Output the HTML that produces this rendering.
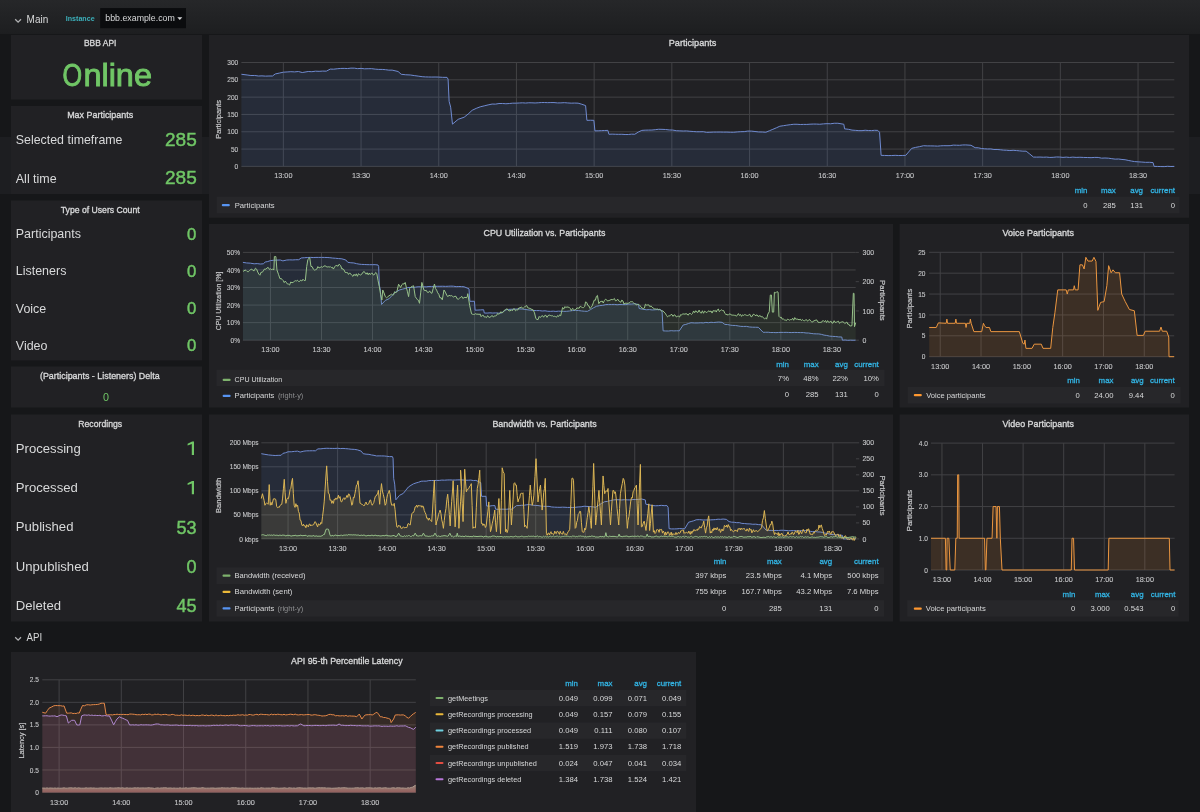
<!DOCTYPE html>
<html><head><meta charset="utf-8"><title>BBB Dashboard</title>
<style>html,body{margin:0;padding:0;background:#161719;width:1200px;height:812px;overflow:hidden}svg{display:block;will-change:transform}text{font-family:"Liberation Sans",sans-serif}</style>
</head><body>
<svg width="1200" height="812" viewBox="0 0 1200 812" font-family="Liberation Sans, sans-serif">
<defs><linearGradient id="topg" x1="0" y1="0" x2="0" y2="1"><stop offset="0" stop-color="#262729"/><stop offset="1" stop-color="#1d1e20"/></linearGradient></defs>
<rect x="0.00" y="0.00" width="1200.00" height="812.00" fill="#161719" />
<rect x="0.00" y="0.00" width="1200.00" height="34.00" fill="url(#topg)" />
<rect x="0.00" y="137.00" width="1200.00" height="57.00" fill="#1d1e21" />
<path d="M15.2,19.3 L18.1,22.2 L21,19.3" fill="none" stroke="#b0b1b3" stroke-width="1.3"/>
<text x="26.60" y="23.20" font-size="10.4" fill="#d8d9da" textLength="21.60" lengthAdjust="spacingAndGlyphs" >Main</text>
<text x="65.80" y="20.80" font-size="7.6" fill="#3cb0bb" textLength="28.80" lengthAdjust="spacingAndGlyphs" font-weight="bold" >Instance</text>
<rect x="100.20" y="8.10" width="85.80" height="20.10" fill="#0b0c0e" />
<text x="105.30" y="21.40" font-size="8.9" fill="#d8d9da" textLength="69.50" lengthAdjust="spacingAndGlyphs" >bbb.example.com</text>
<path d="M177.3,17.2 L182.3,17.2 L179.8,19.9 Z" fill="#d8d9da"/>
<path d="M15.2,637.2 L18.1,640.1 L21,637.2" fill="none" stroke="#b0b1b3" stroke-width="1.3"/>
<text x="26.50" y="640.80" font-size="10.4" fill="#d8d9da" textLength="15.60" lengthAdjust="spacingAndGlyphs" >API</text>
<rect x="11.00" y="35.00" width="191.00" height="64.60" fill="#212124" />
<rect x="11.00" y="106.00" width="191.00" height="88.00" fill="#212124" />
<rect x="11.00" y="200.40" width="191.00" height="160.00" fill="#212124" />
<rect x="11.00" y="366.40" width="191.00" height="41.20" fill="#212124" />
<rect x="11.00" y="414.40" width="191.00" height="207.20" fill="#212124" />
<rect x="209.00" y="35.00" width="980.00" height="182.80" fill="#212124" />
<rect x="209.00" y="224.00" width="684.00" height="183.60" fill="#212124" />
<rect x="899.60" y="224.00" width="289.40" height="183.60" fill="#212124" />
<rect x="209.00" y="414.40" width="684.00" height="207.20" fill="#212124" />
<rect x="899.60" y="414.40" width="289.40" height="207.20" fill="#212124" />
<rect x="11.00" y="652.00" width="685.00" height="160.00" fill="#212124" />
<text x="100.20" y="46.40" font-size="9.0" fill="#d8d9da" stroke="#d8d9da" stroke-width="0.32" text-anchor="middle" textLength="32.40" lengthAdjust="spacingAndGlyphs" >BBB API</text>
<text x="62.40" y="86.40" font-size="31.5" fill="#70c666" stroke="#70c666" stroke-width="0.9" textLength="19.60" lengthAdjust="spacingAndGlyphs" >O</text>
<text x="83.40" y="86.40" font-size="31.5" fill="#70c666" stroke="#70c666" stroke-width="0.9" textLength="68.60" lengthAdjust="spacingAndGlyphs" >nline</text>
<text x="100.20" y="117.60" font-size="9.0" fill="#d8d9da" stroke="#d8d9da" stroke-width="0.32" text-anchor="middle" textLength="66.00" lengthAdjust="spacingAndGlyphs" >Max Participants</text>
<text x="15.80" y="144.20" font-size="13.6" fill="#d8d9da" textLength="106.70" lengthAdjust="spacingAndGlyphs" >Selected timeframe</text>
<text x="196.70" y="145.80" font-size="18.4" fill="#70c666" stroke="#70c666" stroke-width="0.45" text-anchor="end" textLength="31.70" lengthAdjust="spacingAndGlyphs" >285</text>
<text x="15.80" y="182.50" font-size="13.6" fill="#d8d9da" textLength="40.90" lengthAdjust="spacingAndGlyphs" >All time</text>
<text x="196.70" y="184.20" font-size="18.4" fill="#70c666" stroke="#70c666" stroke-width="0.45" text-anchor="end" textLength="31.70" lengthAdjust="spacingAndGlyphs" >285</text>
<text x="100.20" y="213.00" font-size="9.0" fill="#d8d9da" stroke="#d8d9da" stroke-width="0.32" text-anchor="middle" textLength="78.80" lengthAdjust="spacingAndGlyphs" >Type of Users Count</text>
<text x="15.80" y="238.30" font-size="13.4" fill="#d8d9da" textLength="65.11" lengthAdjust="spacingAndGlyphs" >Participants</text>
<text x="196.30" y="239.50" font-size="16.5" fill="#70c666" stroke="#70c666" stroke-width="0.45" text-anchor="end" textLength="9.30" lengthAdjust="spacingAndGlyphs" >0</text>
<text x="15.80" y="275.40" font-size="13.4" fill="#d8d9da" textLength="50.57" lengthAdjust="spacingAndGlyphs" >Listeners</text>
<text x="196.30" y="276.60" font-size="16.5" fill="#70c666" stroke="#70c666" stroke-width="0.45" text-anchor="end" textLength="9.30" lengthAdjust="spacingAndGlyphs" >0</text>
<text x="15.80" y="312.50" font-size="13.4" fill="#d8d9da" textLength="30.49" lengthAdjust="spacingAndGlyphs" >Voice</text>
<text x="196.30" y="313.70" font-size="16.5" fill="#70c666" stroke="#70c666" stroke-width="0.45" text-anchor="end" textLength="9.30" lengthAdjust="spacingAndGlyphs" >0</text>
<text x="15.80" y="349.60" font-size="13.4" fill="#d8d9da" textLength="31.65" lengthAdjust="spacingAndGlyphs" >Video</text>
<text x="196.30" y="350.80" font-size="16.5" fill="#70c666" stroke="#70c666" stroke-width="0.45" text-anchor="end" textLength="9.30" lengthAdjust="spacingAndGlyphs" >0</text>
<text x="99.80" y="378.80" font-size="9.0" fill="#d8d9da" stroke="#d8d9da" stroke-width="0.32" text-anchor="middle" textLength="119.70" lengthAdjust="spacingAndGlyphs" >(Participants - Listeners) Delta</text>
<text x="106.00" y="400.50" font-size="11" fill="#70c666" text-anchor="middle" textLength="6.00" lengthAdjust="spacingAndGlyphs" >0</text>
<text x="100.20" y="426.70" font-size="9.0" fill="#d8d9da" stroke="#d8d9da" stroke-width="0.32" text-anchor="middle" textLength="43.80" lengthAdjust="spacingAndGlyphs" >Recordings</text>
<text x="15.80" y="452.50" font-size="13.6" fill="#d8d9da" textLength="64.92" lengthAdjust="spacingAndGlyphs" >Processing</text>
<path d="M194.0,441.50 L194.0,454.90 L191.8,454.90 L191.8,444.00 L187.6,445.60 L187.6,443.80 L192.1,441.50 Z" fill="#70c666"/>
<text x="15.80" y="491.90" font-size="13.6" fill="#d8d9da" textLength="62.01" lengthAdjust="spacingAndGlyphs" >Processed</text>
<path d="M194.0,480.90 L194.0,494.30 L191.8,494.30 L191.8,483.40 L187.6,485.00 L187.6,483.20 L192.1,480.90 Z" fill="#70c666"/>
<text x="15.80" y="531.30" font-size="13.6" fill="#d8d9da" textLength="57.64" lengthAdjust="spacingAndGlyphs" >Published</text>
<text x="196.50" y="533.50" font-size="18.4" fill="#70c666" stroke="#70c666" stroke-width="0.45" text-anchor="end" textLength="20.06" lengthAdjust="spacingAndGlyphs" >53</text>
<text x="15.80" y="570.70" font-size="13.6" fill="#d8d9da" textLength="72.96" lengthAdjust="spacingAndGlyphs" >Unpublished</text>
<text x="196.50" y="572.90" font-size="18.4" fill="#70c666" stroke="#70c666" stroke-width="0.45" text-anchor="end" textLength="10.03" lengthAdjust="spacingAndGlyphs" >0</text>
<text x="15.80" y="610.10" font-size="13.6" fill="#d8d9da" textLength="45.24" lengthAdjust="spacingAndGlyphs" >Deleted</text>
<text x="196.50" y="612.30" font-size="18.4" fill="#70c666" stroke="#70c666" stroke-width="0.45" text-anchor="end" textLength="20.06" lengthAdjust="spacingAndGlyphs" >45</text>
<text x="692.60" y="46.00" font-size="9.2" fill="#d8d9da" stroke="#d8d9da" stroke-width="0.32" text-anchor="middle" textLength="47.70" lengthAdjust="spacingAndGlyphs" >Participants</text>
<line x1="241.40" y1="166.40" x2="1174.30" y2="166.40" stroke="#424245" stroke-width="1"/>
<line x1="241.40" y1="149.08" x2="1174.30" y2="149.08" stroke="#424245" stroke-width="1"/>
<line x1="241.40" y1="131.77" x2="1174.30" y2="131.77" stroke="#424245" stroke-width="1"/>
<line x1="241.40" y1="114.45" x2="1174.30" y2="114.45" stroke="#424245" stroke-width="1"/>
<line x1="241.40" y1="97.13" x2="1174.30" y2="97.13" stroke="#424245" stroke-width="1"/>
<line x1="241.40" y1="79.82" x2="1174.30" y2="79.82" stroke="#424245" stroke-width="1"/>
<line x1="241.40" y1="62.50" x2="1174.30" y2="62.50" stroke="#424245" stroke-width="1"/>
<line x1="283.36" y1="62.50" x2="283.36" y2="166.40" stroke="#424245" stroke-width="1"/>
<line x1="361.06" y1="62.50" x2="361.06" y2="166.40" stroke="#424245" stroke-width="1"/>
<line x1="438.75" y1="62.50" x2="438.75" y2="166.40" stroke="#424245" stroke-width="1"/>
<line x1="516.45" y1="62.50" x2="516.45" y2="166.40" stroke="#424245" stroke-width="1"/>
<line x1="594.15" y1="62.50" x2="594.15" y2="166.40" stroke="#424245" stroke-width="1"/>
<line x1="671.85" y1="62.50" x2="671.85" y2="166.40" stroke="#424245" stroke-width="1"/>
<line x1="749.55" y1="62.50" x2="749.55" y2="166.40" stroke="#424245" stroke-width="1"/>
<line x1="827.25" y1="62.50" x2="827.25" y2="166.40" stroke="#424245" stroke-width="1"/>
<line x1="904.95" y1="62.50" x2="904.95" y2="166.40" stroke="#424245" stroke-width="1"/>
<line x1="982.64" y1="62.50" x2="982.64" y2="166.40" stroke="#424245" stroke-width="1"/>
<line x1="1060.34" y1="62.50" x2="1060.34" y2="166.40" stroke="#424245" stroke-width="1"/>
<line x1="1138.04" y1="62.50" x2="1138.04" y2="166.40" stroke="#424245" stroke-width="1"/>
<path d="M241.40,74.28 L247.10,74.97 L250.90,75.52 L254.70,75.47 L258.49,76.01 L261.99,75.86 L265.49,76.14 L268.98,76.01 L272.48,76.01 L275.33,73.93 L279.34,73.09 L283.36,72.20 L287.11,71.94 L290.87,71.69 L294.62,71.90 L298.38,71.50 L302.26,72.54 L308.22,71.50 L311.85,71.70 L315.47,71.18 L319.10,71.33 L322.72,71.08 L326.35,71.16 L330.24,69.08 L333.73,69.18 L337.23,68.76 L340.72,68.44 L344.22,68.39 L347.59,68.54 L350.95,68.14 L354.32,68.17 L357.69,68.65 L361.06,68.39 L364.60,68.82 L368.13,68.71 L371.67,68.66 L375.21,69.15 L378.75,69.41 L382.29,69.43 L385.57,69.70 L388.85,70.15 L392.14,70.12 L398.09,71.50 L401.20,74.28 L405.73,74.78 L410.26,74.97 L414.24,75.58 L418.21,76.12 L422.18,76.70 L425.39,76.92 L428.60,76.99 L431.81,77.06 L435.02,77.00 L438.24,77.05 L442.64,77.34 L447.04,77.39 L448.08,79.12 L449.11,101.29 L450.67,107.18 L452.48,124.15 L458.18,119.30 L464.14,117.22 L468.15,114.02 L472.16,110.29 L476.18,108.38 L480.19,106.83 L484.16,105.88 L488.14,104.90 L492.11,104.06 L495.55,104.11 L498.99,103.53 L502.43,103.47 L505.87,103.76 L509.31,103.51 L512.75,103.17 L516.19,103.16 L519.34,102.99 L522.50,102.82 L525.65,103.06 L528.80,102.78 L531.95,102.82 L535.10,102.97 L538.25,102.77 L541.40,102.56 L544.55,102.53 L547.70,102.67 L550.86,102.57 L554.01,102.57 L557.45,102.91 L560.89,102.88 L564.33,102.66 L567.77,102.95 L571.21,103.17 L574.65,103.05 L578.09,103.16 L581.85,104.26 L585.60,105.58 L586.90,120.34 L590.40,120.24 L593.89,120.34 L594.93,130.87 L598.17,130.81 L601.40,130.66 L604.64,130.50 L607.88,130.38 L608.91,134.26 L612.15,134.11 L615.39,134.25 L618.63,134.32 L621.86,134.27 L625.10,134.52 L628.34,134.51 L631.58,134.15 L634.81,134.26 L638.31,132.05 L641.81,130.38 L645.17,130.16 L648.54,130.09 L651.91,130.04 L655.27,129.69 L658.64,129.25 L662.01,129.34 L665.58,129.50 L669.16,129.93 L672.73,130.06 L676.30,130.71 L679.88,130.87 L683.22,131.01 L686.55,130.92 L689.89,131.28 L693.23,131.50 L696.57,131.76 L699.91,131.76 L703.25,131.69 L706.58,132.37 L709.92,132.25 L713.33,132.09 L716.73,132.07 L720.13,132.04 L723.54,132.12 L726.94,132.08 L730.35,132.24 L733.75,132.25 L737.25,131.92 L740.74,131.70 L744.24,131.61 L747.74,131.07 L751.36,131.10 L754.99,131.51 L758.61,131.95 L762.24,132.01 L765.86,132.25 L769.36,130.75 L772.86,129.32 L776.35,127.82 L779.85,126.23 L783.35,125.71 L786.84,125.17 L790.34,124.68 L793.84,124.25 L797.07,124.27 L800.31,124.51 L803.55,124.40 L806.79,124.43 L810.02,124.20 L813.26,124.05 L816.50,124.09 L819.74,124.25 L823.36,123.89 L826.99,123.67 L830.61,123.78 L834.24,123.26 L837.87,123.25 L843.82,124.25 L844.60,128.86 L848.31,129.27 L852.02,130.10 L855.74,130.38 L858.88,130.65 L862.03,130.65 L865.17,130.24 L868.32,130.52 L871.46,130.60 L874.61,130.31 L877.75,130.38 L879.56,132.25 L881.12,155.35 L884.63,155.44 L888.15,155.59 L891.66,155.54 L895.18,155.34 L898.69,155.54 L902.21,155.48 L905.72,155.35 L911.68,148.39 L915.65,147.38 L919.62,146.64 L923.59,145.72 L927.22,145.90 L930.84,145.90 L934.47,145.97 L937.60,146.13 L940.74,145.82 L943.87,145.70 L947.01,145.72 L950.14,145.66 L953.27,145.12 L956.41,145.23 L959.54,145.30 L962.68,144.97 L965.81,144.93 L970.99,145.27 L975.13,147.70 L978.27,147.79 L981.41,148.50 L984.54,148.77 L987.68,148.97 L990.82,148.92 L993.95,149.50 L997.09,149.47 L1000.23,149.75 L1003.36,150.12 L1006.62,150.25 L1009.88,150.57 L1013.13,150.30 L1016.39,150.55 L1019.64,150.86 L1022.90,151.17 L1026.15,151.16 L1029.78,154.02 L1033.41,157.05 L1036.69,157.13 L1039.98,157.06 L1043.27,157.23 L1046.56,157.08 L1049.84,157.43 L1053.13,157.32 L1056.42,156.98 L1059.70,157.05 L1062.99,157.40 L1066.28,157.12 L1069.57,157.45 L1072.85,157.13 L1076.14,157.40 L1079.87,157.26 L1083.60,157.44 L1087.33,157.53 L1091.06,157.67 L1094.79,157.40 L1098.19,157.45 L1101.59,158.17 L1104.99,158.00 L1108.39,158.18 L1111.79,158.66 L1115.18,159.14 L1118.58,159.01 L1121.98,159.47 L1125.09,159.73 L1128.20,160.40 L1131.31,161.03 L1134.41,161.55 L1138.14,161.83 L1141.87,162.05 L1145.60,162.34 L1149.33,162.29 L1153.06,162.59 L1154.10,166.40 L1157.47,166.44 L1160.83,166.57 L1164.20,166.62 L1167.57,166.31 L1170.93,166.51 L1174.30,166.40 L1174.30,166.40 L241.40,166.40 Z" fill="#5794f2" fill-opacity="0.1"/>
<path d="M241.40,74.28 L247.10,74.97 L250.90,75.52 L254.70,75.47 L258.49,76.01 L261.99,75.86 L265.49,76.14 L268.98,76.01 L272.48,76.01 L275.33,73.93 L279.34,73.09 L283.36,72.20 L287.11,71.94 L290.87,71.69 L294.62,71.90 L298.38,71.50 L302.26,72.54 L308.22,71.50 L311.85,71.70 L315.47,71.18 L319.10,71.33 L322.72,71.08 L326.35,71.16 L330.24,69.08 L333.73,69.18 L337.23,68.76 L340.72,68.44 L344.22,68.39 L347.59,68.54 L350.95,68.14 L354.32,68.17 L357.69,68.65 L361.06,68.39 L364.60,68.82 L368.13,68.71 L371.67,68.66 L375.21,69.15 L378.75,69.41 L382.29,69.43 L385.57,69.70 L388.85,70.15 L392.14,70.12 L398.09,71.50 L401.20,74.28 L405.73,74.78 L410.26,74.97 L414.24,75.58 L418.21,76.12 L422.18,76.70 L425.39,76.92 L428.60,76.99 L431.81,77.06 L435.02,77.00 L438.24,77.05 L442.64,77.34 L447.04,77.39 L448.08,79.12 L449.11,101.29 L450.67,107.18 L452.48,124.15 L458.18,119.30 L464.14,117.22 L468.15,114.02 L472.16,110.29 L476.18,108.38 L480.19,106.83 L484.16,105.88 L488.14,104.90 L492.11,104.06 L495.55,104.11 L498.99,103.53 L502.43,103.47 L505.87,103.76 L509.31,103.51 L512.75,103.17 L516.19,103.16 L519.34,102.99 L522.50,102.82 L525.65,103.06 L528.80,102.78 L531.95,102.82 L535.10,102.97 L538.25,102.77 L541.40,102.56 L544.55,102.53 L547.70,102.67 L550.86,102.57 L554.01,102.57 L557.45,102.91 L560.89,102.88 L564.33,102.66 L567.77,102.95 L571.21,103.17 L574.65,103.05 L578.09,103.16 L581.85,104.26 L585.60,105.58 L586.90,120.34 L590.40,120.24 L593.89,120.34 L594.93,130.87 L598.17,130.81 L601.40,130.66 L604.64,130.50 L607.88,130.38 L608.91,134.26 L612.15,134.11 L615.39,134.25 L618.63,134.32 L621.86,134.27 L625.10,134.52 L628.34,134.51 L631.58,134.15 L634.81,134.26 L638.31,132.05 L641.81,130.38 L645.17,130.16 L648.54,130.09 L651.91,130.04 L655.27,129.69 L658.64,129.25 L662.01,129.34 L665.58,129.50 L669.16,129.93 L672.73,130.06 L676.30,130.71 L679.88,130.87 L683.22,131.01 L686.55,130.92 L689.89,131.28 L693.23,131.50 L696.57,131.76 L699.91,131.76 L703.25,131.69 L706.58,132.37 L709.92,132.25 L713.33,132.09 L716.73,132.07 L720.13,132.04 L723.54,132.12 L726.94,132.08 L730.35,132.24 L733.75,132.25 L737.25,131.92 L740.74,131.70 L744.24,131.61 L747.74,131.07 L751.36,131.10 L754.99,131.51 L758.61,131.95 L762.24,132.01 L765.86,132.25 L769.36,130.75 L772.86,129.32 L776.35,127.82 L779.85,126.23 L783.35,125.71 L786.84,125.17 L790.34,124.68 L793.84,124.25 L797.07,124.27 L800.31,124.51 L803.55,124.40 L806.79,124.43 L810.02,124.20 L813.26,124.05 L816.50,124.09 L819.74,124.25 L823.36,123.89 L826.99,123.67 L830.61,123.78 L834.24,123.26 L837.87,123.25 L843.82,124.25 L844.60,128.86 L848.31,129.27 L852.02,130.10 L855.74,130.38 L858.88,130.65 L862.03,130.65 L865.17,130.24 L868.32,130.52 L871.46,130.60 L874.61,130.31 L877.75,130.38 L879.56,132.25 L881.12,155.35 L884.63,155.44 L888.15,155.59 L891.66,155.54 L895.18,155.34 L898.69,155.54 L902.21,155.48 L905.72,155.35 L911.68,148.39 L915.65,147.38 L919.62,146.64 L923.59,145.72 L927.22,145.90 L930.84,145.90 L934.47,145.97 L937.60,146.13 L940.74,145.82 L943.87,145.70 L947.01,145.72 L950.14,145.66 L953.27,145.12 L956.41,145.23 L959.54,145.30 L962.68,144.97 L965.81,144.93 L970.99,145.27 L975.13,147.70 L978.27,147.79 L981.41,148.50 L984.54,148.77 L987.68,148.97 L990.82,148.92 L993.95,149.50 L997.09,149.47 L1000.23,149.75 L1003.36,150.12 L1006.62,150.25 L1009.88,150.57 L1013.13,150.30 L1016.39,150.55 L1019.64,150.86 L1022.90,151.17 L1026.15,151.16 L1029.78,154.02 L1033.41,157.05 L1036.69,157.13 L1039.98,157.06 L1043.27,157.23 L1046.56,157.08 L1049.84,157.43 L1053.13,157.32 L1056.42,156.98 L1059.70,157.05 L1062.99,157.40 L1066.28,157.12 L1069.57,157.45 L1072.85,157.13 L1076.14,157.40 L1079.87,157.26 L1083.60,157.44 L1087.33,157.53 L1091.06,157.67 L1094.79,157.40 L1098.19,157.45 L1101.59,158.17 L1104.99,158.00 L1108.39,158.18 L1111.79,158.66 L1115.18,159.14 L1118.58,159.01 L1121.98,159.47 L1125.09,159.73 L1128.20,160.40 L1131.31,161.03 L1134.41,161.55 L1138.14,161.83 L1141.87,162.05 L1145.60,162.34 L1149.33,162.29 L1153.06,162.59 L1154.10,166.40 L1157.47,166.44 L1160.83,166.57 L1164.20,166.62 L1167.57,166.31 L1170.93,166.51 L1174.30,166.40" fill="none" stroke="#6f8ad0" stroke-width="1.0" stroke-linejoin="round"/>
<text x="238.20" y="169.00" font-size="7.3" fill="#c4c5c7" stroke="#c4c5c7" stroke-width="0.12" text-anchor="end" textLength="3.65" lengthAdjust="spacingAndGlyphs" >0</text>
<text x="238.20" y="151.68" font-size="7.3" fill="#c4c5c7" stroke="#c4c5c7" stroke-width="0.12" text-anchor="end" textLength="7.31" lengthAdjust="spacingAndGlyphs" >50</text>
<text x="238.20" y="134.37" font-size="7.3" fill="#c4c5c7" stroke="#c4c5c7" stroke-width="0.12" text-anchor="end" textLength="10.96" lengthAdjust="spacingAndGlyphs" >100</text>
<text x="238.20" y="117.05" font-size="7.3" fill="#c4c5c7" stroke="#c4c5c7" stroke-width="0.12" text-anchor="end" textLength="10.96" lengthAdjust="spacingAndGlyphs" >150</text>
<text x="238.20" y="99.73" font-size="7.3" fill="#c4c5c7" stroke="#c4c5c7" stroke-width="0.12" text-anchor="end" textLength="10.96" lengthAdjust="spacingAndGlyphs" >200</text>
<text x="238.20" y="82.42" font-size="7.3" fill="#c4c5c7" stroke="#c4c5c7" stroke-width="0.12" text-anchor="end" textLength="10.96" lengthAdjust="spacingAndGlyphs" >250</text>
<text x="238.20" y="65.10" font-size="7.3" fill="#c4c5c7" stroke="#c4c5c7" stroke-width="0.12" text-anchor="end" textLength="10.96" lengthAdjust="spacingAndGlyphs" >300</text>
<text x="283.36" y="178.30" font-size="7.5" fill="#c4c5c7" stroke="#c4c5c7" stroke-width="0.12" text-anchor="middle" textLength="18.21" lengthAdjust="spacingAndGlyphs" >13:00</text>
<text x="361.06" y="178.30" font-size="7.5" fill="#c4c5c7" stroke="#c4c5c7" stroke-width="0.12" text-anchor="middle" textLength="18.21" lengthAdjust="spacingAndGlyphs" >13:30</text>
<text x="438.75" y="178.30" font-size="7.5" fill="#c4c5c7" stroke="#c4c5c7" stroke-width="0.12" text-anchor="middle" textLength="18.21" lengthAdjust="spacingAndGlyphs" >14:00</text>
<text x="516.45" y="178.30" font-size="7.5" fill="#c4c5c7" stroke="#c4c5c7" stroke-width="0.12" text-anchor="middle" textLength="18.21" lengthAdjust="spacingAndGlyphs" >14:30</text>
<text x="594.15" y="178.30" font-size="7.5" fill="#c4c5c7" stroke="#c4c5c7" stroke-width="0.12" text-anchor="middle" textLength="18.21" lengthAdjust="spacingAndGlyphs" >15:00</text>
<text x="671.85" y="178.30" font-size="7.5" fill="#c4c5c7" stroke="#c4c5c7" stroke-width="0.12" text-anchor="middle" textLength="18.21" lengthAdjust="spacingAndGlyphs" >15:30</text>
<text x="749.55" y="178.30" font-size="7.5" fill="#c4c5c7" stroke="#c4c5c7" stroke-width="0.12" text-anchor="middle" textLength="18.21" lengthAdjust="spacingAndGlyphs" >16:00</text>
<text x="827.25" y="178.30" font-size="7.5" fill="#c4c5c7" stroke="#c4c5c7" stroke-width="0.12" text-anchor="middle" textLength="18.21" lengthAdjust="spacingAndGlyphs" >16:30</text>
<text x="904.95" y="178.30" font-size="7.5" fill="#c4c5c7" stroke="#c4c5c7" stroke-width="0.12" text-anchor="middle" textLength="18.21" lengthAdjust="spacingAndGlyphs" >17:00</text>
<text x="982.64" y="178.30" font-size="7.5" fill="#c4c5c7" stroke="#c4c5c7" stroke-width="0.12" text-anchor="middle" textLength="18.21" lengthAdjust="spacingAndGlyphs" >17:30</text>
<text x="1060.34" y="178.30" font-size="7.5" fill="#c4c5c7" stroke="#c4c5c7" stroke-width="0.12" text-anchor="middle" textLength="18.21" lengthAdjust="spacingAndGlyphs" >18:00</text>
<text x="1138.04" y="178.30" font-size="7.5" fill="#c4c5c7" stroke="#c4c5c7" stroke-width="0.12" text-anchor="middle" textLength="18.21" lengthAdjust="spacingAndGlyphs" >18:30</text>
<text x="0" y="0" font-size="7.4" fill="#c4c5c7" text-anchor="middle" textLength="38.80" lengthAdjust="spacingAndGlyphs" stroke="#c4c5c7" stroke-width="0.2" transform="translate(218.80,119.40) rotate(-90)" dy="2.66">Participants</text>
<rect x="216.70" y="196.60" width="962.80" height="16.80" fill="#27272a" />
<text x="1087.50" y="193.00" font-size="7.9" fill="#33b5e5" stroke="#33b5e5" stroke-width="0.3" text-anchor="end" textLength="12.73" lengthAdjust="spacingAndGlyphs" >min</text>
<text x="1115.80" y="193.00" font-size="7.9" fill="#33b5e5" stroke="#33b5e5" stroke-width="0.3" text-anchor="end" textLength="14.92" lengthAdjust="spacingAndGlyphs" >max</text>
<text x="1143.00" y="193.00" font-size="7.9" fill="#33b5e5" stroke="#33b5e5" stroke-width="0.3" text-anchor="end" textLength="12.74" lengthAdjust="spacingAndGlyphs" >avg</text>
<text x="1175.00" y="193.00" font-size="7.9" fill="#33b5e5" stroke="#33b5e5" stroke-width="0.3" text-anchor="end" textLength="24.59" lengthAdjust="spacingAndGlyphs" >current</text>
<text x="1087.50" y="207.70" font-size="7.7" fill="#d8d9da" text-anchor="end" textLength="4.28" lengthAdjust="spacingAndGlyphs" >0</text>
<text x="1115.80" y="207.70" font-size="7.7" fill="#d8d9da" text-anchor="end" textLength="12.85" lengthAdjust="spacingAndGlyphs" >285</text>
<text x="1143.00" y="207.70" font-size="7.7" fill="#d8d9da" text-anchor="end" textLength="12.85" lengthAdjust="spacingAndGlyphs" >131</text>
<text x="1175.00" y="207.70" font-size="7.7" fill="#d8d9da" text-anchor="end" textLength="4.28" lengthAdjust="spacingAndGlyphs" >0</text>
<rect x="221.80" y="204.10" width="8" height="2.2" rx="1" fill="#5794f2"/>
<text x="234.70" y="207.70" font-size="7.4" fill="#d8d9da" textLength="40.00" lengthAdjust="spacingAndGlyphs" >Participants</text>
<text x="544.50" y="236.10" font-size="9.0" fill="#d8d9da" stroke="#d8d9da" stroke-width="0.32" text-anchor="middle" textLength="122.00" lengthAdjust="spacingAndGlyphs" >CPU Utilization vs. Participants</text>
<line x1="242.90" y1="340.20" x2="855.70" y2="340.20" stroke="#424245" stroke-width="1"/>
<line x1="242.90" y1="322.64" x2="855.70" y2="322.64" stroke="#424245" stroke-width="1"/>
<line x1="242.90" y1="305.08" x2="855.70" y2="305.08" stroke="#424245" stroke-width="1"/>
<line x1="242.90" y1="287.52" x2="855.70" y2="287.52" stroke="#424245" stroke-width="1"/>
<line x1="242.90" y1="269.96" x2="855.70" y2="269.96" stroke="#424245" stroke-width="1"/>
<line x1="242.90" y1="252.40" x2="855.70" y2="252.40" stroke="#424245" stroke-width="1"/>
<line x1="270.46" y1="252.40" x2="270.46" y2="340.20" stroke="#424245" stroke-width="1"/>
<line x1="321.50" y1="252.40" x2="321.50" y2="340.20" stroke="#424245" stroke-width="1"/>
<line x1="372.54" y1="252.40" x2="372.54" y2="340.20" stroke="#424245" stroke-width="1"/>
<line x1="423.58" y1="252.40" x2="423.58" y2="340.20" stroke="#424245" stroke-width="1"/>
<line x1="474.61" y1="252.40" x2="474.61" y2="340.20" stroke="#424245" stroke-width="1"/>
<line x1="525.65" y1="252.40" x2="525.65" y2="340.20" stroke="#424245" stroke-width="1"/>
<line x1="576.69" y1="252.40" x2="576.69" y2="340.20" stroke="#424245" stroke-width="1"/>
<line x1="627.73" y1="252.40" x2="627.73" y2="340.20" stroke="#424245" stroke-width="1"/>
<line x1="678.77" y1="252.40" x2="678.77" y2="340.20" stroke="#424245" stroke-width="1"/>
<line x1="729.81" y1="252.40" x2="729.81" y2="340.20" stroke="#424245" stroke-width="1"/>
<line x1="780.84" y1="252.40" x2="780.84" y2="340.20" stroke="#424245" stroke-width="1"/>
<line x1="831.88" y1="252.40" x2="831.88" y2="340.20" stroke="#424245" stroke-width="1"/>
<path d="M242.90,262.35 L246.64,262.94 L250.39,263.16 L254.13,263.81 L257.19,263.60 L260.25,264.02 L263.32,263.81 L265.19,262.06 L267.82,261.52 L270.46,260.59 L273.75,260.24 L277.04,260.09 L280.33,260.01 L282.88,260.89 L286.79,260.01 L289.77,259.86 L292.75,259.95 L295.72,259.74 L298.70,259.72 L301.25,257.96 L304.32,257.72 L307.38,257.53 L310.44,257.38 L313.21,257.54 L315.97,257.41 L318.73,257.43 L321.50,257.38 L324.29,257.45 L327.08,257.49 L329.87,257.69 L332.66,258.06 L335.45,258.25 L338.68,258.57 L341.91,258.84 L345.83,260.01 L347.87,262.35 L350.85,262.75 L353.82,262.94 L356.43,263.64 L359.04,264.13 L361.65,264.40 L364.29,264.49 L366.92,264.63 L369.56,264.68 L372.20,264.69 L375.09,264.65 L377.98,264.98 L378.66,266.45 L379.34,285.18 L380.36,290.15 L381.55,304.49 L385.30,300.40 L389.21,298.64 L391.85,295.70 L394.48,292.79 L397.12,291.30 L399.76,289.86 L402.37,289.20 L404.97,288.52 L407.58,287.52 L410.22,287.48 L412.86,287.44 L415.49,287.13 L418.13,286.78 L420.77,286.80 L423.41,286.76 L426.17,286.85 L428.93,286.46 L431.69,286.45 L434.44,286.43 L437.20,286.29 L439.96,286.30 L442.72,286.24 L445.48,286.39 L448.24,286.26 L450.88,286.12 L453.52,286.21 L456.16,286.67 L458.79,286.47 L461.43,286.58 L464.07,286.76 L469.00,288.81 L469.85,301.28 L474.44,301.28 L475.12,310.17 L477.96,310.05 L480.80,309.89 L483.63,309.76 L484.31,313.04 L487.15,313.05 L489.98,312.84 L492.82,313.04 L495.65,312.89 L498.49,313.11 L501.32,313.04 L505.92,309.76 L508.57,309.41 L511.23,309.22 L513.88,309.25 L516.53,309.03 L519.19,308.88 L522.12,309.01 L525.06,309.42 L527.99,309.86 L530.93,310.17 L533.75,310.47 L536.56,310.59 L539.38,310.58 L542.20,311.00 L545.02,310.82 L547.84,311.28 L550.66,311.34 L553.27,311.15 L555.88,311.43 L558.49,311.13 L561.10,311.25 L563.70,311.34 L566.31,311.34 L569.38,311.00 L572.44,310.61 L575.50,310.35 L578.48,310.56 L581.45,310.93 L584.43,311.23 L587.41,311.34 L590.47,309.64 L593.53,307.74 L596.60,306.25 L599.66,305.64 L602.72,305.34 L605.78,304.58 L608.62,304.43 L611.45,304.48 L614.29,304.39 L617.12,304.73 L619.96,304.47 L622.80,304.58 L625.77,304.58 L628.75,304.09 L631.73,304.05 L634.70,303.73 L638.62,304.58 L639.13,308.47 L642.79,309.25 L646.44,309.76 L649.34,309.59 L652.23,309.95 L655.12,309.75 L658.01,309.60 L660.90,309.76 L662.09,311.34 L663.12,330.86 L665.81,330.98 L668.50,331.00 L671.20,330.69 L673.89,330.90 L676.58,330.76 L679.28,330.86 L683.19,324.98 L685.80,324.45 L688.41,323.54 L691.02,322.73 L694.59,322.98 L698.16,322.93 L700.73,322.74 L703.31,322.91 L705.88,322.39 L708.45,322.72 L711.03,322.28 L713.60,322.50 L716.17,322.28 L718.75,322.05 L722.15,322.35 L724.87,324.40 L727.52,324.54 L730.17,325.14 L732.82,325.42 L735.47,325.48 L738.12,325.91 L740.77,326.37 L743.42,326.44 L746.41,326.39 L749.40,326.96 L752.40,327.19 L755.39,327.22 L758.39,327.32 L763.15,332.30 L765.70,332.27 L768.25,332.24 L770.81,332.56 L773.36,332.48 L775.91,332.65 L778.46,332.48 L781.01,332.36 L783.57,332.40 L786.12,332.35 L788.67,332.44 L791.22,332.59 L794.28,332.42 L797.35,332.49 L800.41,332.60 L803.47,332.59 L806.02,332.97 L808.57,333.02 L811.13,333.43 L813.68,333.78 L816.23,333.87 L818.78,333.92 L821.33,334.35 L824.06,335.11 L826.78,335.48 L829.50,336.10 L832.56,336.37 L835.62,336.53 L838.69,336.93 L841.75,336.98 L842.43,340.20 L845.08,339.98 L847.74,340.31 L850.39,340.15 L853.05,340.24 L855.70,340.20 L855.70,340.20 L242.90,340.20 Z" fill="#5794f2" fill-opacity="0.1"/>
<path d="M242.90,262.35 L246.64,262.94 L250.39,263.16 L254.13,263.81 L257.19,263.60 L260.25,264.02 L263.32,263.81 L265.19,262.06 L267.82,261.52 L270.46,260.59 L273.75,260.24 L277.04,260.09 L280.33,260.01 L282.88,260.89 L286.79,260.01 L289.77,259.86 L292.75,259.95 L295.72,259.74 L298.70,259.72 L301.25,257.96 L304.32,257.72 L307.38,257.53 L310.44,257.38 L313.21,257.54 L315.97,257.41 L318.73,257.43 L321.50,257.38 L324.29,257.45 L327.08,257.49 L329.87,257.69 L332.66,258.06 L335.45,258.25 L338.68,258.57 L341.91,258.84 L345.83,260.01 L347.87,262.35 L350.85,262.75 L353.82,262.94 L356.43,263.64 L359.04,264.13 L361.65,264.40 L364.29,264.49 L366.92,264.63 L369.56,264.68 L372.20,264.69 L375.09,264.65 L377.98,264.98 L378.66,266.45 L379.34,285.18 L380.36,290.15 L381.55,304.49 L385.30,300.40 L389.21,298.64 L391.85,295.70 L394.48,292.79 L397.12,291.30 L399.76,289.86 L402.37,289.20 L404.97,288.52 L407.58,287.52 L410.22,287.48 L412.86,287.44 L415.49,287.13 L418.13,286.78 L420.77,286.80 L423.41,286.76 L426.17,286.85 L428.93,286.46 L431.69,286.45 L434.44,286.43 L437.20,286.29 L439.96,286.30 L442.72,286.24 L445.48,286.39 L448.24,286.26 L450.88,286.12 L453.52,286.21 L456.16,286.67 L458.79,286.47 L461.43,286.58 L464.07,286.76 L469.00,288.81 L469.85,301.28 L474.44,301.28 L475.12,310.17 L477.96,310.05 L480.80,309.89 L483.63,309.76 L484.31,313.04 L487.15,313.05 L489.98,312.84 L492.82,313.04 L495.65,312.89 L498.49,313.11 L501.32,313.04 L505.92,309.76 L508.57,309.41 L511.23,309.22 L513.88,309.25 L516.53,309.03 L519.19,308.88 L522.12,309.01 L525.06,309.42 L527.99,309.86 L530.93,310.17 L533.75,310.47 L536.56,310.59 L539.38,310.58 L542.20,311.00 L545.02,310.82 L547.84,311.28 L550.66,311.34 L553.27,311.15 L555.88,311.43 L558.49,311.13 L561.10,311.25 L563.70,311.34 L566.31,311.34 L569.38,311.00 L572.44,310.61 L575.50,310.35 L578.48,310.56 L581.45,310.93 L584.43,311.23 L587.41,311.34 L590.47,309.64 L593.53,307.74 L596.60,306.25 L599.66,305.64 L602.72,305.34 L605.78,304.58 L608.62,304.43 L611.45,304.48 L614.29,304.39 L617.12,304.73 L619.96,304.47 L622.80,304.58 L625.77,304.58 L628.75,304.09 L631.73,304.05 L634.70,303.73 L638.62,304.58 L639.13,308.47 L642.79,309.25 L646.44,309.76 L649.34,309.59 L652.23,309.95 L655.12,309.75 L658.01,309.60 L660.90,309.76 L662.09,311.34 L663.12,330.86 L665.81,330.98 L668.50,331.00 L671.20,330.69 L673.89,330.90 L676.58,330.76 L679.28,330.86 L683.19,324.98 L685.80,324.45 L688.41,323.54 L691.02,322.73 L694.59,322.98 L698.16,322.93 L700.73,322.74 L703.31,322.91 L705.88,322.39 L708.45,322.72 L711.03,322.28 L713.60,322.50 L716.17,322.28 L718.75,322.05 L722.15,322.35 L724.87,324.40 L727.52,324.54 L730.17,325.14 L732.82,325.42 L735.47,325.48 L738.12,325.91 L740.77,326.37 L743.42,326.44 L746.41,326.39 L749.40,326.96 L752.40,327.19 L755.39,327.22 L758.39,327.32 L763.15,332.30 L765.70,332.27 L768.25,332.24 L770.81,332.56 L773.36,332.48 L775.91,332.65 L778.46,332.48 L781.01,332.36 L783.57,332.40 L786.12,332.35 L788.67,332.44 L791.22,332.59 L794.28,332.42 L797.35,332.49 L800.41,332.60 L803.47,332.59 L806.02,332.97 L808.57,333.02 L811.13,333.43 L813.68,333.78 L816.23,333.87 L818.78,333.92 L821.33,334.35 L824.06,335.11 L826.78,335.48 L829.50,336.10 L832.56,336.37 L835.62,336.53 L838.69,336.93 L841.75,336.98 L842.43,340.20 L845.08,339.98 L847.74,340.31 L850.39,340.15 L853.05,340.24 L855.70,340.20" fill="none" stroke="#6f8ad0" stroke-width="1.0" stroke-linejoin="round"/>
<path d="M242.90,270.84 L243.92,271.23 L244.94,269.96 L246.08,270.41 L247.21,271.54 L248.34,271.72 L249.48,270.51 L250.61,269.56 L251.75,269.08 L252.98,270.50 L254.21,270.71 L255.45,268.15 L256.68,269.26 L257.76,272.01 L258.84,274.08 L259.91,275.23 L261.05,272.20 L262.18,272.40 L263.32,270.84 L264.55,268.94 L265.78,269.24 L267.02,267.90 L268.25,267.50 L269.38,269.43 L270.52,268.71 L271.65,269.96 L272.76,268.80 L273.86,269.96 L274.37,256.61 L275.90,256.61 L276.93,269.96 L278.46,274.28 L279.99,278.74 L281.07,278.56 L282.14,279.37 L283.22,280.50 L284.24,282.58 L285.26,281.08 L286.28,282.32 L287.30,283.93 L288.32,284.01 L289.56,285.05 L290.79,281.97 L292.02,282.78 L293.26,282.25 L294.28,281.38 L295.30,280.70 L296.32,281.05 L297.34,280.22 L298.36,281.37 L299.52,281.53 L300.68,280.07 L301.83,281.02 L302.99,279.29 L304.15,280.50 L305.34,280.50 L306.70,266.62 L307.89,259.42 L309.76,257.67 L310.95,266.45 L312.14,266.57 L313.33,269.08 L314.47,270.09 L315.60,269.71 L316.74,269.19 L317.87,266.56 L319.00,267.97 L320.14,267.50 L321.37,266.66 L322.60,267.25 L323.84,266.16 L325.07,265.75 L326.11,266.52 L327.16,267.05 L328.20,266.73 L329.24,267.15 L330.28,266.55 L331.32,267.67 L332.37,267.31 L333.41,269.08 L334.56,266.97 L335.72,265.56 L336.88,265.59 L338.04,266.21 L339.19,264.17 L340.55,265.48 L341.91,269.08 L342.99,268.73 L344.07,270.03 L345.15,272.42 L346.26,272.57 L347.38,272.48 L348.49,274.44 L349.61,272.85 L350.72,274.04 L351.84,275.32 L352.95,276.39 L354.07,274.27 L355.18,275.75 L356.28,273.84 L357.38,276.31 L358.47,273.69 L359.57,274.55 L360.67,275.01 L361.76,274.18 L362.86,272.31 L363.96,271.61 L365.05,272.42 L366.09,274.19 L367.14,272.71 L368.18,274.84 L369.22,273.04 L370.26,274.60 L371.30,273.19 L372.35,273.20 L373.39,275.05 L374.52,274.51 L375.66,272.42 L376.79,273.47 L378.07,280.66 L379.34,286.64 L380.62,294.65 L381.89,299.99 L382.74,289.98 L384.02,293.00 L385.30,296.65 L386.53,297.74 L387.76,296.82 L389.00,295.76 L390.23,295.07 L391.34,294.17 L392.44,295.05 L393.55,294.85 L394.65,291.68 L395.76,292.88 L396.87,291.73 L398.57,284.18 L400.61,287.52 L401.76,284.80 L402.91,283.72 L404.05,284.09 L405.20,282.43 L406.34,287.29 L407.47,291.85 L408.60,296.65 L409.63,288.40 L410.93,287.07 L412.23,286.34 L413.54,285.76 L415.24,296.65 L416.30,298.13 L417.37,299.61 L418.43,300.26 L419.49,303.32 L420.68,292.85 L421.87,282.43 L423.92,289.98 L425.06,290.67 L426.20,290.24 L427.34,292.24 L428.49,292.51 L429.63,290.85 L430.77,292.77 L431.91,293.31 L433.19,288.51 L434.46,284.01 L435.54,288.48 L436.62,290.13 L437.70,292.79 L438.84,294.29 L439.99,297.82 L441.14,297.69 L442.29,299.81 L443.99,289.98 L445.35,292.11 L446.71,295.07 L447.87,296.71 L449.03,295.16 L450.18,295.91 L451.34,295.49 L452.50,296.30 L453.69,297.06 L454.88,296.23 L456.07,296.43 L457.26,298.98 L458.45,299.15 L459.64,298.06 L460.71,297.37 L461.78,296.34 L462.85,298.47 L463.92,297.69 L464.99,297.14 L466.06,297.87 L467.13,297.18 L467.81,293.67 L469.68,305.61 L471.55,313.86 L472.63,314.29 L473.71,314.45 L474.78,314.27 L475.86,313.56 L476.94,314.49 L478.02,313.86 L479.06,314.67 L480.11,313.85 L481.15,316.63 L482.20,315.35 L483.24,315.25 L484.29,317.02 L485.33,316.85 L486.48,317.59 L487.63,315.62 L488.78,317.28 L489.93,317.31 L491.07,316.39 L492.22,315.43 L493.37,317.18 L494.52,315.79 L495.57,315.90 L496.63,315.40 L497.68,313.37 L498.74,314.16 L499.79,313.51 L500.98,311.65 L502.17,313.08 L503.37,311.81 L504.56,310.08 L505.75,309.82 L506.84,308.60 L507.92,309.98 L509.01,310.69 L510.10,311.02 L511.19,309.73 L512.28,310.80 L513.37,308.85 L514.46,308.75 L515.55,310.82 L516.64,309.82 L517.76,310.04 L518.89,307.88 L520.02,307.92 L521.14,306.92 L522.27,307.90 L523.40,308.09 L524.53,307.10 L525.65,305.96 L526.72,305.58 L527.79,307.79 L528.86,308.10 L529.93,308.43 L531.00,308.97 L532.07,309.56 L533.14,309.82 L534.50,312.88 L535.86,318.60 L536.97,319.43 L538.07,319.64 L539.18,316.41 L540.28,317.55 L541.41,316.17 L542.53,315.66 L543.65,317.23 L544.77,315.42 L545.90,315.32 L547.02,317.37 L548.14,315.54 L549.27,315.08 L550.39,315.45 L551.51,315.79 L552.53,315.73 L553.55,316.46 L554.57,316.29 L555.59,316.65 L556.62,317.16 L557.64,315.51 L558.66,316.46 L559.68,314.81 L560.70,315.79 L562.57,307.54 L563.68,309.15 L564.78,306.61 L565.89,307.45 L566.99,306.90 L568.10,307.16 L569.20,307.33 L570.31,308.52 L571.42,310.48 L572.52,308.34 L573.63,309.29 L574.73,310.05 L575.84,309.36 L576.95,307.94 L578.05,308.09 L579.16,308.16 L580.26,306.22 L581.37,306.97 L582.47,307.55 L583.58,307.55 L584.69,306.48 L585.54,301.92 L586.69,302.44 L587.83,305.33 L588.98,306.03 L590.13,308.59 L591.18,307.18 L592.22,305.79 L593.27,302.84 L594.31,300.06 L595.36,300.22 L596.40,296.38 L597.45,295.42 L598.81,303.68 L599.93,301.79 L601.04,301.60 L602.16,301.00 L603.28,303.02 L604.40,300.51 L605.52,299.22 L606.63,299.81 L607.74,301.16 L608.84,300.39 L609.95,300.33 L611.06,299.44 L612.16,299.70 L613.27,299.48 L614.37,298.45 L615.48,300.82 L616.59,300.59 L617.69,299.11 L618.74,300.89 L619.78,301.50 L620.83,302.28 L621.87,300.02 L622.92,301.00 L623.96,304.03 L625.01,303.32 L626.08,303.09 L627.15,303.45 L628.21,303.23 L629.28,302.89 L630.35,301.73 L631.42,301.70 L632.49,301.74 L633.54,302.74 L634.58,303.82 L635.63,303.94 L636.67,305.14 L637.72,304.33 L638.76,304.37 L639.81,305.61 L640.96,306.60 L642.10,308.16 L643.25,308.47 L644.40,308.07 L645.42,304.20 L646.54,305.13 L647.65,304.93 L648.77,304.89 L649.88,306.69 L651.00,305.88 L652.11,306.97 L653.23,308.11 L654.34,308.82 L655.46,308.94 L656.50,309.21 L657.55,308.80 L658.59,309.95 L659.64,309.33 L660.69,310.32 L661.73,311.25 L662.78,310.70 L664.02,312.17 L665.27,313.24 L666.52,315.44 L667.61,316.88 L668.70,315.85 L669.78,315.94 L670.87,314.59 L671.96,314.50 L673.05,316.36 L674.14,314.80 L675.23,315.22 L676.32,316.98 L677.41,316.32 L678.48,316.20 L679.56,317.04 L680.64,314.63 L681.72,314.87 L682.79,313.92 L683.87,313.99 L684.95,314.15 L686.03,313.71 L687.10,314.01 L688.18,315.23 L689.26,313.47 L690.34,313.51 L691.42,314.51 L692.51,313.51 L693.60,310.96 L694.69,312.70 L695.78,310.70 L696.89,312.18 L697.99,312.35 L699.10,310.08 L700.20,312.49 L701.31,313.17 L702.41,310.78 L703.52,313.25 L704.63,311.16 L705.73,311.89 L706.84,312.63 L707.88,311.37 L708.93,310.80 L709.97,311.78 L711.02,310.88 L712.06,313.09 L713.11,310.58 L714.15,311.19 L715.20,310.35 L716.24,312.07 L717.29,309.84 L718.33,309.05 L719.38,311.61 L720.42,310.58 L721.47,309.82 L722.59,310.53 L723.71,310.61 L724.84,313.38 L725.96,314.49 L727.08,314.39 L728.11,315.24 L729.15,314.15 L730.18,313.78 L731.21,314.99 L732.24,315.13 L733.27,315.11 L734.30,315.32 L735.33,315.17 L736.37,316.30 L737.40,315.04 L738.43,313.62 L739.46,315.45 L740.49,314.46 L741.52,316.38 L742.55,314.77 L743.59,315.44 L744.62,314.63 L745.65,314.89 L746.68,315.39 L747.71,315.49 L748.74,314.99 L749.77,314.18 L750.81,316.55 L751.84,316.72 L752.87,314.66 L753.90,314.12 L754.93,315.39 L755.96,315.62 L756.99,314.75 L758.03,316.43 L759.06,316.18 L760.09,315.44 L761.17,317.01 L762.24,316.40 L763.32,317.87 L764.40,318.74 L765.48,317.91 L766.55,319.13 L767.91,314.01 L769.28,311.75 L770.30,295.07 L771.49,295.07 L772.34,312.10 L773.70,312.10 L774.38,292.26 L775.63,292.91 L776.87,291.61 L778.12,292.26 L778.97,316.32 L780.05,317.53 L781.13,317.07 L782.20,319.13 L783.25,318.86 L784.29,319.86 L785.34,320.02 L786.39,320.64 L787.43,319.19 L788.48,319.50 L789.52,320.16 L790.57,319.57 L791.61,319.69 L792.66,318.26 L793.70,320.25 L794.75,317.58 L795.79,319.19 L796.84,319.13 L797.94,319.17 L799.05,319.93 L800.15,319.12 L801.26,320.53 L802.31,319.57 L803.36,320.46 L804.41,320.76 L805.47,320.06 L806.52,319.68 L807.57,321.18 L808.62,320.19 L809.67,319.52 L810.72,321.14 L811.78,321.95 L812.83,321.99 L813.88,320.52 L814.93,320.70 L815.98,319.87 L817.03,320.25 L818.09,322.24 L819.14,322.46 L820.19,322.30 L821.24,322.58 L822.29,321.00 L823.34,320.57 L824.40,321.76 L825.48,320.50 L826.56,322.54 L827.64,320.61 L828.72,322.35 L829.80,322.00 L830.88,321.04 L831.96,323.07 L833.04,323.05 L834.12,320.71 L835.20,322.42 L836.29,322.22 L837.37,321.51 L838.45,321.21 L839.53,323.32 L840.61,322.28 L841.69,321.96 L842.77,321.76 L843.79,322.24 L844.81,323.54 L845.83,322.78 L846.85,322.04 L847.87,324.25 L848.89,324.20 L849.92,325.97 L850.94,325.91 L851.96,325.63 L853.32,293.31 L854.00,293.31 L854.51,326.68 L855.70,322.64 L855.70,340.20 L242.90,340.20 Z" fill="#7eb26d" fill-opacity="0.1"/>
<path d="M242.90,270.84 L243.92,271.23 L244.94,269.96 L246.08,270.41 L247.21,271.54 L248.34,271.72 L249.48,270.51 L250.61,269.56 L251.75,269.08 L252.98,270.50 L254.21,270.71 L255.45,268.15 L256.68,269.26 L257.76,272.01 L258.84,274.08 L259.91,275.23 L261.05,272.20 L262.18,272.40 L263.32,270.84 L264.55,268.94 L265.78,269.24 L267.02,267.90 L268.25,267.50 L269.38,269.43 L270.52,268.71 L271.65,269.96 L272.76,268.80 L273.86,269.96 L274.37,256.61 L275.90,256.61 L276.93,269.96 L278.46,274.28 L279.99,278.74 L281.07,278.56 L282.14,279.37 L283.22,280.50 L284.24,282.58 L285.26,281.08 L286.28,282.32 L287.30,283.93 L288.32,284.01 L289.56,285.05 L290.79,281.97 L292.02,282.78 L293.26,282.25 L294.28,281.38 L295.30,280.70 L296.32,281.05 L297.34,280.22 L298.36,281.37 L299.52,281.53 L300.68,280.07 L301.83,281.02 L302.99,279.29 L304.15,280.50 L305.34,280.50 L306.70,266.62 L307.89,259.42 L309.76,257.67 L310.95,266.45 L312.14,266.57 L313.33,269.08 L314.47,270.09 L315.60,269.71 L316.74,269.19 L317.87,266.56 L319.00,267.97 L320.14,267.50 L321.37,266.66 L322.60,267.25 L323.84,266.16 L325.07,265.75 L326.11,266.52 L327.16,267.05 L328.20,266.73 L329.24,267.15 L330.28,266.55 L331.32,267.67 L332.37,267.31 L333.41,269.08 L334.56,266.97 L335.72,265.56 L336.88,265.59 L338.04,266.21 L339.19,264.17 L340.55,265.48 L341.91,269.08 L342.99,268.73 L344.07,270.03 L345.15,272.42 L346.26,272.57 L347.38,272.48 L348.49,274.44 L349.61,272.85 L350.72,274.04 L351.84,275.32 L352.95,276.39 L354.07,274.27 L355.18,275.75 L356.28,273.84 L357.38,276.31 L358.47,273.69 L359.57,274.55 L360.67,275.01 L361.76,274.18 L362.86,272.31 L363.96,271.61 L365.05,272.42 L366.09,274.19 L367.14,272.71 L368.18,274.84 L369.22,273.04 L370.26,274.60 L371.30,273.19 L372.35,273.20 L373.39,275.05 L374.52,274.51 L375.66,272.42 L376.79,273.47 L378.07,280.66 L379.34,286.64 L380.62,294.65 L381.89,299.99 L382.74,289.98 L384.02,293.00 L385.30,296.65 L386.53,297.74 L387.76,296.82 L389.00,295.76 L390.23,295.07 L391.34,294.17 L392.44,295.05 L393.55,294.85 L394.65,291.68 L395.76,292.88 L396.87,291.73 L398.57,284.18 L400.61,287.52 L401.76,284.80 L402.91,283.72 L404.05,284.09 L405.20,282.43 L406.34,287.29 L407.47,291.85 L408.60,296.65 L409.63,288.40 L410.93,287.07 L412.23,286.34 L413.54,285.76 L415.24,296.65 L416.30,298.13 L417.37,299.61 L418.43,300.26 L419.49,303.32 L420.68,292.85 L421.87,282.43 L423.92,289.98 L425.06,290.67 L426.20,290.24 L427.34,292.24 L428.49,292.51 L429.63,290.85 L430.77,292.77 L431.91,293.31 L433.19,288.51 L434.46,284.01 L435.54,288.48 L436.62,290.13 L437.70,292.79 L438.84,294.29 L439.99,297.82 L441.14,297.69 L442.29,299.81 L443.99,289.98 L445.35,292.11 L446.71,295.07 L447.87,296.71 L449.03,295.16 L450.18,295.91 L451.34,295.49 L452.50,296.30 L453.69,297.06 L454.88,296.23 L456.07,296.43 L457.26,298.98 L458.45,299.15 L459.64,298.06 L460.71,297.37 L461.78,296.34 L462.85,298.47 L463.92,297.69 L464.99,297.14 L466.06,297.87 L467.13,297.18 L467.81,293.67 L469.68,305.61 L471.55,313.86 L472.63,314.29 L473.71,314.45 L474.78,314.27 L475.86,313.56 L476.94,314.49 L478.02,313.86 L479.06,314.67 L480.11,313.85 L481.15,316.63 L482.20,315.35 L483.24,315.25 L484.29,317.02 L485.33,316.85 L486.48,317.59 L487.63,315.62 L488.78,317.28 L489.93,317.31 L491.07,316.39 L492.22,315.43 L493.37,317.18 L494.52,315.79 L495.57,315.90 L496.63,315.40 L497.68,313.37 L498.74,314.16 L499.79,313.51 L500.98,311.65 L502.17,313.08 L503.37,311.81 L504.56,310.08 L505.75,309.82 L506.84,308.60 L507.92,309.98 L509.01,310.69 L510.10,311.02 L511.19,309.73 L512.28,310.80 L513.37,308.85 L514.46,308.75 L515.55,310.82 L516.64,309.82 L517.76,310.04 L518.89,307.88 L520.02,307.92 L521.14,306.92 L522.27,307.90 L523.40,308.09 L524.53,307.10 L525.65,305.96 L526.72,305.58 L527.79,307.79 L528.86,308.10 L529.93,308.43 L531.00,308.97 L532.07,309.56 L533.14,309.82 L534.50,312.88 L535.86,318.60 L536.97,319.43 L538.07,319.64 L539.18,316.41 L540.28,317.55 L541.41,316.17 L542.53,315.66 L543.65,317.23 L544.77,315.42 L545.90,315.32 L547.02,317.37 L548.14,315.54 L549.27,315.08 L550.39,315.45 L551.51,315.79 L552.53,315.73 L553.55,316.46 L554.57,316.29 L555.59,316.65 L556.62,317.16 L557.64,315.51 L558.66,316.46 L559.68,314.81 L560.70,315.79 L562.57,307.54 L563.68,309.15 L564.78,306.61 L565.89,307.45 L566.99,306.90 L568.10,307.16 L569.20,307.33 L570.31,308.52 L571.42,310.48 L572.52,308.34 L573.63,309.29 L574.73,310.05 L575.84,309.36 L576.95,307.94 L578.05,308.09 L579.16,308.16 L580.26,306.22 L581.37,306.97 L582.47,307.55 L583.58,307.55 L584.69,306.48 L585.54,301.92 L586.69,302.44 L587.83,305.33 L588.98,306.03 L590.13,308.59 L591.18,307.18 L592.22,305.79 L593.27,302.84 L594.31,300.06 L595.36,300.22 L596.40,296.38 L597.45,295.42 L598.81,303.68 L599.93,301.79 L601.04,301.60 L602.16,301.00 L603.28,303.02 L604.40,300.51 L605.52,299.22 L606.63,299.81 L607.74,301.16 L608.84,300.39 L609.95,300.33 L611.06,299.44 L612.16,299.70 L613.27,299.48 L614.37,298.45 L615.48,300.82 L616.59,300.59 L617.69,299.11 L618.74,300.89 L619.78,301.50 L620.83,302.28 L621.87,300.02 L622.92,301.00 L623.96,304.03 L625.01,303.32 L626.08,303.09 L627.15,303.45 L628.21,303.23 L629.28,302.89 L630.35,301.73 L631.42,301.70 L632.49,301.74 L633.54,302.74 L634.58,303.82 L635.63,303.94 L636.67,305.14 L637.72,304.33 L638.76,304.37 L639.81,305.61 L640.96,306.60 L642.10,308.16 L643.25,308.47 L644.40,308.07 L645.42,304.20 L646.54,305.13 L647.65,304.93 L648.77,304.89 L649.88,306.69 L651.00,305.88 L652.11,306.97 L653.23,308.11 L654.34,308.82 L655.46,308.94 L656.50,309.21 L657.55,308.80 L658.59,309.95 L659.64,309.33 L660.69,310.32 L661.73,311.25 L662.78,310.70 L664.02,312.17 L665.27,313.24 L666.52,315.44 L667.61,316.88 L668.70,315.85 L669.78,315.94 L670.87,314.59 L671.96,314.50 L673.05,316.36 L674.14,314.80 L675.23,315.22 L676.32,316.98 L677.41,316.32 L678.48,316.20 L679.56,317.04 L680.64,314.63 L681.72,314.87 L682.79,313.92 L683.87,313.99 L684.95,314.15 L686.03,313.71 L687.10,314.01 L688.18,315.23 L689.26,313.47 L690.34,313.51 L691.42,314.51 L692.51,313.51 L693.60,310.96 L694.69,312.70 L695.78,310.70 L696.89,312.18 L697.99,312.35 L699.10,310.08 L700.20,312.49 L701.31,313.17 L702.41,310.78 L703.52,313.25 L704.63,311.16 L705.73,311.89 L706.84,312.63 L707.88,311.37 L708.93,310.80 L709.97,311.78 L711.02,310.88 L712.06,313.09 L713.11,310.58 L714.15,311.19 L715.20,310.35 L716.24,312.07 L717.29,309.84 L718.33,309.05 L719.38,311.61 L720.42,310.58 L721.47,309.82 L722.59,310.53 L723.71,310.61 L724.84,313.38 L725.96,314.49 L727.08,314.39 L728.11,315.24 L729.15,314.15 L730.18,313.78 L731.21,314.99 L732.24,315.13 L733.27,315.11 L734.30,315.32 L735.33,315.17 L736.37,316.30 L737.40,315.04 L738.43,313.62 L739.46,315.45 L740.49,314.46 L741.52,316.38 L742.55,314.77 L743.59,315.44 L744.62,314.63 L745.65,314.89 L746.68,315.39 L747.71,315.49 L748.74,314.99 L749.77,314.18 L750.81,316.55 L751.84,316.72 L752.87,314.66 L753.90,314.12 L754.93,315.39 L755.96,315.62 L756.99,314.75 L758.03,316.43 L759.06,316.18 L760.09,315.44 L761.17,317.01 L762.24,316.40 L763.32,317.87 L764.40,318.74 L765.48,317.91 L766.55,319.13 L767.91,314.01 L769.28,311.75 L770.30,295.07 L771.49,295.07 L772.34,312.10 L773.70,312.10 L774.38,292.26 L775.63,292.91 L776.87,291.61 L778.12,292.26 L778.97,316.32 L780.05,317.53 L781.13,317.07 L782.20,319.13 L783.25,318.86 L784.29,319.86 L785.34,320.02 L786.39,320.64 L787.43,319.19 L788.48,319.50 L789.52,320.16 L790.57,319.57 L791.61,319.69 L792.66,318.26 L793.70,320.25 L794.75,317.58 L795.79,319.19 L796.84,319.13 L797.94,319.17 L799.05,319.93 L800.15,319.12 L801.26,320.53 L802.31,319.57 L803.36,320.46 L804.41,320.76 L805.47,320.06 L806.52,319.68 L807.57,321.18 L808.62,320.19 L809.67,319.52 L810.72,321.14 L811.78,321.95 L812.83,321.99 L813.88,320.52 L814.93,320.70 L815.98,319.87 L817.03,320.25 L818.09,322.24 L819.14,322.46 L820.19,322.30 L821.24,322.58 L822.29,321.00 L823.34,320.57 L824.40,321.76 L825.48,320.50 L826.56,322.54 L827.64,320.61 L828.72,322.35 L829.80,322.00 L830.88,321.04 L831.96,323.07 L833.04,323.05 L834.12,320.71 L835.20,322.42 L836.29,322.22 L837.37,321.51 L838.45,321.21 L839.53,323.32 L840.61,322.28 L841.69,321.96 L842.77,321.76 L843.79,322.24 L844.81,323.54 L845.83,322.78 L846.85,322.04 L847.87,324.25 L848.89,324.20 L849.92,325.97 L850.94,325.91 L851.96,325.63 L853.32,293.31 L854.00,293.31 L854.51,326.68 L855.70,322.64" fill="none" stroke="#98c28a" stroke-width="1.0" stroke-linejoin="round"/>
<text x="240.00" y="342.80" font-size="7.3" fill="#c4c5c7" stroke="#c4c5c7" stroke-width="0.12" text-anchor="end" textLength="9.50" lengthAdjust="spacingAndGlyphs" >0%</text>
<text x="240.00" y="325.24" font-size="7.3" fill="#c4c5c7" stroke="#c4c5c7" stroke-width="0.12" text-anchor="end" textLength="13.15" lengthAdjust="spacingAndGlyphs" >10%</text>
<text x="240.00" y="307.68" font-size="7.3" fill="#c4c5c7" stroke="#c4c5c7" stroke-width="0.12" text-anchor="end" textLength="13.15" lengthAdjust="spacingAndGlyphs" >20%</text>
<text x="240.00" y="290.12" font-size="7.3" fill="#c4c5c7" stroke="#c4c5c7" stroke-width="0.12" text-anchor="end" textLength="13.15" lengthAdjust="spacingAndGlyphs" >30%</text>
<text x="240.00" y="272.56" font-size="7.3" fill="#c4c5c7" stroke="#c4c5c7" stroke-width="0.12" text-anchor="end" textLength="13.15" lengthAdjust="spacingAndGlyphs" >40%</text>
<text x="240.00" y="255.00" font-size="7.3" fill="#c4c5c7" stroke="#c4c5c7" stroke-width="0.12" text-anchor="end" textLength="13.15" lengthAdjust="spacingAndGlyphs" >50%</text>
<text x="270.46" y="351.60" font-size="7.5" fill="#c4c5c7" stroke="#c4c5c7" stroke-width="0.12" text-anchor="middle" textLength="18.21" lengthAdjust="spacingAndGlyphs" >13:00</text>
<text x="321.50" y="351.60" font-size="7.5" fill="#c4c5c7" stroke="#c4c5c7" stroke-width="0.12" text-anchor="middle" textLength="18.21" lengthAdjust="spacingAndGlyphs" >13:30</text>
<text x="372.54" y="351.60" font-size="7.5" fill="#c4c5c7" stroke="#c4c5c7" stroke-width="0.12" text-anchor="middle" textLength="18.21" lengthAdjust="spacingAndGlyphs" >14:00</text>
<text x="423.58" y="351.60" font-size="7.5" fill="#c4c5c7" stroke="#c4c5c7" stroke-width="0.12" text-anchor="middle" textLength="18.21" lengthAdjust="spacingAndGlyphs" >14:30</text>
<text x="474.61" y="351.60" font-size="7.5" fill="#c4c5c7" stroke="#c4c5c7" stroke-width="0.12" text-anchor="middle" textLength="18.21" lengthAdjust="spacingAndGlyphs" >15:00</text>
<text x="525.65" y="351.60" font-size="7.5" fill="#c4c5c7" stroke="#c4c5c7" stroke-width="0.12" text-anchor="middle" textLength="18.21" lengthAdjust="spacingAndGlyphs" >15:30</text>
<text x="576.69" y="351.60" font-size="7.5" fill="#c4c5c7" stroke="#c4c5c7" stroke-width="0.12" text-anchor="middle" textLength="18.21" lengthAdjust="spacingAndGlyphs" >16:00</text>
<text x="627.73" y="351.60" font-size="7.5" fill="#c4c5c7" stroke="#c4c5c7" stroke-width="0.12" text-anchor="middle" textLength="18.21" lengthAdjust="spacingAndGlyphs" >16:30</text>
<text x="678.77" y="351.60" font-size="7.5" fill="#c4c5c7" stroke="#c4c5c7" stroke-width="0.12" text-anchor="middle" textLength="18.21" lengthAdjust="spacingAndGlyphs" >17:00</text>
<text x="729.81" y="351.60" font-size="7.5" fill="#c4c5c7" stroke="#c4c5c7" stroke-width="0.12" text-anchor="middle" textLength="18.21" lengthAdjust="spacingAndGlyphs" >17:30</text>
<text x="780.84" y="351.60" font-size="7.5" fill="#c4c5c7" stroke="#c4c5c7" stroke-width="0.12" text-anchor="middle" textLength="18.21" lengthAdjust="spacingAndGlyphs" >18:00</text>
<text x="831.88" y="351.60" font-size="7.5" fill="#c4c5c7" stroke="#c4c5c7" stroke-width="0.12" text-anchor="middle" textLength="18.21" lengthAdjust="spacingAndGlyphs" >18:30</text>
<text x="862.60" y="342.80" font-size="7.3" fill="#c4c5c7" stroke="#c4c5c7" stroke-width="0.12" textLength="3.86" lengthAdjust="spacingAndGlyphs" >0</text>
<line x1="855.70" y1="340.20" x2="858.90" y2="340.20" stroke="#424245" stroke-width="1"/>
<text x="862.60" y="313.53" font-size="7.3" fill="#c4c5c7" stroke="#c4c5c7" stroke-width="0.12" textLength="11.57" lengthAdjust="spacingAndGlyphs" >100</text>
<line x1="855.70" y1="310.93" x2="858.90" y2="310.93" stroke="#424245" stroke-width="1"/>
<text x="862.60" y="284.27" font-size="7.3" fill="#c4c5c7" stroke="#c4c5c7" stroke-width="0.12" textLength="11.57" lengthAdjust="spacingAndGlyphs" >200</text>
<line x1="855.70" y1="281.67" x2="858.90" y2="281.67" stroke="#424245" stroke-width="1"/>
<text x="862.60" y="255.00" font-size="7.3" fill="#c4c5c7" stroke="#c4c5c7" stroke-width="0.12" textLength="11.57" lengthAdjust="spacingAndGlyphs" >300</text>
<line x1="855.70" y1="252.40" x2="858.90" y2="252.40" stroke="#424245" stroke-width="1"/>
<text x="0" y="0" font-size="7.4" fill="#c4c5c7" text-anchor="middle" textLength="58.70" lengthAdjust="spacingAndGlyphs" stroke="#c4c5c7" stroke-width="0.2" transform="translate(218.80,301.00) rotate(-90)" dy="2.66">CPU Utilization [%]</text>
<text x="0" y="0" font-size="7.4" fill="#c4c5c7" text-anchor="middle" textLength="40.70" lengthAdjust="spacingAndGlyphs" stroke="#c4c5c7" stroke-width="0.2" transform="translate(882.80,300.40) rotate(90)" dy="2.66">Participants</text>
<rect x="216.50" y="369.60" width="668.00" height="16.40" fill="#27272a" />
<text x="789.00" y="366.70" font-size="7.9" fill="#33b5e5" stroke="#33b5e5" stroke-width="0.3" text-anchor="end" textLength="12.73" lengthAdjust="spacingAndGlyphs" >min</text>
<text x="818.60" y="366.70" font-size="7.9" fill="#33b5e5" stroke="#33b5e5" stroke-width="0.3" text-anchor="end" textLength="14.92" lengthAdjust="spacingAndGlyphs" >max</text>
<text x="847.80" y="366.70" font-size="7.9" fill="#33b5e5" stroke="#33b5e5" stroke-width="0.3" text-anchor="end" textLength="12.74" lengthAdjust="spacingAndGlyphs" >avg</text>
<text x="878.80" y="366.70" font-size="7.9" fill="#33b5e5" stroke="#33b5e5" stroke-width="0.3" text-anchor="end" textLength="24.59" lengthAdjust="spacingAndGlyphs" >current</text>
<text x="789.00" y="380.50" font-size="7.7" fill="#d8d9da" text-anchor="end" textLength="11.13" lengthAdjust="spacingAndGlyphs" >7%</text>
<text x="818.60" y="380.50" font-size="7.7" fill="#d8d9da" text-anchor="end" textLength="15.41" lengthAdjust="spacingAndGlyphs" >48%</text>
<text x="847.80" y="380.50" font-size="7.7" fill="#d8d9da" text-anchor="end" textLength="15.41" lengthAdjust="spacingAndGlyphs" >22%</text>
<text x="878.80" y="380.50" font-size="7.7" fill="#d8d9da" text-anchor="end" textLength="15.41" lengthAdjust="spacingAndGlyphs" >10%</text>
<text x="789.00" y="397.40" font-size="7.7" fill="#d8d9da" text-anchor="end" textLength="4.28" lengthAdjust="spacingAndGlyphs" >0</text>
<text x="818.60" y="397.40" font-size="7.7" fill="#d8d9da" text-anchor="end" textLength="12.85" lengthAdjust="spacingAndGlyphs" >285</text>
<text x="847.80" y="397.40" font-size="7.7" fill="#d8d9da" text-anchor="end" textLength="12.85" lengthAdjust="spacingAndGlyphs" >131</text>
<text x="878.80" y="397.40" font-size="7.7" fill="#d8d9da" text-anchor="end" textLength="4.28" lengthAdjust="spacingAndGlyphs" >0</text>
<rect x="222.60" y="378.70" width="8" height="2.2" rx="1" fill="#7eb26d"/>
<text x="234.60" y="382.40" font-size="7.4" fill="#d8d9da" textLength="47.50" lengthAdjust="spacingAndGlyphs" >CPU Utilization</text>
<rect x="222.60" y="394.70" width="8" height="2.2" rx="1" fill="#5794f2"/>
<text x="234.60" y="398.40" font-size="7.4" fill="#d8d9da" textLength="39.80" lengthAdjust="spacingAndGlyphs" >Participants</text>
<text x="277.90" y="398.40" font-size="7.4" fill="#8e8f91" textLength="25.40" lengthAdjust="spacingAndGlyphs" >(right-y)</text>
<text x="1038.30" y="236.00" font-size="9.0" fill="#d8d9da" stroke="#d8d9da" stroke-width="0.32" text-anchor="middle" textLength="71.50" lengthAdjust="spacingAndGlyphs" >Voice Participants</text>
<line x1="929.20" y1="356.70" x2="1174.20" y2="356.70" stroke="#424245" stroke-width="1"/>
<line x1="929.20" y1="335.82" x2="1174.20" y2="335.82" stroke="#424245" stroke-width="1"/>
<line x1="929.20" y1="314.94" x2="1174.20" y2="314.94" stroke="#424245" stroke-width="1"/>
<line x1="929.20" y1="294.06" x2="1174.20" y2="294.06" stroke="#424245" stroke-width="1"/>
<line x1="929.20" y1="273.18" x2="1174.20" y2="273.18" stroke="#424245" stroke-width="1"/>
<line x1="929.20" y1="252.30" x2="1174.20" y2="252.30" stroke="#424245" stroke-width="1"/>
<line x1="940.22" y1="252.30" x2="940.22" y2="356.70" stroke="#424245" stroke-width="1"/>
<line x1="981.03" y1="252.30" x2="981.03" y2="356.70" stroke="#424245" stroke-width="1"/>
<line x1="1021.84" y1="252.30" x2="1021.84" y2="356.70" stroke="#424245" stroke-width="1"/>
<line x1="1062.65" y1="252.30" x2="1062.65" y2="356.70" stroke="#424245" stroke-width="1"/>
<line x1="1103.46" y1="252.30" x2="1103.46" y2="356.70" stroke="#424245" stroke-width="1"/>
<line x1="1144.27" y1="252.30" x2="1144.27" y2="356.70" stroke="#424245" stroke-width="1"/>
<path d="M929.20,327.47 L936.27,327.47 L938.38,322.87 L946.20,323.29 L946.88,319.12 L947.56,323.29 L955.18,323.29 L955.86,319.12 L956.54,323.29 L965.39,323.29 L966.07,327.47 L966.75,323.29 L969.81,323.29 L970.35,319.12 L971.17,323.29 L973.89,331.64 L981.71,331.64 L983.41,323.29 L984.43,325.38 L985.93,327.47 L989.46,327.47 L990.89,331.64 L1019.32,331.64 L1022.86,343.34 L1024.22,344.17 L1024.97,340.00 L1025.92,348.35 L1032.04,348.35 L1034.22,344.17 L1041.29,344.17 L1042.99,348.35 L1050.68,348.35 L1052.79,327.47 L1054.90,312.85 L1057.75,289.88 L1066.19,289.88 L1067.28,294.06 L1068.30,289.88 L1073.53,289.88 L1074.28,285.71 L1075.23,289.88 L1078.09,289.88 L1079.93,264.83 L1082.38,264.83 L1084.14,269.00 L1085.84,257.31 L1087.95,261.07 L1092.17,261.07 L1093.94,257.31 L1095.98,261.49 L1097.82,310.35 L1100.60,302.41 L1104.14,301.58 L1106.86,285.71 L1108.63,265.66 L1111.15,272.76 L1112.98,269.84 L1115.36,272.76 L1119.58,272.76 L1121.69,294.06 L1125.23,301.58 L1129.38,309.51 L1134.34,310.76 L1137.13,335.40 L1143.46,335.40 L1145.16,331.23 L1159.58,331.23 L1161.00,327.05 L1162.30,331.23 L1166.65,331.23 L1168.76,337.07 L1169.03,356.70 L1174.20,356.70 L1174.20,356.70 L929.20,356.70 Z" fill="#ff9830" fill-opacity="0.12"/>
<path d="M929.20,327.47 L936.27,327.47 L938.38,322.87 L946.20,323.29 L946.88,319.12 L947.56,323.29 L955.18,323.29 L955.86,319.12 L956.54,323.29 L965.39,323.29 L966.07,327.47 L966.75,323.29 L969.81,323.29 L970.35,319.12 L971.17,323.29 L973.89,331.64 L981.71,331.64 L983.41,323.29 L984.43,325.38 L985.93,327.47 L989.46,327.47 L990.89,331.64 L1019.32,331.64 L1022.86,343.34 L1024.22,344.17 L1024.97,340.00 L1025.92,348.35 L1032.04,348.35 L1034.22,344.17 L1041.29,344.17 L1042.99,348.35 L1050.68,348.35 L1052.79,327.47 L1054.90,312.85 L1057.75,289.88 L1066.19,289.88 L1067.28,294.06 L1068.30,289.88 L1073.53,289.88 L1074.28,285.71 L1075.23,289.88 L1078.09,289.88 L1079.93,264.83 L1082.38,264.83 L1084.14,269.00 L1085.84,257.31 L1087.95,261.07 L1092.17,261.07 L1093.94,257.31 L1095.98,261.49 L1097.82,310.35 L1100.60,302.41 L1104.14,301.58 L1106.86,285.71 L1108.63,265.66 L1111.15,272.76 L1112.98,269.84 L1115.36,272.76 L1119.58,272.76 L1121.69,294.06 L1125.23,301.58 L1129.38,309.51 L1134.34,310.76 L1137.13,335.40 L1143.46,335.40 L1145.16,331.23 L1159.58,331.23 L1161.00,327.05 L1162.30,331.23 L1166.65,331.23 L1168.76,337.07 L1169.03,356.70 L1174.20,356.70" fill="none" stroke="#eb9640" stroke-width="1.0" stroke-linejoin="round"/>
<text x="925.50" y="359.30" font-size="7.3" fill="#c4c5c7" stroke="#c4c5c7" stroke-width="0.12" text-anchor="end" textLength="3.65" lengthAdjust="spacingAndGlyphs" >0</text>
<text x="925.50" y="338.42" font-size="7.3" fill="#c4c5c7" stroke="#c4c5c7" stroke-width="0.12" text-anchor="end" textLength="3.65" lengthAdjust="spacingAndGlyphs" >5</text>
<text x="925.50" y="317.54" font-size="7.3" fill="#c4c5c7" stroke="#c4c5c7" stroke-width="0.12" text-anchor="end" textLength="7.31" lengthAdjust="spacingAndGlyphs" >10</text>
<text x="925.50" y="296.66" font-size="7.3" fill="#c4c5c7" stroke="#c4c5c7" stroke-width="0.12" text-anchor="end" textLength="7.31" lengthAdjust="spacingAndGlyphs" >15</text>
<text x="925.50" y="275.78" font-size="7.3" fill="#c4c5c7" stroke="#c4c5c7" stroke-width="0.12" text-anchor="end" textLength="7.31" lengthAdjust="spacingAndGlyphs" >20</text>
<text x="925.50" y="254.90" font-size="7.3" fill="#c4c5c7" stroke="#c4c5c7" stroke-width="0.12" text-anchor="end" textLength="7.31" lengthAdjust="spacingAndGlyphs" >25</text>
<text x="940.22" y="368.50" font-size="7.5" fill="#c4c5c7" stroke="#c4c5c7" stroke-width="0.12" text-anchor="middle" textLength="18.21" lengthAdjust="spacingAndGlyphs" >13:00</text>
<text x="981.03" y="368.50" font-size="7.5" fill="#c4c5c7" stroke="#c4c5c7" stroke-width="0.12" text-anchor="middle" textLength="18.21" lengthAdjust="spacingAndGlyphs" >14:00</text>
<text x="1021.84" y="368.50" font-size="7.5" fill="#c4c5c7" stroke="#c4c5c7" stroke-width="0.12" text-anchor="middle" textLength="18.21" lengthAdjust="spacingAndGlyphs" >15:00</text>
<text x="1062.65" y="368.50" font-size="7.5" fill="#c4c5c7" stroke="#c4c5c7" stroke-width="0.12" text-anchor="middle" textLength="18.21" lengthAdjust="spacingAndGlyphs" >16:00</text>
<text x="1103.46" y="368.50" font-size="7.5" fill="#c4c5c7" stroke="#c4c5c7" stroke-width="0.12" text-anchor="middle" textLength="18.21" lengthAdjust="spacingAndGlyphs" >17:00</text>
<text x="1144.27" y="368.50" font-size="7.5" fill="#c4c5c7" stroke="#c4c5c7" stroke-width="0.12" text-anchor="middle" textLength="18.21" lengthAdjust="spacingAndGlyphs" >18:00</text>
<text x="0" y="0" font-size="7.4" fill="#c4c5c7" text-anchor="middle" textLength="39.80" lengthAdjust="spacingAndGlyphs" stroke="#c4c5c7" stroke-width="0.2" transform="translate(909.80,308.60) rotate(-90)" dy="2.66">Participants</text>
<rect x="907.60" y="387.00" width="273.00" height="16.50" fill="#27272a" />
<text x="1079.90" y="383.30" font-size="7.9" fill="#33b5e5" stroke="#33b5e5" stroke-width="0.3" text-anchor="end" textLength="12.73" lengthAdjust="spacingAndGlyphs" >min</text>
<text x="1113.50" y="383.30" font-size="7.9" fill="#33b5e5" stroke="#33b5e5" stroke-width="0.3" text-anchor="end" textLength="14.92" lengthAdjust="spacingAndGlyphs" >max</text>
<text x="1143.70" y="383.30" font-size="7.9" fill="#33b5e5" stroke="#33b5e5" stroke-width="0.3" text-anchor="end" textLength="12.74" lengthAdjust="spacingAndGlyphs" >avg</text>
<text x="1174.70" y="383.30" font-size="7.9" fill="#33b5e5" stroke="#33b5e5" stroke-width="0.3" text-anchor="end" textLength="24.59" lengthAdjust="spacingAndGlyphs" >current</text>
<text x="1079.90" y="397.70" font-size="7.7" fill="#d8d9da" text-anchor="end" textLength="4.28" lengthAdjust="spacingAndGlyphs" >0</text>
<text x="1113.50" y="397.70" font-size="7.7" fill="#d8d9da" text-anchor="end" textLength="19.27" lengthAdjust="spacingAndGlyphs" >24.00</text>
<text x="1143.70" y="397.70" font-size="7.7" fill="#d8d9da" text-anchor="end" textLength="14.99" lengthAdjust="spacingAndGlyphs" >9.44</text>
<text x="1174.70" y="397.70" font-size="7.7" fill="#d8d9da" text-anchor="end" textLength="4.28" lengthAdjust="spacingAndGlyphs" >0</text>
<rect x="913.80" y="394.10" width="8" height="2.2" rx="1" fill="#ff9830"/>
<text x="926.20" y="397.70" font-size="7.4" fill="#d8d9da" textLength="59.40" lengthAdjust="spacingAndGlyphs" >Voice participants</text>
<text x="544.60" y="426.60" font-size="9.0" fill="#d8d9da" stroke="#d8d9da" stroke-width="0.32" text-anchor="middle" textLength="104.30" lengthAdjust="spacingAndGlyphs" >Bandwidth vs. Participants</text>
<line x1="261.30" y1="538.90" x2="856.00" y2="538.90" stroke="#424245" stroke-width="1"/>
<line x1="261.30" y1="514.88" x2="856.00" y2="514.88" stroke="#424245" stroke-width="1"/>
<line x1="261.30" y1="490.85" x2="856.00" y2="490.85" stroke="#424245" stroke-width="1"/>
<line x1="261.30" y1="466.82" x2="856.00" y2="466.82" stroke="#424245" stroke-width="1"/>
<line x1="261.30" y1="442.80" x2="856.00" y2="442.80" stroke="#424245" stroke-width="1"/>
<line x1="288.05" y1="442.80" x2="288.05" y2="538.90" stroke="#424245" stroke-width="1"/>
<line x1="337.58" y1="442.80" x2="337.58" y2="538.90" stroke="#424245" stroke-width="1"/>
<line x1="387.11" y1="442.80" x2="387.11" y2="538.90" stroke="#424245" stroke-width="1"/>
<line x1="436.64" y1="442.80" x2="436.64" y2="538.90" stroke="#424245" stroke-width="1"/>
<line x1="486.17" y1="442.80" x2="486.17" y2="538.90" stroke="#424245" stroke-width="1"/>
<line x1="535.70" y1="442.80" x2="535.70" y2="538.90" stroke="#424245" stroke-width="1"/>
<line x1="585.23" y1="442.80" x2="585.23" y2="538.90" stroke="#424245" stroke-width="1"/>
<line x1="634.76" y1="442.80" x2="634.76" y2="538.90" stroke="#424245" stroke-width="1"/>
<line x1="684.29" y1="442.80" x2="684.29" y2="538.90" stroke="#424245" stroke-width="1"/>
<line x1="733.82" y1="442.80" x2="733.82" y2="538.90" stroke="#424245" stroke-width="1"/>
<line x1="783.35" y1="442.80" x2="783.35" y2="538.90" stroke="#424245" stroke-width="1"/>
<line x1="832.89" y1="442.80" x2="832.89" y2="538.90" stroke="#424245" stroke-width="1"/>
<path d="M261.30,453.69 L264.93,454.33 L268.56,454.95 L272.20,455.29 L275.17,455.50 L278.14,455.35 L281.11,455.29 L282.93,453.37 L285.49,452.75 L288.05,451.77 L291.24,451.78 L294.43,451.39 L297.62,451.13 L300.10,452.09 L303.90,451.13 L306.79,450.83 L309.68,450.81 L312.56,450.75 L315.45,450.81 L317.93,448.89 L320.90,448.82 L323.87,448.44 L326.85,448.25 L329.53,448.36 L332.21,448.41 L334.89,448.45 L337.58,448.25 L340.29,448.58 L342.99,448.41 L345.70,448.65 L348.41,448.86 L351.12,449.21 L354.25,449.37 L357.39,449.85 L361.19,451.13 L363.17,453.69 L366.06,454.17 L368.95,454.33 L371.48,454.96 L374.01,455.33 L376.54,455.93 L379.10,455.89 L381.66,455.91 L384.22,455.98 L386.78,456.25 L389.58,456.63 L392.39,456.57 L393.05,458.18 L393.71,478.68 L394.70,484.12 L395.86,499.82 L399.49,495.33 L403.29,493.41 L405.85,490.16 L408.41,487.01 L410.97,485.32 L413.52,483.80 L416.06,482.95 L418.59,482.26 L421.12,481.24 L423.68,481.11 L426.24,481.17 L428.80,480.60 L431.36,480.50 L433.91,480.52 L436.47,480.41 L439.15,480.45 L441.83,480.08 L444.51,480.19 L447.19,479.97 L449.87,479.93 L452.54,480.04 L455.22,480.03 L457.90,479.87 L460.58,479.86 L463.14,479.99 L465.70,480.22 L468.26,480.23 L470.82,480.07 L473.37,480.55 L475.93,480.41 L480.72,482.65 L481.55,496.30 L486.00,496.30 L486.67,506.03 L489.42,506.12 L492.17,505.67 L494.92,505.59 L495.58,509.17 L498.33,509.29 L501.08,509.16 L503.84,509.19 L506.59,509.25 L509.34,508.92 L512.09,509.17 L516.55,505.59 L519.12,505.55 L521.70,505.25 L524.28,505.16 L526.85,504.75 L529.43,504.62 L532.27,505.09 L535.12,505.40 L537.97,505.55 L540.82,506.03 L543.55,506.31 L546.29,506.37 L549.03,506.38 L551.76,506.97 L554.50,507.17 L557.23,507.27 L559.97,507.32 L562.50,507.18 L565.03,507.26 L567.57,507.45 L570.10,507.40 L572.63,507.48 L575.16,507.32 L578.13,506.97 L581.10,506.82 L584.08,506.23 L586.97,506.40 L589.85,506.57 L592.74,506.81 L595.63,507.32 L598.60,505.34 L601.58,503.36 L604.55,501.74 L607.52,501.38 L610.49,500.63 L613.46,499.92 L616.22,499.68 L618.97,499.77 L621.72,499.96 L624.47,499.69 L627.22,499.85 L629.97,499.92 L632.86,499.52 L635.75,499.56 L638.64,499.38 L641.53,498.99 L645.33,499.92 L645.82,504.18 L649.37,504.91 L652.92,505.59 L655.73,505.77 L658.54,505.65 L661.34,505.35 L664.15,505.67 L666.96,505.59 L668.11,507.32 L669.10,528.68 L671.72,528.93 L674.33,528.91 L676.95,528.85 L679.56,528.54 L682.17,528.75 L684.79,528.68 L688.59,522.24 L691.12,521.53 L693.65,520.80 L696.18,519.78 L699.65,519.64 L703.11,520.00 L705.61,519.92 L708.11,519.91 L710.61,519.87 L713.10,519.75 L715.60,519.57 L718.10,519.19 L720.60,519.34 L723.09,519.04 L726.39,519.36 L729.04,521.60 L731.61,522.16 L734.18,522.25 L736.75,522.69 L739.32,522.63 L741.89,523.40 L744.46,523.51 L747.03,523.84 L749.94,523.90 L752.84,524.28 L755.75,524.17 L758.66,524.62 L761.56,524.81 L766.18,530.25 L768.66,530.41 L771.14,530.36 L773.61,530.58 L776.09,530.41 L778.57,530.53 L781.04,530.23 L783.52,530.29 L786.00,530.48 L788.47,530.75 L790.95,530.67 L793.43,530.57 L796.40,530.70 L799.37,530.72 L802.34,530.71 L805.31,530.57 L807.79,530.66 L810.27,531.30 L812.74,531.63 L815.22,531.45 L817.70,531.91 L820.17,531.97 L822.65,532.49 L825.29,533.18 L827.93,533.57 L830.57,534.42 L833.55,534.58 L836.52,534.75 L839.49,535.01 L842.46,535.38 L843.12,538.90 L845.70,538.90 L848.27,539.11 L850.85,539.05 L853.42,538.71 L856.00,538.90 L856.00,538.90 L261.30,538.90 Z" fill="#5794f2" fill-opacity="0.1"/>
<path d="M261.30,453.69 L264.93,454.33 L268.56,454.95 L272.20,455.29 L275.17,455.50 L278.14,455.35 L281.11,455.29 L282.93,453.37 L285.49,452.75 L288.05,451.77 L291.24,451.78 L294.43,451.39 L297.62,451.13 L300.10,452.09 L303.90,451.13 L306.79,450.83 L309.68,450.81 L312.56,450.75 L315.45,450.81 L317.93,448.89 L320.90,448.82 L323.87,448.44 L326.85,448.25 L329.53,448.36 L332.21,448.41 L334.89,448.45 L337.58,448.25 L340.29,448.58 L342.99,448.41 L345.70,448.65 L348.41,448.86 L351.12,449.21 L354.25,449.37 L357.39,449.85 L361.19,451.13 L363.17,453.69 L366.06,454.17 L368.95,454.33 L371.48,454.96 L374.01,455.33 L376.54,455.93 L379.10,455.89 L381.66,455.91 L384.22,455.98 L386.78,456.25 L389.58,456.63 L392.39,456.57 L393.05,458.18 L393.71,478.68 L394.70,484.12 L395.86,499.82 L399.49,495.33 L403.29,493.41 L405.85,490.16 L408.41,487.01 L410.97,485.32 L413.52,483.80 L416.06,482.95 L418.59,482.26 L421.12,481.24 L423.68,481.11 L426.24,481.17 L428.80,480.60 L431.36,480.50 L433.91,480.52 L436.47,480.41 L439.15,480.45 L441.83,480.08 L444.51,480.19 L447.19,479.97 L449.87,479.93 L452.54,480.04 L455.22,480.03 L457.90,479.87 L460.58,479.86 L463.14,479.99 L465.70,480.22 L468.26,480.23 L470.82,480.07 L473.37,480.55 L475.93,480.41 L480.72,482.65 L481.55,496.30 L486.00,496.30 L486.67,506.03 L489.42,506.12 L492.17,505.67 L494.92,505.59 L495.58,509.17 L498.33,509.29 L501.08,509.16 L503.84,509.19 L506.59,509.25 L509.34,508.92 L512.09,509.17 L516.55,505.59 L519.12,505.55 L521.70,505.25 L524.28,505.16 L526.85,504.75 L529.43,504.62 L532.27,505.09 L535.12,505.40 L537.97,505.55 L540.82,506.03 L543.55,506.31 L546.29,506.37 L549.03,506.38 L551.76,506.97 L554.50,507.17 L557.23,507.27 L559.97,507.32 L562.50,507.18 L565.03,507.26 L567.57,507.45 L570.10,507.40 L572.63,507.48 L575.16,507.32 L578.13,506.97 L581.10,506.82 L584.08,506.23 L586.97,506.40 L589.85,506.57 L592.74,506.81 L595.63,507.32 L598.60,505.34 L601.58,503.36 L604.55,501.74 L607.52,501.38 L610.49,500.63 L613.46,499.92 L616.22,499.68 L618.97,499.77 L621.72,499.96 L624.47,499.69 L627.22,499.85 L629.97,499.92 L632.86,499.52 L635.75,499.56 L638.64,499.38 L641.53,498.99 L645.33,499.92 L645.82,504.18 L649.37,504.91 L652.92,505.59 L655.73,505.77 L658.54,505.65 L661.34,505.35 L664.15,505.67 L666.96,505.59 L668.11,507.32 L669.10,528.68 L671.72,528.93 L674.33,528.91 L676.95,528.85 L679.56,528.54 L682.17,528.75 L684.79,528.68 L688.59,522.24 L691.12,521.53 L693.65,520.80 L696.18,519.78 L699.65,519.64 L703.11,520.00 L705.61,519.92 L708.11,519.91 L710.61,519.87 L713.10,519.75 L715.60,519.57 L718.10,519.19 L720.60,519.34 L723.09,519.04 L726.39,519.36 L729.04,521.60 L731.61,522.16 L734.18,522.25 L736.75,522.69 L739.32,522.63 L741.89,523.40 L744.46,523.51 L747.03,523.84 L749.94,523.90 L752.84,524.28 L755.75,524.17 L758.66,524.62 L761.56,524.81 L766.18,530.25 L768.66,530.41 L771.14,530.36 L773.61,530.58 L776.09,530.41 L778.57,530.53 L781.04,530.23 L783.52,530.29 L786.00,530.48 L788.47,530.75 L790.95,530.67 L793.43,530.57 L796.40,530.70 L799.37,530.72 L802.34,530.71 L805.31,530.57 L807.79,530.66 L810.27,531.30 L812.74,531.63 L815.22,531.45 L817.70,531.91 L820.17,531.97 L822.65,532.49 L825.29,533.18 L827.93,533.57 L830.57,534.42 L833.55,534.58 L836.52,534.75 L839.49,535.01 L842.46,535.38 L843.12,538.90 L845.70,538.90 L848.27,539.11 L850.85,539.05 L853.42,538.71 L856.00,538.90" fill="none" stroke="#6f8ad0" stroke-width="1.0" stroke-linejoin="round"/>
<path d="M261.30,498.54 L262.46,493.73 L263.28,497.05 L264.11,500.38 L264.93,505.26 L265.76,503.75 L266.58,502.87 L267.41,503.51 L268.23,504.30 L269.22,484.60 L270.22,505.26 L271.01,502.32 L271.81,505.06 L272.61,502.05 L273.41,498.86 L274.21,499.01 L275.00,498.54 L275.83,499.85 L276.65,506.30 L277.48,507.67 L278.34,507.13 L279.20,507.42 L280.06,505.46 L280.91,504.66 L281.77,504.30 L282.60,498.08 L283.42,488.87 L284.25,479.32 L285.07,492.28 L285.90,503.34 L286.73,499.50 L287.55,498.11 L288.38,498.69 L289.20,495.17 L290.03,489.69 L290.85,488.33 L291.68,482.05 L292.50,478.36 L293.33,493.43 L294.16,505.26 L295.02,507.42 L295.89,503.66 L296.76,506.52 L297.62,505.26 L298.45,511.46 L299.27,513.11 L300.10,520.16 L300.92,520.47 L301.75,524.92 L302.58,525.93 L303.40,524.07 L304.23,526.03 L305.05,525.57 L305.88,527.75 L306.70,524.71 L307.53,525.93 L308.35,526.89 L309.11,524.28 L309.86,524.01 L310.61,526.00 L311.36,525.14 L312.11,525.40 L312.87,524.90 L313.62,524.66 L314.37,523.05 L315.12,521.60 L315.95,522.84 L316.77,524.97 L317.60,526.87 L318.43,523.72 L319.25,524.95 L320.08,524.83 L320.90,522.39 L321.73,523.52 L322.55,516.40 L323.38,509.91 L324.20,501.90 L325.03,489.97 L325.86,476.99 L326.68,465.86 L327.51,481.47 L328.33,493.25 L329.20,493.72 L330.07,500.36 L330.93,499.74 L331.80,503.34 L332.62,500.83 L333.45,503.38 L334.28,499.04 L335.10,499.84 L335.93,497.90 L336.75,499.34 L337.58,498.16 L338.40,495.17 L339.23,498.24 L340.05,496.57 L340.88,501.53 L341.71,501.90 L342.46,500.03 L343.22,498.51 L343.98,497.68 L344.74,499.50 L345.50,498.69 L346.26,497.18 L347.02,495.33 L347.78,497.45 L348.54,493.91 L349.30,494.21 L350.13,496.61 L350.95,500.03 L351.78,505.26 L352.56,504.21 L353.34,497.21 L354.13,497.84 L354.91,493.70 L355.70,489.47 L356.48,485.08 L357.27,484.51 L358.05,480.76 L359.04,490.22 L360.03,503.34 L360.78,503.25 L361.54,504.37 L362.29,504.46 L363.04,505.16 L363.79,505.70 L364.54,505.50 L365.30,503.27 L366.05,502.05 L366.80,504.30 L367.79,504.49 L368.78,503.69 L369.77,500.46 L370.60,499.96 L371.42,503.52 L372.25,505.26 L373.01,503.81 L373.78,502.68 L374.54,499.27 L375.30,496.41 L376.07,496.15 L376.83,494.43 L377.59,494.15 L378.36,490.37 L379.68,504.30 L380.59,492.17 L381.49,483.64 L382.40,491.07 L383.31,494.48 L384.22,498.40 L385.13,505.26 L385.95,503.88 L386.78,498.30 L387.60,494.38 L388.43,492.78 L389.25,490.37 L390.08,494.09 L390.91,502.00 L391.73,505.26 L392.56,504.91 L393.38,505.50 L394.21,503.34 L395.09,509.70 L395.97,519.93 L396.85,526.89 L397.67,527.33 L398.50,525.21 L399.33,526.08 L400.15,525.79 L400.98,528.29 L401.80,528.33 L402.57,528.07 L403.33,526.72 L404.10,527.50 L404.86,528.01 L405.63,527.22 L406.40,528.02 L407.16,526.72 L407.93,523.77 L408.69,523.59 L409.46,524.72 L410.22,524.97 L411.05,519.20 L411.87,513.43 L412.70,512.79 L413.52,512.52 L414.35,510.38 L415.18,506.83 L416.00,506.71 L416.74,505.12 L417.49,507.31 L418.23,505.47 L418.97,505.52 L419.72,505.86 L420.46,506.00 L421.20,505.58 L421.94,507.30 L422.69,505.82 L423.43,506.71 L424.26,510.54 L425.08,512.53 L425.91,514.19 L426.73,518.24 L427.56,517.97 L428.38,520.25 L429.21,517.99 L430.03,519.83 L430.86,520.69 L431.69,521.60 L432.57,509.94 L433.45,493.85 L434.33,480.28 L435.15,503.70 L435.98,524.97 L436.80,521.24 L437.63,519.17 L438.46,514.66 L439.28,512.41 L440.11,510.07 L440.93,513.35 L441.76,519.86 L442.58,523.14 L443.41,528.33 L444.27,520.48 L445.13,513.26 L445.98,508.51 L446.84,499.55 L447.70,494.21 L448.53,503.18 L449.35,514.54 L450.18,525.93 L450.92,512.58 L451.66,501.37 L452.41,491.97 L453.15,480.76 L454.14,503.70 L455.13,526.89 L455.96,514.40 L456.78,497.56 L457.61,485.08 L458.93,528.33 L459.75,513.14 L460.58,501.84 L461.40,488.45 L460.58,470.19 L461.40,486.50 L462.23,503.51 L463.06,521.60 L463.88,494.42 L464.71,469.23 L465.53,481.94 L466.36,491.81 L467.18,489.48 L468.01,489.22 L468.83,488.45 L469.66,486.13 L470.49,485.59 L471.31,483.64 L472.14,505.45 L472.96,528.33 L473.79,526.98 L474.61,527.42 L475.44,527.85 L476.35,507.19 L477.25,488.45 L478.08,484.40 L478.91,477.75 L479.73,470.19 L480.56,497.11 L481.38,523.52 L482.18,523.28 L482.98,525.54 L483.78,523.92 L484.57,524.56 L485.37,527.51 L486.17,525.93 L487.05,518.04 L487.93,511.09 L488.81,501.90 L489.64,518.73 L490.46,531.69 L491.32,528.95 L492.18,523.83 L493.04,520.10 L493.90,515.72 L494.76,510.07 L495.58,522.89 L496.41,531.69 L497.23,520.79 L498.06,510.11 L498.88,498.54 L499.71,515.59 L500.53,533.61 L501.36,500.31 L502.18,467.79 L503.18,471.80 L504.17,473.55 L505.49,531.69 L506.31,529.31 L507.14,532.57 L507.96,529.77 L508.87,510.48 L509.78,490.37 L510.61,508.63 L511.43,524.97 L512.26,511.58 L513.08,499.08 L513.91,483.64 L514.73,482.69 L515.56,485.15 L516.38,485.08 L517.21,495.50 L518.03,501.90 L518.86,498.69 L519.69,498.21 L520.51,493.73 L521.34,493.22 L522.16,493.79 L522.99,492.77 L523.81,509.48 L524.64,526.89 L525.46,525.39 L526.29,526.47 L527.12,528.33 L527.90,517.87 L528.68,505.35 L529.47,495.28 L530.25,485.08 L531.24,495.74 L532.23,505.26 L533.06,501.77 L533.88,495.17 L534.96,476.50 L536.03,458.66 L537.02,480.00 L538.01,501.90 L538.84,494.32 L539.66,488.67 L540.49,485.08 L541.31,497.11 L542.14,510.07 L542.92,502.79 L543.71,492.51 L544.49,488.44 L545.28,478.36 L546.43,533.61 L547.19,535.27 L547.95,533.25 L548.70,533.00 L549.46,535.01 L550.22,532.85 L550.97,531.68 L551.73,533.87 L552.49,533.59 L553.24,534.44 L554.00,534.12 L554.76,531.13 L555.51,533.13 L556.29,533.69 L557.08,531.20 L557.86,531.44 L558.64,532.85 L559.42,534.33 L560.20,531.25 L560.98,533.37 L561.76,533.76 L562.55,534.20 L563.33,531.36 L564.11,533.52 L564.89,534.44 L565.67,533.65 L566.45,535.22 L567.24,533.61 L568.06,531.65 L568.89,530.98 L569.71,529.29 L570.79,504.72 L571.86,478.36 L572.68,478.10 L573.51,480.28 L574.33,502.89 L575.16,528.33 L575.92,527.46 L576.68,522.23 L577.44,520.37 L578.20,514.53 L578.96,513.43 L579.78,511.25 L580.61,511.51 L581.43,522.70 L582.26,531.69 L583.09,532.22 L583.91,532.22 L584.74,528.14 L585.56,529.77 L586.39,524.90 L587.21,517.77 L588.04,512.58 L588.86,506.71 L589.69,513.29 L590.51,520.67 L591.34,528.33 L592.11,505.65 L592.88,486.74 L593.65,463.46 L594.64,493.09 L595.63,524.97 L596.46,517.18 L597.28,507.52 L598.11,499.73 L598.94,490.37 L599.76,502.78 L600.59,513.30 L601.41,524.97 L602.24,500.61 L603.06,475.95 L603.89,485.44 L604.71,493.73 L605.54,491.35 L606.36,490.70 L607.19,491.77 L608.02,488.45 L608.84,501.69 L609.67,512.98 L610.49,524.97 L611.32,511.63 L612.14,500.22 L612.97,490.37 L613.79,490.65 L614.62,493.43 L615.45,491.81 L616.27,498.90 L617.10,508.70 L617.92,516.35 L618.75,524.97 L619.57,508.45 L620.40,493.73 L621.33,488.04 L622.27,483.56 L623.21,478.36 L624.03,479.94 L624.86,485.08 L625.68,499.99 L626.51,514.38 L627.33,528.33 L628.16,520.20 L628.98,516.43 L629.81,509.39 L630.63,501.90 L631.46,497.59 L632.29,498.01 L633.11,491.80 L633.94,490.37 L634.76,487.77 L635.59,487.14 L636.41,485.08 L637.24,505.95 L638.06,524.97 L638.83,503.57 L639.61,482.83 L640.38,464.42 L641.37,526.89 L642.30,526.51 L643.24,523.14 L644.17,521.12 L645.08,525.59 L645.99,530.49 L646.92,521.61 L647.86,513.44 L648.80,503.82 L649.62,530.49 L650.45,523.42 L651.27,512.98 L652.10,504.78 L653.42,532.17 L654.23,530.56 L655.03,533.51 L655.84,532.54 L656.65,529.72 L657.45,529.58 L658.26,529.86 L659.07,532.36 L659.88,529.07 L660.68,529.77 L661.59,529.38 L662.50,533.13 L663.29,531.05 L664.08,532.40 L664.87,535.29 L665.66,531.93 L666.45,534.69 L667.24,532.92 L668.03,531.66 L668.82,532.76 L669.61,535.33 L670.40,534.72 L671.19,532.08 L671.98,535.47 L672.77,533.55 L673.56,534.10 L674.37,534.09 L675.18,534.81 L675.98,532.44 L676.79,534.57 L677.60,533.92 L678.40,532.38 L679.21,533.33 L680.02,533.02 L680.83,530.73 L681.63,530.67 L682.44,530.22 L683.25,529.90 L684.05,533.38 L684.86,532.36 L685.67,533.14 L686.48,532.17 L687.28,532.91 L688.09,533.13 L688.83,531.00 L689.58,533.20 L690.32,534.33 L691.06,531.32 L691.81,533.44 L692.55,531.12 L693.29,531.43 L694.03,529.44 L694.78,530.73 L695.52,530.73 L696.33,529.61 L697.13,530.55 L697.93,528.71 L698.74,529.39 L699.54,526.64 L700.35,527.05 L701.15,528.11 L701.96,525.93 L702.87,524.67 L703.78,521.12 L704.68,527.68 L705.59,533.13 L706.38,527.79 L707.16,525.87 L707.94,519.24 L708.73,515.84 L710.21,533.13 L710.97,531.41 L711.73,532.81 L712.49,529.24 L713.25,530.67 L714.01,527.85 L714.82,529.79 L715.63,528.08 L716.43,529.94 L717.24,527.50 L718.05,529.53 L718.85,530.53 L719.66,528.81 L720.47,532.45 L721.28,530.73 L722.05,528.93 L722.83,531.01 L723.61,529.77 L724.39,525.48 L725.17,525.83 L725.95,526.99 L726.72,524.97 L727.50,527.45 L728.28,524.57 L729.06,526.72 L729.84,526.87 L730.62,530.64 L731.39,529.37 L732.17,530.73 L732.92,531.27 L733.66,531.69 L734.40,531.16 L735.14,529.86 L735.89,530.91 L736.63,530.65 L737.37,531.63 L738.12,528.53 L738.86,529.23 L739.60,528.45 L740.35,529.96 L741.09,528.06 L741.83,529.41 L742.57,528.99 L743.32,528.97 L744.06,528.16 L744.80,529.55 L745.55,530.74 L746.29,530.92 L747.03,528.81 L747.84,530.42 L748.65,531.44 L749.45,528.09 L750.26,530.17 L751.07,529.29 L751.88,532.89 L752.68,531.18 L753.49,529.69 L754.30,531.69 L755.10,530.75 L755.91,531.15 L756.72,530.56 L757.53,531.71 L758.33,531.05 L759.14,530.60 L759.95,529.24 L760.75,528.77 L761.56,527.85 L762.50,520.44 L763.43,517.82 L764.37,510.55 L765.30,518.34 L766.24,524.97 L767.17,530.73 L767.95,530.59 L768.72,528.45 L769.49,527.07 L770.26,524.40 L771.03,524.75 L771.80,521.12 L772.68,523.77 L773.56,530.66 L774.44,534.58 L775.20,532.65 L775.95,533.71 L776.71,533.74 L777.47,534.58 L778.23,532.51 L778.98,536.06 L779.74,533.65 L780.50,535.25 L781.26,533.57 L782.01,533.30 L782.77,535.72 L783.53,535.53 L784.29,536.26 L785.04,535.35 L785.80,535.98 L786.56,534.55 L787.32,534.10 L788.07,531.92 L788.83,534.43 L789.59,534.54 L790.35,533.74 L791.10,534.41 L791.86,532.34 L792.62,532.28 L793.37,534.56 L794.13,534.10 L794.89,532.11 L795.65,530.82 L796.40,531.97 L797.16,532.78 L797.92,530.30 L798.68,534.37 L799.43,534.01 L800.19,530.77 L800.95,532.25 L801.70,533.70 L802.46,531.40 L803.22,529.37 L803.98,531.28 L804.73,531.89 L805.49,532.87 L806.25,532.84 L807.00,529.14 L807.76,530.78 L808.52,528.73 L809.28,530.49 L810.18,534.22 L811.09,534.10 L811.88,534.50 L812.67,534.63 L813.45,532.43 L814.24,533.19 L815.03,531.64 L815.82,530.28 L816.60,530.02 L817.39,530.42 L818.18,529.77 L818.97,525.03 L819.75,527.76 L820.54,525.63 L821.33,524.97 L822.21,528.43 L823.09,530.92 L823.97,534.10 L824.74,535.67 L825.51,534.45 L826.28,535.12 L827.05,533.02 L827.82,531.15 L828.59,532.32 L829.36,530.98 L830.13,533.54 L830.90,534.16 L831.67,531.68 L832.45,531.69 L833.22,531.40 L834.12,532.92 L835.03,535.06 L835.79,535.75 L836.55,534.84 L837.30,534.56 L838.06,533.91 L838.82,536.69 L839.57,536.24 L840.33,534.77 L841.09,537.53 L841.84,538.16 L842.60,537.47 L843.36,538.60 L844.11,536.98 L844.89,535.92 L845.67,535.84 L846.45,538.15 L847.23,539.06 L848.00,539.39 L848.78,538.80 L849.56,539.62 L850.34,538.25 L851.12,537.73 L851.90,539.28 L852.67,540.20 L853.45,537.55 L854.23,540.49 L855.01,538.66 L856.00,537.46 L856.00,538.90 L261.30,538.90 Z" fill="#eab839" fill-opacity="0.1"/>
<path d="M261.30,498.54 L262.46,493.73 L263.28,497.05 L264.11,500.38 L264.93,505.26 L265.76,503.75 L266.58,502.87 L267.41,503.51 L268.23,504.30 L269.22,484.60 L270.22,505.26 L271.01,502.32 L271.81,505.06 L272.61,502.05 L273.41,498.86 L274.21,499.01 L275.00,498.54 L275.83,499.85 L276.65,506.30 L277.48,507.67 L278.34,507.13 L279.20,507.42 L280.06,505.46 L280.91,504.66 L281.77,504.30 L282.60,498.08 L283.42,488.87 L284.25,479.32 L285.07,492.28 L285.90,503.34 L286.73,499.50 L287.55,498.11 L288.38,498.69 L289.20,495.17 L290.03,489.69 L290.85,488.33 L291.68,482.05 L292.50,478.36 L293.33,493.43 L294.16,505.26 L295.02,507.42 L295.89,503.66 L296.76,506.52 L297.62,505.26 L298.45,511.46 L299.27,513.11 L300.10,520.16 L300.92,520.47 L301.75,524.92 L302.58,525.93 L303.40,524.07 L304.23,526.03 L305.05,525.57 L305.88,527.75 L306.70,524.71 L307.53,525.93 L308.35,526.89 L309.11,524.28 L309.86,524.01 L310.61,526.00 L311.36,525.14 L312.11,525.40 L312.87,524.90 L313.62,524.66 L314.37,523.05 L315.12,521.60 L315.95,522.84 L316.77,524.97 L317.60,526.87 L318.43,523.72 L319.25,524.95 L320.08,524.83 L320.90,522.39 L321.73,523.52 L322.55,516.40 L323.38,509.91 L324.20,501.90 L325.03,489.97 L325.86,476.99 L326.68,465.86 L327.51,481.47 L328.33,493.25 L329.20,493.72 L330.07,500.36 L330.93,499.74 L331.80,503.34 L332.62,500.83 L333.45,503.38 L334.28,499.04 L335.10,499.84 L335.93,497.90 L336.75,499.34 L337.58,498.16 L338.40,495.17 L339.23,498.24 L340.05,496.57 L340.88,501.53 L341.71,501.90 L342.46,500.03 L343.22,498.51 L343.98,497.68 L344.74,499.50 L345.50,498.69 L346.26,497.18 L347.02,495.33 L347.78,497.45 L348.54,493.91 L349.30,494.21 L350.13,496.61 L350.95,500.03 L351.78,505.26 L352.56,504.21 L353.34,497.21 L354.13,497.84 L354.91,493.70 L355.70,489.47 L356.48,485.08 L357.27,484.51 L358.05,480.76 L359.04,490.22 L360.03,503.34 L360.78,503.25 L361.54,504.37 L362.29,504.46 L363.04,505.16 L363.79,505.70 L364.54,505.50 L365.30,503.27 L366.05,502.05 L366.80,504.30 L367.79,504.49 L368.78,503.69 L369.77,500.46 L370.60,499.96 L371.42,503.52 L372.25,505.26 L373.01,503.81 L373.78,502.68 L374.54,499.27 L375.30,496.41 L376.07,496.15 L376.83,494.43 L377.59,494.15 L378.36,490.37 L379.68,504.30 L380.59,492.17 L381.49,483.64 L382.40,491.07 L383.31,494.48 L384.22,498.40 L385.13,505.26 L385.95,503.88 L386.78,498.30 L387.60,494.38 L388.43,492.78 L389.25,490.37 L390.08,494.09 L390.91,502.00 L391.73,505.26 L392.56,504.91 L393.38,505.50 L394.21,503.34 L395.09,509.70 L395.97,519.93 L396.85,526.89 L397.67,527.33 L398.50,525.21 L399.33,526.08 L400.15,525.79 L400.98,528.29 L401.80,528.33 L402.57,528.07 L403.33,526.72 L404.10,527.50 L404.86,528.01 L405.63,527.22 L406.40,528.02 L407.16,526.72 L407.93,523.77 L408.69,523.59 L409.46,524.72 L410.22,524.97 L411.05,519.20 L411.87,513.43 L412.70,512.79 L413.52,512.52 L414.35,510.38 L415.18,506.83 L416.00,506.71 L416.74,505.12 L417.49,507.31 L418.23,505.47 L418.97,505.52 L419.72,505.86 L420.46,506.00 L421.20,505.58 L421.94,507.30 L422.69,505.82 L423.43,506.71 L424.26,510.54 L425.08,512.53 L425.91,514.19 L426.73,518.24 L427.56,517.97 L428.38,520.25 L429.21,517.99 L430.03,519.83 L430.86,520.69 L431.69,521.60 L432.57,509.94 L433.45,493.85 L434.33,480.28 L435.15,503.70 L435.98,524.97 L436.80,521.24 L437.63,519.17 L438.46,514.66 L439.28,512.41 L440.11,510.07 L440.93,513.35 L441.76,519.86 L442.58,523.14 L443.41,528.33 L444.27,520.48 L445.13,513.26 L445.98,508.51 L446.84,499.55 L447.70,494.21 L448.53,503.18 L449.35,514.54 L450.18,525.93 L450.92,512.58 L451.66,501.37 L452.41,491.97 L453.15,480.76 L454.14,503.70 L455.13,526.89 L455.96,514.40 L456.78,497.56 L457.61,485.08 L458.93,528.33 L459.75,513.14 L460.58,501.84 L461.40,488.45 L460.58,470.19 L461.40,486.50 L462.23,503.51 L463.06,521.60 L463.88,494.42 L464.71,469.23 L465.53,481.94 L466.36,491.81 L467.18,489.48 L468.01,489.22 L468.83,488.45 L469.66,486.13 L470.49,485.59 L471.31,483.64 L472.14,505.45 L472.96,528.33 L473.79,526.98 L474.61,527.42 L475.44,527.85 L476.35,507.19 L477.25,488.45 L478.08,484.40 L478.91,477.75 L479.73,470.19 L480.56,497.11 L481.38,523.52 L482.18,523.28 L482.98,525.54 L483.78,523.92 L484.57,524.56 L485.37,527.51 L486.17,525.93 L487.05,518.04 L487.93,511.09 L488.81,501.90 L489.64,518.73 L490.46,531.69 L491.32,528.95 L492.18,523.83 L493.04,520.10 L493.90,515.72 L494.76,510.07 L495.58,522.89 L496.41,531.69 L497.23,520.79 L498.06,510.11 L498.88,498.54 L499.71,515.59 L500.53,533.61 L501.36,500.31 L502.18,467.79 L503.18,471.80 L504.17,473.55 L505.49,531.69 L506.31,529.31 L507.14,532.57 L507.96,529.77 L508.87,510.48 L509.78,490.37 L510.61,508.63 L511.43,524.97 L512.26,511.58 L513.08,499.08 L513.91,483.64 L514.73,482.69 L515.56,485.15 L516.38,485.08 L517.21,495.50 L518.03,501.90 L518.86,498.69 L519.69,498.21 L520.51,493.73 L521.34,493.22 L522.16,493.79 L522.99,492.77 L523.81,509.48 L524.64,526.89 L525.46,525.39 L526.29,526.47 L527.12,528.33 L527.90,517.87 L528.68,505.35 L529.47,495.28 L530.25,485.08 L531.24,495.74 L532.23,505.26 L533.06,501.77 L533.88,495.17 L534.96,476.50 L536.03,458.66 L537.02,480.00 L538.01,501.90 L538.84,494.32 L539.66,488.67 L540.49,485.08 L541.31,497.11 L542.14,510.07 L542.92,502.79 L543.71,492.51 L544.49,488.44 L545.28,478.36 L546.43,533.61 L547.19,535.27 L547.95,533.25 L548.70,533.00 L549.46,535.01 L550.22,532.85 L550.97,531.68 L551.73,533.87 L552.49,533.59 L553.24,534.44 L554.00,534.12 L554.76,531.13 L555.51,533.13 L556.29,533.69 L557.08,531.20 L557.86,531.44 L558.64,532.85 L559.42,534.33 L560.20,531.25 L560.98,533.37 L561.76,533.76 L562.55,534.20 L563.33,531.36 L564.11,533.52 L564.89,534.44 L565.67,533.65 L566.45,535.22 L567.24,533.61 L568.06,531.65 L568.89,530.98 L569.71,529.29 L570.79,504.72 L571.86,478.36 L572.68,478.10 L573.51,480.28 L574.33,502.89 L575.16,528.33 L575.92,527.46 L576.68,522.23 L577.44,520.37 L578.20,514.53 L578.96,513.43 L579.78,511.25 L580.61,511.51 L581.43,522.70 L582.26,531.69 L583.09,532.22 L583.91,532.22 L584.74,528.14 L585.56,529.77 L586.39,524.90 L587.21,517.77 L588.04,512.58 L588.86,506.71 L589.69,513.29 L590.51,520.67 L591.34,528.33 L592.11,505.65 L592.88,486.74 L593.65,463.46 L594.64,493.09 L595.63,524.97 L596.46,517.18 L597.28,507.52 L598.11,499.73 L598.94,490.37 L599.76,502.78 L600.59,513.30 L601.41,524.97 L602.24,500.61 L603.06,475.95 L603.89,485.44 L604.71,493.73 L605.54,491.35 L606.36,490.70 L607.19,491.77 L608.02,488.45 L608.84,501.69 L609.67,512.98 L610.49,524.97 L611.32,511.63 L612.14,500.22 L612.97,490.37 L613.79,490.65 L614.62,493.43 L615.45,491.81 L616.27,498.90 L617.10,508.70 L617.92,516.35 L618.75,524.97 L619.57,508.45 L620.40,493.73 L621.33,488.04 L622.27,483.56 L623.21,478.36 L624.03,479.94 L624.86,485.08 L625.68,499.99 L626.51,514.38 L627.33,528.33 L628.16,520.20 L628.98,516.43 L629.81,509.39 L630.63,501.90 L631.46,497.59 L632.29,498.01 L633.11,491.80 L633.94,490.37 L634.76,487.77 L635.59,487.14 L636.41,485.08 L637.24,505.95 L638.06,524.97 L638.83,503.57 L639.61,482.83 L640.38,464.42 L641.37,526.89 L642.30,526.51 L643.24,523.14 L644.17,521.12 L645.08,525.59 L645.99,530.49 L646.92,521.61 L647.86,513.44 L648.80,503.82 L649.62,530.49 L650.45,523.42 L651.27,512.98 L652.10,504.78 L653.42,532.17 L654.23,530.56 L655.03,533.51 L655.84,532.54 L656.65,529.72 L657.45,529.58 L658.26,529.86 L659.07,532.36 L659.88,529.07 L660.68,529.77 L661.59,529.38 L662.50,533.13 L663.29,531.05 L664.08,532.40 L664.87,535.29 L665.66,531.93 L666.45,534.69 L667.24,532.92 L668.03,531.66 L668.82,532.76 L669.61,535.33 L670.40,534.72 L671.19,532.08 L671.98,535.47 L672.77,533.55 L673.56,534.10 L674.37,534.09 L675.18,534.81 L675.98,532.44 L676.79,534.57 L677.60,533.92 L678.40,532.38 L679.21,533.33 L680.02,533.02 L680.83,530.73 L681.63,530.67 L682.44,530.22 L683.25,529.90 L684.05,533.38 L684.86,532.36 L685.67,533.14 L686.48,532.17 L687.28,532.91 L688.09,533.13 L688.83,531.00 L689.58,533.20 L690.32,534.33 L691.06,531.32 L691.81,533.44 L692.55,531.12 L693.29,531.43 L694.03,529.44 L694.78,530.73 L695.52,530.73 L696.33,529.61 L697.13,530.55 L697.93,528.71 L698.74,529.39 L699.54,526.64 L700.35,527.05 L701.15,528.11 L701.96,525.93 L702.87,524.67 L703.78,521.12 L704.68,527.68 L705.59,533.13 L706.38,527.79 L707.16,525.87 L707.94,519.24 L708.73,515.84 L710.21,533.13 L710.97,531.41 L711.73,532.81 L712.49,529.24 L713.25,530.67 L714.01,527.85 L714.82,529.79 L715.63,528.08 L716.43,529.94 L717.24,527.50 L718.05,529.53 L718.85,530.53 L719.66,528.81 L720.47,532.45 L721.28,530.73 L722.05,528.93 L722.83,531.01 L723.61,529.77 L724.39,525.48 L725.17,525.83 L725.95,526.99 L726.72,524.97 L727.50,527.45 L728.28,524.57 L729.06,526.72 L729.84,526.87 L730.62,530.64 L731.39,529.37 L732.17,530.73 L732.92,531.27 L733.66,531.69 L734.40,531.16 L735.14,529.86 L735.89,530.91 L736.63,530.65 L737.37,531.63 L738.12,528.53 L738.86,529.23 L739.60,528.45 L740.35,529.96 L741.09,528.06 L741.83,529.41 L742.57,528.99 L743.32,528.97 L744.06,528.16 L744.80,529.55 L745.55,530.74 L746.29,530.92 L747.03,528.81 L747.84,530.42 L748.65,531.44 L749.45,528.09 L750.26,530.17 L751.07,529.29 L751.88,532.89 L752.68,531.18 L753.49,529.69 L754.30,531.69 L755.10,530.75 L755.91,531.15 L756.72,530.56 L757.53,531.71 L758.33,531.05 L759.14,530.60 L759.95,529.24 L760.75,528.77 L761.56,527.85 L762.50,520.44 L763.43,517.82 L764.37,510.55 L765.30,518.34 L766.24,524.97 L767.17,530.73 L767.95,530.59 L768.72,528.45 L769.49,527.07 L770.26,524.40 L771.03,524.75 L771.80,521.12 L772.68,523.77 L773.56,530.66 L774.44,534.58 L775.20,532.65 L775.95,533.71 L776.71,533.74 L777.47,534.58 L778.23,532.51 L778.98,536.06 L779.74,533.65 L780.50,535.25 L781.26,533.57 L782.01,533.30 L782.77,535.72 L783.53,535.53 L784.29,536.26 L785.04,535.35 L785.80,535.98 L786.56,534.55 L787.32,534.10 L788.07,531.92 L788.83,534.43 L789.59,534.54 L790.35,533.74 L791.10,534.41 L791.86,532.34 L792.62,532.28 L793.37,534.56 L794.13,534.10 L794.89,532.11 L795.65,530.82 L796.40,531.97 L797.16,532.78 L797.92,530.30 L798.68,534.37 L799.43,534.01 L800.19,530.77 L800.95,532.25 L801.70,533.70 L802.46,531.40 L803.22,529.37 L803.98,531.28 L804.73,531.89 L805.49,532.87 L806.25,532.84 L807.00,529.14 L807.76,530.78 L808.52,528.73 L809.28,530.49 L810.18,534.22 L811.09,534.10 L811.88,534.50 L812.67,534.63 L813.45,532.43 L814.24,533.19 L815.03,531.64 L815.82,530.28 L816.60,530.02 L817.39,530.42 L818.18,529.77 L818.97,525.03 L819.75,527.76 L820.54,525.63 L821.33,524.97 L822.21,528.43 L823.09,530.92 L823.97,534.10 L824.74,535.67 L825.51,534.45 L826.28,535.12 L827.05,533.02 L827.82,531.15 L828.59,532.32 L829.36,530.98 L830.13,533.54 L830.90,534.16 L831.67,531.68 L832.45,531.69 L833.22,531.40 L834.12,532.92 L835.03,535.06 L835.79,535.75 L836.55,534.84 L837.30,534.56 L838.06,533.91 L838.82,536.69 L839.57,536.24 L840.33,534.77 L841.09,537.53 L841.84,538.16 L842.60,537.47 L843.36,538.60 L844.11,536.98 L844.89,535.92 L845.67,535.84 L846.45,538.15 L847.23,539.06 L848.00,539.39 L848.78,538.80 L849.56,539.62 L850.34,538.25 L851.12,537.73 L851.90,539.28 L852.67,540.20 L853.45,537.55 L854.23,540.49 L855.01,538.66 L856.00,537.46" fill="none" stroke="#dcb655" stroke-width="1.0" stroke-linejoin="round"/>
<path d="M261.30,535.06 L262.29,534.74 L263.28,534.72 L264.27,535.13 L265.26,535.40 L266.25,535.72 L267.24,534.98 L268.23,535.21 L269.22,534.90 L270.22,535.36 L271.21,534.92 L272.20,535.51 L273.19,534.92 L274.18,535.02 L275.17,535.40 L276.16,535.28 L277.15,535.13 L278.14,535.71 L279.13,535.31 L280.12,535.04 L281.11,535.68 L282.10,535.08 L283.09,535.23 L284.08,535.07 L285.07,535.67 L286.07,535.97 L287.06,535.17 L288.05,535.54 L289.05,535.20 L290.05,535.63 L291.05,536.05 L292.05,535.94 L293.05,535.45 L294.05,535.86 L295.05,535.12 L296.05,535.55 L297.05,536.01 L298.05,535.50 L299.05,535.86 L300.05,535.21 L301.05,535.25 L302.06,535.72 L303.06,535.59 L304.06,535.54 L305.06,535.43 L306.06,535.25 L307.06,536.36 L308.06,535.99 L309.06,535.72 L310.06,536.08 L311.06,535.77 L312.06,536.36 L313.06,535.46 L314.06,535.89 L315.06,536.37 L316.06,535.76 L317.06,536.18 L318.07,536.32 L319.07,536.01 L320.07,536.42 L321.07,536.02 L322.17,535.87 L323.27,534.63 L324.37,534.58 L326.02,529.29 L327.26,529.06 L328.50,529.29 L330.15,535.54 L331.15,536.08 L332.14,535.18 L333.14,536.03 L334.14,535.65 L335.14,534.97 L336.13,535.28 L337.13,535.62 L338.13,535.52 L339.13,535.48 L340.12,535.77 L341.12,534.74 L342.12,535.81 L343.12,535.37 L344.11,534.97 L345.11,535.35 L346.11,534.66 L347.11,535.49 L348.10,534.62 L349.10,534.70 L350.10,534.94 L351.10,534.67 L352.09,535.16 L353.09,534.69 L354.09,535.06 L355.09,534.74 L356.08,535.08 L357.08,535.16 L358.08,534.91 L359.08,535.27 L360.08,535.67 L361.08,534.93 L362.07,535.50 L363.07,535.27 L364.07,534.95 L365.07,535.68 L366.07,535.88 L367.07,535.78 L368.06,535.27 L369.06,535.55 L370.06,535.69 L371.06,535.49 L372.06,534.97 L373.06,535.76 L374.05,535.61 L375.05,535.09 L376.05,535.42 L377.05,535.84 L378.05,535.62 L379.05,535.64 L380.04,536.05 L381.04,535.80 L382.04,535.91 L383.04,535.35 L384.04,535.93 L385.03,535.57 L386.03,535.23 L387.03,535.31 L388.03,535.96 L389.03,535.72 L390.03,536.07 L391.02,536.00 L392.02,535.92 L393.02,535.59 L394.02,535.45 L395.02,536.21 L396.02,536.56 L397.01,536.02 L398.67,533.13 L400.32,536.02 L401.33,536.08 L402.35,536.53 L403.36,536.56 L404.38,535.70 L405.40,536.46 L406.41,535.77 L407.43,536.18 L408.44,535.51 L409.46,535.61 L410.48,536.52 L411.49,536.37 L412.51,535.50 L413.52,536.02 L415.18,533.13 L416.83,536.02 L417.82,535.89 L418.81,536.11 L419.80,535.69 L420.79,535.66 L421.78,536.02 L423.43,533.13 L425.08,536.02 L426.11,536.03 L427.15,536.05 L428.18,536.48 L429.21,536.18 L430.24,536.43 L431.27,535.87 L432.31,535.89 L433.34,536.02 L434.99,533.13 L436.64,536.02 L437.69,536.43 L438.74,535.87 L439.79,536.48 L440.84,536.47 L441.89,535.85 L442.94,536.06 L443.99,535.56 L445.04,535.87 L446.09,535.78 L447.15,536.45 L448.20,536.02 L449.85,533.13 L451.50,536.50 L452.49,536.11 L453.48,536.98 L454.47,536.36 L455.46,536.02 L456.45,536.50 L457.28,533.13 L458.10,536.50 L459.10,536.03 L460.09,536.04 L461.09,536.55 L462.08,536.27 L463.08,536.16 L464.07,536.92 L465.07,535.99 L466.06,536.03 L467.06,536.57 L468.05,536.18 L469.05,536.56 L470.04,536.76 L471.04,536.25 L472.03,537.00 L473.03,536.15 L474.02,535.95 L475.01,536.74 L476.01,535.99 L477.00,536.98 L478.00,536.08 L478.99,536.75 L479.99,535.96 L480.98,536.58 L481.98,536.01 L482.97,537.04 L483.97,536.98 L484.96,536.13 L485.96,536.34 L486.95,536.46 L487.95,537.04 L488.94,536.87 L489.94,536.65 L490.93,537.01 L491.93,535.93 L492.92,536.19 L493.92,535.98 L494.91,536.27 L495.91,536.68 L496.90,536.98 L497.90,536.23 L498.89,536.94 L499.89,536.44 L500.88,536.54 L501.88,536.50 L502.87,536.99 L503.87,536.99 L504.86,536.47 L505.86,537.04 L506.85,536.47 L507.84,536.90 L508.84,536.75 L509.83,536.90 L510.83,536.42 L511.82,536.63 L512.82,536.82 L513.81,536.82 L514.81,536.42 L515.80,536.02 L516.80,536.59 L517.79,536.89 L518.79,536.71 L519.78,536.80 L520.78,536.41 L521.77,536.17 L522.77,536.42 L523.76,536.86 L524.76,536.70 L525.75,536.63 L526.75,536.57 L527.74,536.62 L528.74,535.92 L529.73,536.44 L530.73,536.31 L531.72,536.25 L532.72,536.33 L533.71,536.15 L534.71,536.64 L535.70,536.50 L536.69,536.31 L537.68,535.95 L538.67,536.88 L539.66,536.35 L540.65,536.63 L541.64,537.00 L542.64,537.03 L543.63,536.20 L544.62,536.94 L545.61,536.25 L546.60,536.96 L547.59,536.65 L548.58,537.04 L549.57,536.45 L550.56,536.17 L551.55,536.81 L552.54,536.42 L553.53,536.01 L554.52,536.74 L555.51,536.53 L556.50,536.24 L557.49,536.08 L558.48,536.88 L559.48,536.31 L560.47,536.94 L561.46,536.94 L562.45,535.94 L563.44,537.02 L564.43,536.01 L565.42,536.21 L566.41,536.29 L567.40,536.23 L568.39,536.32 L569.38,536.74 L570.37,536.56 L571.36,536.84 L572.35,536.08 L573.34,536.18 L574.33,536.17 L575.33,536.83 L576.32,536.39 L577.31,536.78 L578.30,536.16 L579.29,536.22 L580.28,535.93 L581.27,536.26 L582.26,536.29 L583.25,536.18 L584.24,536.97 L585.23,536.39 L586.22,537.04 L587.21,536.65 L588.20,536.94 L589.19,535.98 L590.18,537.04 L591.18,536.01 L592.17,535.98 L593.16,536.57 L594.15,536.11 L595.14,537.01 L596.13,536.91 L597.12,537.06 L598.11,537.00 L599.10,537.07 L600.09,536.12 L601.08,536.97 L602.07,536.39 L603.06,536.76 L604.05,536.92 L605.04,536.50 L605.87,532.65 L606.69,536.50 L607.75,536.59 L608.80,536.86 L609.85,535.95 L610.90,536.63 L611.95,536.39 L613.00,536.42 L614.05,536.35 L615.10,536.52 L616.15,536.76 L617.20,536.92 L618.25,536.50 L619.08,534.10 L619.90,536.50 L620.92,536.05 L621.94,536.85 L622.95,536.56 L623.97,536.14 L624.98,536.41 L626.00,535.98 L627.02,536.14 L628.03,536.48 L629.05,536.94 L630.06,536.39 L631.08,536.53 L632.10,536.08 L633.11,536.46 L634.13,536.27 L635.14,536.14 L636.16,536.53 L637.18,536.10 L638.19,536.04 L639.21,536.90 L640.22,536.01 L641.24,536.07 L642.26,536.09 L643.27,536.68 L644.29,536.78 L645.30,536.92 L646.32,536.50 L647.15,534.10 L647.97,536.50 L648.96,536.65 L649.95,536.10 L650.94,536.68 L651.93,537.10 L652.92,536.76 L653.91,537.02 L654.90,536.40 L655.90,536.24 L656.89,536.07 L657.88,537.04 L658.87,536.71 L659.86,537.01 L660.85,536.11 L661.84,536.21 L662.83,536.58 L663.82,536.08 L664.81,536.59 L665.80,536.30 L666.79,536.64 L667.78,536.79 L668.77,536.07 L669.76,536.25 L670.75,536.55 L671.75,536.24 L672.74,536.50 L673.73,536.33 L674.72,537.18 L675.71,537.11 L676.70,537.15 L677.69,536.58 L678.68,536.46 L679.67,537.11 L680.66,536.72 L681.65,537.18 L682.64,536.52 L683.63,536.42 L684.62,537.23 L685.61,536.20 L686.60,536.58 L687.60,537.20 L688.59,536.95 L689.58,537.18 L690.57,536.53 L691.56,536.32 L692.55,537.18 L693.54,537.18 L694.53,536.67 L695.52,536.41 L696.51,536.56 L697.50,536.89 L698.49,537.30 L699.48,536.72 L700.47,536.91 L701.46,536.52 L702.45,536.79 L703.45,536.61 L704.44,536.35 L705.43,536.75 L706.42,536.43 L707.41,537.17 L708.40,537.49 L709.39,536.48 L710.38,537.47 L711.37,536.37 L712.36,536.99 L713.35,537.46 L714.34,537.22 L715.33,536.71 L716.32,537.10 L717.31,536.98 L718.30,536.84 L719.29,537.44 L720.29,536.59 L721.28,537.12 L722.27,536.59 L723.26,537.38 L724.25,536.79 L725.24,537.01 L726.23,537.09 L727.22,537.53 L728.21,536.94 L729.20,536.59 L730.19,537.43 L731.18,537.04 L732.17,537.54 L733.16,536.41 L734.15,536.44 L735.14,536.77 L736.14,537.00 L737.13,537.47 L738.12,537.41 L739.11,536.74 L740.10,536.64 L741.09,536.41 L742.08,536.56 L743.07,537.05 L744.06,537.26 L745.05,536.93 L746.04,537.16 L747.03,536.93 L748.02,536.54 L749.01,537.03 L750.00,536.42 L750.99,536.73 L751.99,537.50 L752.98,536.69 L753.97,536.79 L754.96,536.84 L755.95,537.55 L756.94,536.54 L757.93,536.98 L758.92,536.94 L759.91,537.36 L760.90,537.51 L761.89,537.54 L762.88,537.31 L763.87,537.20 L764.86,537.38 L765.85,537.49 L766.84,536.72 L767.84,536.74 L768.83,536.54 L769.82,537.30 L770.81,536.71 L771.80,536.87 L772.79,537.45 L773.78,536.55 L774.77,537.14 L775.76,537.34 L776.75,537.34 L777.74,536.49 L778.73,537.30 L779.72,537.11 L780.71,536.92 L781.70,537.14 L782.69,536.80 L783.69,537.45 L784.68,537.06 L785.67,536.88 L786.66,536.84 L787.65,536.85 L788.64,537.24 L789.63,536.82 L790.62,536.43 L791.61,537.00 L792.60,536.81 L793.59,536.59 L794.58,537.26 L795.57,537.25 L796.56,536.44 L797.55,537.21 L798.54,537.06 L799.53,537.13 L800.53,536.41 L801.52,536.93 L802.51,536.52 L803.50,537.37 L804.49,537.23 L805.48,536.81 L806.47,537.19 L807.46,536.79 L808.45,536.97 L809.44,537.46 L810.43,537.43 L811.42,537.05 L812.41,536.94 L813.40,537.35 L814.39,537.25 L815.38,537.55 L816.38,537.25 L817.37,537.20 L818.36,537.11 L819.35,536.87 L820.34,536.57 L821.33,536.73 L822.32,536.70 L823.31,537.23 L824.30,536.98 L825.29,536.72 L826.28,536.52 L827.27,537.28 L828.26,537.54 L829.25,537.50 L830.24,536.96 L831.23,536.55 L832.23,537.38 L833.22,536.65 L834.21,536.82 L835.20,536.56 L836.19,536.52 L837.18,537.43 L838.17,536.64 L839.16,537.40 L840.15,537.42 L841.14,537.09 L842.13,536.99 L843.12,537.47 L844.11,537.24 L845.10,537.35 L846.09,537.40 L847.08,537.44 L848.08,537.53 L849.07,537.30 L850.06,537.18 L851.05,537.07 L852.04,536.75 L853.03,536.85 L854.02,536.99 L855.01,537.18 L856.00,536.98 L856.00,538.90 L261.30,538.90 Z" fill="#7eb26d" fill-opacity="0.1"/>
<path d="M261.30,535.06 L262.29,534.74 L263.28,534.72 L264.27,535.13 L265.26,535.40 L266.25,535.72 L267.24,534.98 L268.23,535.21 L269.22,534.90 L270.22,535.36 L271.21,534.92 L272.20,535.51 L273.19,534.92 L274.18,535.02 L275.17,535.40 L276.16,535.28 L277.15,535.13 L278.14,535.71 L279.13,535.31 L280.12,535.04 L281.11,535.68 L282.10,535.08 L283.09,535.23 L284.08,535.07 L285.07,535.67 L286.07,535.97 L287.06,535.17 L288.05,535.54 L289.05,535.20 L290.05,535.63 L291.05,536.05 L292.05,535.94 L293.05,535.45 L294.05,535.86 L295.05,535.12 L296.05,535.55 L297.05,536.01 L298.05,535.50 L299.05,535.86 L300.05,535.21 L301.05,535.25 L302.06,535.72 L303.06,535.59 L304.06,535.54 L305.06,535.43 L306.06,535.25 L307.06,536.36 L308.06,535.99 L309.06,535.72 L310.06,536.08 L311.06,535.77 L312.06,536.36 L313.06,535.46 L314.06,535.89 L315.06,536.37 L316.06,535.76 L317.06,536.18 L318.07,536.32 L319.07,536.01 L320.07,536.42 L321.07,536.02 L322.17,535.87 L323.27,534.63 L324.37,534.58 L326.02,529.29 L327.26,529.06 L328.50,529.29 L330.15,535.54 L331.15,536.08 L332.14,535.18 L333.14,536.03 L334.14,535.65 L335.14,534.97 L336.13,535.28 L337.13,535.62 L338.13,535.52 L339.13,535.48 L340.12,535.77 L341.12,534.74 L342.12,535.81 L343.12,535.37 L344.11,534.97 L345.11,535.35 L346.11,534.66 L347.11,535.49 L348.10,534.62 L349.10,534.70 L350.10,534.94 L351.10,534.67 L352.09,535.16 L353.09,534.69 L354.09,535.06 L355.09,534.74 L356.08,535.08 L357.08,535.16 L358.08,534.91 L359.08,535.27 L360.08,535.67 L361.08,534.93 L362.07,535.50 L363.07,535.27 L364.07,534.95 L365.07,535.68 L366.07,535.88 L367.07,535.78 L368.06,535.27 L369.06,535.55 L370.06,535.69 L371.06,535.49 L372.06,534.97 L373.06,535.76 L374.05,535.61 L375.05,535.09 L376.05,535.42 L377.05,535.84 L378.05,535.62 L379.05,535.64 L380.04,536.05 L381.04,535.80 L382.04,535.91 L383.04,535.35 L384.04,535.93 L385.03,535.57 L386.03,535.23 L387.03,535.31 L388.03,535.96 L389.03,535.72 L390.03,536.07 L391.02,536.00 L392.02,535.92 L393.02,535.59 L394.02,535.45 L395.02,536.21 L396.02,536.56 L397.01,536.02 L398.67,533.13 L400.32,536.02 L401.33,536.08 L402.35,536.53 L403.36,536.56 L404.38,535.70 L405.40,536.46 L406.41,535.77 L407.43,536.18 L408.44,535.51 L409.46,535.61 L410.48,536.52 L411.49,536.37 L412.51,535.50 L413.52,536.02 L415.18,533.13 L416.83,536.02 L417.82,535.89 L418.81,536.11 L419.80,535.69 L420.79,535.66 L421.78,536.02 L423.43,533.13 L425.08,536.02 L426.11,536.03 L427.15,536.05 L428.18,536.48 L429.21,536.18 L430.24,536.43 L431.27,535.87 L432.31,535.89 L433.34,536.02 L434.99,533.13 L436.64,536.02 L437.69,536.43 L438.74,535.87 L439.79,536.48 L440.84,536.47 L441.89,535.85 L442.94,536.06 L443.99,535.56 L445.04,535.87 L446.09,535.78 L447.15,536.45 L448.20,536.02 L449.85,533.13 L451.50,536.50 L452.49,536.11 L453.48,536.98 L454.47,536.36 L455.46,536.02 L456.45,536.50 L457.28,533.13 L458.10,536.50 L459.10,536.03 L460.09,536.04 L461.09,536.55 L462.08,536.27 L463.08,536.16 L464.07,536.92 L465.07,535.99 L466.06,536.03 L467.06,536.57 L468.05,536.18 L469.05,536.56 L470.04,536.76 L471.04,536.25 L472.03,537.00 L473.03,536.15 L474.02,535.95 L475.01,536.74 L476.01,535.99 L477.00,536.98 L478.00,536.08 L478.99,536.75 L479.99,535.96 L480.98,536.58 L481.98,536.01 L482.97,537.04 L483.97,536.98 L484.96,536.13 L485.96,536.34 L486.95,536.46 L487.95,537.04 L488.94,536.87 L489.94,536.65 L490.93,537.01 L491.93,535.93 L492.92,536.19 L493.92,535.98 L494.91,536.27 L495.91,536.68 L496.90,536.98 L497.90,536.23 L498.89,536.94 L499.89,536.44 L500.88,536.54 L501.88,536.50 L502.87,536.99 L503.87,536.99 L504.86,536.47 L505.86,537.04 L506.85,536.47 L507.84,536.90 L508.84,536.75 L509.83,536.90 L510.83,536.42 L511.82,536.63 L512.82,536.82 L513.81,536.82 L514.81,536.42 L515.80,536.02 L516.80,536.59 L517.79,536.89 L518.79,536.71 L519.78,536.80 L520.78,536.41 L521.77,536.17 L522.77,536.42 L523.76,536.86 L524.76,536.70 L525.75,536.63 L526.75,536.57 L527.74,536.62 L528.74,535.92 L529.73,536.44 L530.73,536.31 L531.72,536.25 L532.72,536.33 L533.71,536.15 L534.71,536.64 L535.70,536.50 L536.69,536.31 L537.68,535.95 L538.67,536.88 L539.66,536.35 L540.65,536.63 L541.64,537.00 L542.64,537.03 L543.63,536.20 L544.62,536.94 L545.61,536.25 L546.60,536.96 L547.59,536.65 L548.58,537.04 L549.57,536.45 L550.56,536.17 L551.55,536.81 L552.54,536.42 L553.53,536.01 L554.52,536.74 L555.51,536.53 L556.50,536.24 L557.49,536.08 L558.48,536.88 L559.48,536.31 L560.47,536.94 L561.46,536.94 L562.45,535.94 L563.44,537.02 L564.43,536.01 L565.42,536.21 L566.41,536.29 L567.40,536.23 L568.39,536.32 L569.38,536.74 L570.37,536.56 L571.36,536.84 L572.35,536.08 L573.34,536.18 L574.33,536.17 L575.33,536.83 L576.32,536.39 L577.31,536.78 L578.30,536.16 L579.29,536.22 L580.28,535.93 L581.27,536.26 L582.26,536.29 L583.25,536.18 L584.24,536.97 L585.23,536.39 L586.22,537.04 L587.21,536.65 L588.20,536.94 L589.19,535.98 L590.18,537.04 L591.18,536.01 L592.17,535.98 L593.16,536.57 L594.15,536.11 L595.14,537.01 L596.13,536.91 L597.12,537.06 L598.11,537.00 L599.10,537.07 L600.09,536.12 L601.08,536.97 L602.07,536.39 L603.06,536.76 L604.05,536.92 L605.04,536.50 L605.87,532.65 L606.69,536.50 L607.75,536.59 L608.80,536.86 L609.85,535.95 L610.90,536.63 L611.95,536.39 L613.00,536.42 L614.05,536.35 L615.10,536.52 L616.15,536.76 L617.20,536.92 L618.25,536.50 L619.08,534.10 L619.90,536.50 L620.92,536.05 L621.94,536.85 L622.95,536.56 L623.97,536.14 L624.98,536.41 L626.00,535.98 L627.02,536.14 L628.03,536.48 L629.05,536.94 L630.06,536.39 L631.08,536.53 L632.10,536.08 L633.11,536.46 L634.13,536.27 L635.14,536.14 L636.16,536.53 L637.18,536.10 L638.19,536.04 L639.21,536.90 L640.22,536.01 L641.24,536.07 L642.26,536.09 L643.27,536.68 L644.29,536.78 L645.30,536.92 L646.32,536.50 L647.15,534.10 L647.97,536.50 L648.96,536.65 L649.95,536.10 L650.94,536.68 L651.93,537.10 L652.92,536.76 L653.91,537.02 L654.90,536.40 L655.90,536.24 L656.89,536.07 L657.88,537.04 L658.87,536.71 L659.86,537.01 L660.85,536.11 L661.84,536.21 L662.83,536.58 L663.82,536.08 L664.81,536.59 L665.80,536.30 L666.79,536.64 L667.78,536.79 L668.77,536.07 L669.76,536.25 L670.75,536.55 L671.75,536.24 L672.74,536.50 L673.73,536.33 L674.72,537.18 L675.71,537.11 L676.70,537.15 L677.69,536.58 L678.68,536.46 L679.67,537.11 L680.66,536.72 L681.65,537.18 L682.64,536.52 L683.63,536.42 L684.62,537.23 L685.61,536.20 L686.60,536.58 L687.60,537.20 L688.59,536.95 L689.58,537.18 L690.57,536.53 L691.56,536.32 L692.55,537.18 L693.54,537.18 L694.53,536.67 L695.52,536.41 L696.51,536.56 L697.50,536.89 L698.49,537.30 L699.48,536.72 L700.47,536.91 L701.46,536.52 L702.45,536.79 L703.45,536.61 L704.44,536.35 L705.43,536.75 L706.42,536.43 L707.41,537.17 L708.40,537.49 L709.39,536.48 L710.38,537.47 L711.37,536.37 L712.36,536.99 L713.35,537.46 L714.34,537.22 L715.33,536.71 L716.32,537.10 L717.31,536.98 L718.30,536.84 L719.29,537.44 L720.29,536.59 L721.28,537.12 L722.27,536.59 L723.26,537.38 L724.25,536.79 L725.24,537.01 L726.23,537.09 L727.22,537.53 L728.21,536.94 L729.20,536.59 L730.19,537.43 L731.18,537.04 L732.17,537.54 L733.16,536.41 L734.15,536.44 L735.14,536.77 L736.14,537.00 L737.13,537.47 L738.12,537.41 L739.11,536.74 L740.10,536.64 L741.09,536.41 L742.08,536.56 L743.07,537.05 L744.06,537.26 L745.05,536.93 L746.04,537.16 L747.03,536.93 L748.02,536.54 L749.01,537.03 L750.00,536.42 L750.99,536.73 L751.99,537.50 L752.98,536.69 L753.97,536.79 L754.96,536.84 L755.95,537.55 L756.94,536.54 L757.93,536.98 L758.92,536.94 L759.91,537.36 L760.90,537.51 L761.89,537.54 L762.88,537.31 L763.87,537.20 L764.86,537.38 L765.85,537.49 L766.84,536.72 L767.84,536.74 L768.83,536.54 L769.82,537.30 L770.81,536.71 L771.80,536.87 L772.79,537.45 L773.78,536.55 L774.77,537.14 L775.76,537.34 L776.75,537.34 L777.74,536.49 L778.73,537.30 L779.72,537.11 L780.71,536.92 L781.70,537.14 L782.69,536.80 L783.69,537.45 L784.68,537.06 L785.67,536.88 L786.66,536.84 L787.65,536.85 L788.64,537.24 L789.63,536.82 L790.62,536.43 L791.61,537.00 L792.60,536.81 L793.59,536.59 L794.58,537.26 L795.57,537.25 L796.56,536.44 L797.55,537.21 L798.54,537.06 L799.53,537.13 L800.53,536.41 L801.52,536.93 L802.51,536.52 L803.50,537.37 L804.49,537.23 L805.48,536.81 L806.47,537.19 L807.46,536.79 L808.45,536.97 L809.44,537.46 L810.43,537.43 L811.42,537.05 L812.41,536.94 L813.40,537.35 L814.39,537.25 L815.38,537.55 L816.38,537.25 L817.37,537.20 L818.36,537.11 L819.35,536.87 L820.34,536.57 L821.33,536.73 L822.32,536.70 L823.31,537.23 L824.30,536.98 L825.29,536.72 L826.28,536.52 L827.27,537.28 L828.26,537.54 L829.25,537.50 L830.24,536.96 L831.23,536.55 L832.23,537.38 L833.22,536.65 L834.21,536.82 L835.20,536.56 L836.19,536.52 L837.18,537.43 L838.17,536.64 L839.16,537.40 L840.15,537.42 L841.14,537.09 L842.13,536.99 L843.12,537.47 L844.11,537.24 L845.10,537.35 L846.09,537.40 L847.08,537.44 L848.08,537.53 L849.07,537.30 L850.06,537.18 L851.05,537.07 L852.04,536.75 L853.03,536.85 L854.02,536.99 L855.01,537.18 L856.00,536.98" fill="none" stroke="#98c28a" stroke-width="1.0" stroke-linejoin="round"/>
<text x="258.60" y="541.50" font-size="7.3" fill="#c4c5c7" stroke="#c4c5c7" stroke-width="0.12" text-anchor="end" textLength="19.36" lengthAdjust="spacingAndGlyphs" >0 kbps</text>
<text x="258.60" y="517.48" font-size="7.3" fill="#c4c5c7" stroke="#c4c5c7" stroke-width="0.12" text-anchor="end" textLength="25.20" lengthAdjust="spacingAndGlyphs" >50 Mbps</text>
<text x="258.60" y="493.45" font-size="7.3" fill="#c4c5c7" stroke="#c4c5c7" stroke-width="0.12" text-anchor="end" textLength="28.85" lengthAdjust="spacingAndGlyphs" >100 Mbps</text>
<text x="258.60" y="469.43" font-size="7.3" fill="#c4c5c7" stroke="#c4c5c7" stroke-width="0.12" text-anchor="end" textLength="28.85" lengthAdjust="spacingAndGlyphs" >150 Mbps</text>
<text x="258.60" y="445.40" font-size="7.3" fill="#c4c5c7" stroke="#c4c5c7" stroke-width="0.12" text-anchor="end" textLength="28.85" lengthAdjust="spacingAndGlyphs" >200 Mbps</text>
<text x="288.05" y="551.00" font-size="7.5" fill="#c4c5c7" stroke="#c4c5c7" stroke-width="0.12" text-anchor="middle" textLength="18.21" lengthAdjust="spacingAndGlyphs" >13:00</text>
<text x="337.58" y="551.00" font-size="7.5" fill="#c4c5c7" stroke="#c4c5c7" stroke-width="0.12" text-anchor="middle" textLength="18.21" lengthAdjust="spacingAndGlyphs" >13:30</text>
<text x="387.11" y="551.00" font-size="7.5" fill="#c4c5c7" stroke="#c4c5c7" stroke-width="0.12" text-anchor="middle" textLength="18.21" lengthAdjust="spacingAndGlyphs" >14:00</text>
<text x="436.64" y="551.00" font-size="7.5" fill="#c4c5c7" stroke="#c4c5c7" stroke-width="0.12" text-anchor="middle" textLength="18.21" lengthAdjust="spacingAndGlyphs" >14:30</text>
<text x="486.17" y="551.00" font-size="7.5" fill="#c4c5c7" stroke="#c4c5c7" stroke-width="0.12" text-anchor="middle" textLength="18.21" lengthAdjust="spacingAndGlyphs" >15:00</text>
<text x="535.70" y="551.00" font-size="7.5" fill="#c4c5c7" stroke="#c4c5c7" stroke-width="0.12" text-anchor="middle" textLength="18.21" lengthAdjust="spacingAndGlyphs" >15:30</text>
<text x="585.23" y="551.00" font-size="7.5" fill="#c4c5c7" stroke="#c4c5c7" stroke-width="0.12" text-anchor="middle" textLength="18.21" lengthAdjust="spacingAndGlyphs" >16:00</text>
<text x="634.76" y="551.00" font-size="7.5" fill="#c4c5c7" stroke="#c4c5c7" stroke-width="0.12" text-anchor="middle" textLength="18.21" lengthAdjust="spacingAndGlyphs" >16:30</text>
<text x="684.29" y="551.00" font-size="7.5" fill="#c4c5c7" stroke="#c4c5c7" stroke-width="0.12" text-anchor="middle" textLength="18.21" lengthAdjust="spacingAndGlyphs" >17:00</text>
<text x="733.82" y="551.00" font-size="7.5" fill="#c4c5c7" stroke="#c4c5c7" stroke-width="0.12" text-anchor="middle" textLength="18.21" lengthAdjust="spacingAndGlyphs" >17:30</text>
<text x="783.35" y="551.00" font-size="7.5" fill="#c4c5c7" stroke="#c4c5c7" stroke-width="0.12" text-anchor="middle" textLength="18.21" lengthAdjust="spacingAndGlyphs" >18:00</text>
<text x="832.89" y="551.00" font-size="7.5" fill="#c4c5c7" stroke="#c4c5c7" stroke-width="0.12" text-anchor="middle" textLength="18.21" lengthAdjust="spacingAndGlyphs" >18:30</text>
<text x="862.50" y="541.50" font-size="7.3" fill="#c4c5c7" stroke="#c4c5c7" stroke-width="0.12" textLength="3.86" lengthAdjust="spacingAndGlyphs" >0</text>
<line x1="856.00" y1="538.90" x2="859.20" y2="538.90" stroke="#424245" stroke-width="1"/>
<text x="862.50" y="525.48" font-size="7.3" fill="#c4c5c7" stroke="#c4c5c7" stroke-width="0.12" textLength="7.71" lengthAdjust="spacingAndGlyphs" >50</text>
<line x1="856.00" y1="522.88" x2="859.20" y2="522.88" stroke="#424245" stroke-width="1"/>
<text x="862.50" y="509.47" font-size="7.3" fill="#c4c5c7" stroke="#c4c5c7" stroke-width="0.12" textLength="11.57" lengthAdjust="spacingAndGlyphs" >100</text>
<line x1="856.00" y1="506.87" x2="859.20" y2="506.87" stroke="#424245" stroke-width="1"/>
<text x="862.50" y="493.45" font-size="7.3" fill="#c4c5c7" stroke="#c4c5c7" stroke-width="0.12" textLength="11.57" lengthAdjust="spacingAndGlyphs" >150</text>
<line x1="856.00" y1="490.85" x2="859.20" y2="490.85" stroke="#424245" stroke-width="1"/>
<text x="862.50" y="477.43" font-size="7.3" fill="#c4c5c7" stroke="#c4c5c7" stroke-width="0.12" textLength="11.57" lengthAdjust="spacingAndGlyphs" >200</text>
<line x1="856.00" y1="474.83" x2="859.20" y2="474.83" stroke="#424245" stroke-width="1"/>
<text x="862.50" y="461.42" font-size="7.3" fill="#c4c5c7" stroke="#c4c5c7" stroke-width="0.12" textLength="11.57" lengthAdjust="spacingAndGlyphs" >250</text>
<line x1="856.00" y1="458.82" x2="859.20" y2="458.82" stroke="#424245" stroke-width="1"/>
<text x="862.50" y="445.40" font-size="7.3" fill="#c4c5c7" stroke="#c4c5c7" stroke-width="0.12" textLength="11.57" lengthAdjust="spacingAndGlyphs" >300</text>
<line x1="856.00" y1="442.80" x2="859.20" y2="442.80" stroke="#424245" stroke-width="1"/>
<text x="0" y="0" font-size="7.4" fill="#c4c5c7" text-anchor="middle" textLength="35.10" lengthAdjust="spacingAndGlyphs" stroke="#c4c5c7" stroke-width="0.2" transform="translate(218.30,495.40) rotate(-90)" dy="2.66">Bandwidth</text>
<text x="0" y="0" font-size="7.4" fill="#c4c5c7" text-anchor="middle" textLength="40.00" lengthAdjust="spacingAndGlyphs" stroke="#c4c5c7" stroke-width="0.2" transform="translate(882.40,495.50) rotate(90)" dy="2.66">Participants</text>
<rect x="216.50" y="567.40" width="667.50" height="16.60" fill="#27272a" />
<rect x="216.50" y="600.20" width="667.50" height="16.40" fill="#27272a" />
<text x="726.40" y="564.20" font-size="7.9" fill="#33b5e5" stroke="#33b5e5" stroke-width="0.3" text-anchor="end" textLength="12.73" lengthAdjust="spacingAndGlyphs" >min</text>
<text x="781.80" y="564.20" font-size="7.9" fill="#33b5e5" stroke="#33b5e5" stroke-width="0.3" text-anchor="end" textLength="14.92" lengthAdjust="spacingAndGlyphs" >max</text>
<text x="832.20" y="564.20" font-size="7.9" fill="#33b5e5" stroke="#33b5e5" stroke-width="0.3" text-anchor="end" textLength="12.74" lengthAdjust="spacingAndGlyphs" >avg</text>
<text x="878.60" y="564.20" font-size="7.9" fill="#33b5e5" stroke="#33b5e5" stroke-width="0.3" text-anchor="end" textLength="24.59" lengthAdjust="spacingAndGlyphs" >current</text>
<text x="726.40" y="578.20" font-size="7.7" fill="#d8d9da" text-anchor="end" textLength="31.25" lengthAdjust="spacingAndGlyphs" >397 kbps</text>
<text x="781.80" y="578.20" font-size="7.7" fill="#d8d9da" text-anchor="end" textLength="35.95" lengthAdjust="spacingAndGlyphs" >23.5 Mbps</text>
<text x="832.20" y="578.20" font-size="7.7" fill="#d8d9da" text-anchor="end" textLength="31.67" lengthAdjust="spacingAndGlyphs" >4.1 Mbps</text>
<text x="878.60" y="578.20" font-size="7.7" fill="#d8d9da" text-anchor="end" textLength="31.25" lengthAdjust="spacingAndGlyphs" >500 kbps</text>
<text x="726.40" y="594.30" font-size="7.7" fill="#d8d9da" text-anchor="end" textLength="31.25" lengthAdjust="spacingAndGlyphs" >755 kbps</text>
<text x="781.80" y="594.30" font-size="7.7" fill="#d8d9da" text-anchor="end" textLength="40.24" lengthAdjust="spacingAndGlyphs" >167.7 Mbps</text>
<text x="832.20" y="594.30" font-size="7.7" fill="#d8d9da" text-anchor="end" textLength="35.95" lengthAdjust="spacingAndGlyphs" >43.2 Mbps</text>
<text x="878.60" y="594.30" font-size="7.7" fill="#d8d9da" text-anchor="end" textLength="31.67" lengthAdjust="spacingAndGlyphs" >7.6 Mbps</text>
<text x="726.40" y="610.80" font-size="7.7" fill="#d8d9da" text-anchor="end" textLength="4.28" lengthAdjust="spacingAndGlyphs" >0</text>
<text x="781.80" y="610.80" font-size="7.7" fill="#d8d9da" text-anchor="end" textLength="12.85" lengthAdjust="spacingAndGlyphs" >285</text>
<text x="832.20" y="610.80" font-size="7.7" fill="#d8d9da" text-anchor="end" textLength="12.85" lengthAdjust="spacingAndGlyphs" >131</text>
<text x="878.60" y="610.80" font-size="7.7" fill="#d8d9da" text-anchor="end" textLength="4.28" lengthAdjust="spacingAndGlyphs" >0</text>
<rect x="222.50" y="574.50" width="8" height="2.2" rx="1" fill="#7eb26d"/>
<text x="234.50" y="578.20" font-size="7.4" fill="#d8d9da" textLength="71.00" lengthAdjust="spacingAndGlyphs" >Bandwidth (received)</text>
<rect x="222.50" y="590.70" width="8" height="2.2" rx="1" fill="#eab839"/>
<text x="234.50" y="594.30" font-size="7.4" fill="#d8d9da" textLength="57.90" lengthAdjust="spacingAndGlyphs" >Bandwidth (sent)</text>
<rect x="222.50" y="607.20" width="8" height="2.2" rx="1" fill="#5794f2"/>
<text x="234.50" y="610.80" font-size="7.4" fill="#d8d9da" textLength="39.80" lengthAdjust="spacingAndGlyphs" >Participants</text>
<text x="277.40" y="610.80" font-size="7.4" fill="#8e8f91" textLength="26.00" lengthAdjust="spacingAndGlyphs" >(right-y)</text>
<text x="1038.30" y="426.60" font-size="9.0" fill="#d8d9da" stroke="#d8d9da" stroke-width="0.32" text-anchor="middle" textLength="71.50" lengthAdjust="spacingAndGlyphs" >Video Participants</text>
<line x1="931.00" y1="570.00" x2="1174.60" y2="570.00" stroke="#424245" stroke-width="1"/>
<line x1="931.00" y1="538.27" x2="1174.60" y2="538.27" stroke="#424245" stroke-width="1"/>
<line x1="931.00" y1="506.55" x2="1174.60" y2="506.55" stroke="#424245" stroke-width="1"/>
<line x1="931.00" y1="474.83" x2="1174.60" y2="474.83" stroke="#424245" stroke-width="1"/>
<line x1="931.00" y1="443.10" x2="1174.60" y2="443.10" stroke="#424245" stroke-width="1"/>
<line x1="941.96" y1="443.10" x2="941.96" y2="570.00" stroke="#424245" stroke-width="1"/>
<line x1="982.53" y1="443.10" x2="982.53" y2="570.00" stroke="#424245" stroke-width="1"/>
<line x1="1023.11" y1="443.10" x2="1023.11" y2="570.00" stroke="#424245" stroke-width="1"/>
<line x1="1063.69" y1="443.10" x2="1063.69" y2="570.00" stroke="#424245" stroke-width="1"/>
<line x1="1104.27" y1="443.10" x2="1104.27" y2="570.00" stroke="#424245" stroke-width="1"/>
<line x1="1144.84" y1="443.10" x2="1144.84" y2="570.00" stroke="#424245" stroke-width="1"/>
<path d="M931.00,538.27 L945.40,538.27 L946.08,570.00 L946.76,570.00 L947.10,538.27 L948.85,538.27 L950.21,570.00 L954.81,570.00 L955.82,538.27 L957.24,538.27 L957.65,474.83 L958.73,474.83 L959.13,538.27 L984.56,538.27 L985.37,570.00 L985.91,570.00 L986.93,538.27 L992.07,538.27 L993.08,506.55 L996.06,506.55 L996.87,538.27 L997.41,506.55 L999.44,506.55 L1000.32,538.27 L1002.01,570.00 L1071.26,570.00 L1072.01,538.27 L1073.56,538.27 L1074.51,570.00 L1108.19,570.00 L1108.86,538.27 L1169.32,538.27 L1170.00,570.00 L1174.60,570.00 L1174.60,570.00 L931.00,570.00 Z" fill="#ff9830" fill-opacity="0.12"/>
<path d="M931.00,538.27 L945.40,538.27 L946.08,570.00 L946.76,570.00 L947.10,538.27 L948.85,538.27 L950.21,570.00 L954.81,570.00 L955.82,538.27 L957.24,538.27 L957.65,474.83 L958.73,474.83 L959.13,538.27 L984.56,538.27 L985.37,570.00 L985.91,570.00 L986.93,538.27 L992.07,538.27 L993.08,506.55 L996.06,506.55 L996.87,538.27 L997.41,506.55 L999.44,506.55 L1000.32,538.27 L1002.01,570.00 L1071.26,570.00 L1072.01,538.27 L1073.56,538.27 L1074.51,570.00 L1108.19,570.00 L1108.86,538.27 L1169.32,538.27 L1170.00,570.00 L1174.60,570.00" fill="none" stroke="#eb9640" stroke-width="1.0" stroke-linejoin="round"/>
<text x="927.90" y="572.60" font-size="7.3" fill="#c4c5c7" stroke="#c4c5c7" stroke-width="0.12" text-anchor="end" textLength="3.65" lengthAdjust="spacingAndGlyphs" >0</text>
<text x="927.90" y="540.88" font-size="7.3" fill="#c4c5c7" stroke="#c4c5c7" stroke-width="0.12" text-anchor="end" textLength="9.13" lengthAdjust="spacingAndGlyphs" >1.0</text>
<text x="927.90" y="509.15" font-size="7.3" fill="#c4c5c7" stroke="#c4c5c7" stroke-width="0.12" text-anchor="end" textLength="9.13" lengthAdjust="spacingAndGlyphs" >2.0</text>
<text x="927.90" y="477.43" font-size="7.3" fill="#c4c5c7" stroke="#c4c5c7" stroke-width="0.12" text-anchor="end" textLength="9.13" lengthAdjust="spacingAndGlyphs" >3.0</text>
<text x="927.90" y="445.70" font-size="7.3" fill="#c4c5c7" stroke="#c4c5c7" stroke-width="0.12" text-anchor="end" textLength="9.13" lengthAdjust="spacingAndGlyphs" >4.0</text>
<text x="941.96" y="582.00" font-size="7.5" fill="#c4c5c7" stroke="#c4c5c7" stroke-width="0.12" text-anchor="middle" textLength="18.21" lengthAdjust="spacingAndGlyphs" >13:00</text>
<text x="982.53" y="582.00" font-size="7.5" fill="#c4c5c7" stroke="#c4c5c7" stroke-width="0.12" text-anchor="middle" textLength="18.21" lengthAdjust="spacingAndGlyphs" >14:00</text>
<text x="1023.11" y="582.00" font-size="7.5" fill="#c4c5c7" stroke="#c4c5c7" stroke-width="0.12" text-anchor="middle" textLength="18.21" lengthAdjust="spacingAndGlyphs" >15:00</text>
<text x="1063.69" y="582.00" font-size="7.5" fill="#c4c5c7" stroke="#c4c5c7" stroke-width="0.12" text-anchor="middle" textLength="18.21" lengthAdjust="spacingAndGlyphs" >16:00</text>
<text x="1104.27" y="582.00" font-size="7.5" fill="#c4c5c7" stroke="#c4c5c7" stroke-width="0.12" text-anchor="middle" textLength="18.21" lengthAdjust="spacingAndGlyphs" >17:00</text>
<text x="1144.84" y="582.00" font-size="7.5" fill="#c4c5c7" stroke="#c4c5c7" stroke-width="0.12" text-anchor="middle" textLength="18.21" lengthAdjust="spacingAndGlyphs" >18:00</text>
<text x="0" y="0" font-size="7.4" fill="#c4c5c7" text-anchor="middle" textLength="41.60" lengthAdjust="spacingAndGlyphs" stroke="#c4c5c7" stroke-width="0.2" transform="translate(909.80,510.60) rotate(-90)" dy="2.66">Participants</text>
<rect x="907.20" y="600.20" width="271.40" height="16.40" fill="#27272a" />
<text x="1075.30" y="596.60" font-size="7.9" fill="#33b5e5" stroke="#33b5e5" stroke-width="0.3" text-anchor="end" textLength="12.73" lengthAdjust="spacingAndGlyphs" >min</text>
<text x="1109.80" y="596.60" font-size="7.9" fill="#33b5e5" stroke="#33b5e5" stroke-width="0.3" text-anchor="end" textLength="14.92" lengthAdjust="spacingAndGlyphs" >max</text>
<text x="1143.60" y="596.60" font-size="7.9" fill="#33b5e5" stroke="#33b5e5" stroke-width="0.3" text-anchor="end" textLength="12.74" lengthAdjust="spacingAndGlyphs" >avg</text>
<text x="1175.40" y="596.60" font-size="7.9" fill="#33b5e5" stroke="#33b5e5" stroke-width="0.3" text-anchor="end" textLength="24.59" lengthAdjust="spacingAndGlyphs" >current</text>
<text x="1075.30" y="611.20" font-size="7.7" fill="#d8d9da" text-anchor="end" textLength="4.28" lengthAdjust="spacingAndGlyphs" >0</text>
<text x="1109.80" y="611.20" font-size="7.7" fill="#d8d9da" text-anchor="end" textLength="19.27" lengthAdjust="spacingAndGlyphs" >3.000</text>
<text x="1143.60" y="611.20" font-size="7.7" fill="#d8d9da" text-anchor="end" textLength="19.27" lengthAdjust="spacingAndGlyphs" >0.543</text>
<text x="1175.40" y="611.20" font-size="7.7" fill="#d8d9da" text-anchor="end" textLength="4.28" lengthAdjust="spacingAndGlyphs" >0</text>
<rect x="913.80" y="607.50" width="8" height="2.2" rx="1" fill="#ff9830"/>
<text x="925.70" y="611.20" font-size="7.4" fill="#d8d9da" textLength="60.10" lengthAdjust="spacingAndGlyphs" >Voice participants</text>
<text x="346.80" y="663.80" font-size="9.0" fill="#d8d9da" stroke="#d8d9da" stroke-width="0.32" text-anchor="middle" textLength="111.50" lengthAdjust="spacingAndGlyphs" >API 95-th Percentile Latency</text>
<line x1="42.30" y1="792.50" x2="415.80" y2="792.50" stroke="#424245" stroke-width="1"/>
<line x1="42.30" y1="769.96" x2="415.80" y2="769.96" stroke="#424245" stroke-width="1"/>
<line x1="42.30" y1="747.42" x2="415.80" y2="747.42" stroke="#424245" stroke-width="1"/>
<line x1="42.30" y1="724.88" x2="415.80" y2="724.88" stroke="#424245" stroke-width="1"/>
<line x1="42.30" y1="702.34" x2="415.80" y2="702.34" stroke="#424245" stroke-width="1"/>
<line x1="42.30" y1="679.80" x2="415.80" y2="679.80" stroke="#424245" stroke-width="1"/>
<line x1="59.10" y1="679.80" x2="59.10" y2="792.50" stroke="#424245" stroke-width="1"/>
<line x1="121.31" y1="679.80" x2="121.31" y2="792.50" stroke="#424245" stroke-width="1"/>
<line x1="183.53" y1="679.80" x2="183.53" y2="792.50" stroke="#424245" stroke-width="1"/>
<line x1="245.74" y1="679.80" x2="245.74" y2="792.50" stroke="#424245" stroke-width="1"/>
<line x1="307.96" y1="679.80" x2="307.96" y2="792.50" stroke="#424245" stroke-width="1"/>
<line x1="370.18" y1="679.80" x2="370.18" y2="792.50" stroke="#424245" stroke-width="1"/>
<defs><linearGradient id="bandg" x1="0" y1="0" x2="0" y2="1"><stop offset="0" stop-color="#8e8a78"/><stop offset="0.35" stop-color="#8c7668"/><stop offset="1" stop-color="#855a52"/></linearGradient></defs>
<path d="M42.30,787.99 L43.87,788.09 L45.45,788.18 L47.02,787.91 L48.59,788.22 L50.17,787.97 L51.74,788.06 L53.31,788.23 L54.89,787.99 L56.46,788.24 L58.03,788.03 L59.60,788.22 L61.18,788.21 L62.75,788.03 L64.32,787.82 L65.90,788.20 L67.47,788.14 L69.04,787.92 L70.62,787.75 L72.19,787.95 L73.76,788.05 L75.34,787.73 L76.91,788.24 L78.48,787.80 L80.06,788.11 L81.63,788.18 L83.20,788.20 L84.78,788.10 L86.35,787.82 L87.92,788.16 L89.49,787.95 L91.07,787.92 L92.64,788.06 L94.21,787.97 L95.79,788.23 L97.36,788.23 L98.93,788.15 L100.51,787.89 L102.08,788.03 L103.65,788.09 L105.23,787.95 L106.80,788.02 L108.37,788.10 L109.95,787.83 L111.52,787.88 L113.09,788.13 L114.67,787.95 L116.24,787.98 L117.81,787.79 L119.38,787.87 L120.96,788.11 L122.53,787.73 L124.10,788.20 L125.68,788.04 L127.25,787.85 L128.82,788.18 L130.40,788.00 L131.97,788.24 L133.54,787.90 L135.12,787.85 L136.69,787.95 L138.26,787.79 L139.84,788.09 L141.41,787.89 L142.98,787.94 L144.56,787.95 L146.13,788.02 L147.70,787.81 L149.27,787.75 L150.85,788.01 L152.42,787.99 L154.50,788.44 L156.57,787.99 L158.13,787.90 L159.69,788.23 L161.25,787.88 L162.81,787.91 L164.37,787.73 L165.93,787.82 L167.49,788.11 L169.05,788.05 L170.62,787.90 L172.18,788.25 L173.74,788.01 L175.30,788.17 L176.86,788.20 L178.42,788.23 L179.98,787.85 L181.54,788.19 L183.10,788.13 L184.66,788.05 L186.22,787.79 L187.78,788.22 L189.34,788.02 L190.91,787.97 L192.47,787.78 L194.03,787.82 L195.59,787.80 L197.15,788.11 L198.71,788.04 L200.27,788.07 L201.83,787.78 L203.39,787.74 L204.95,788.18 L206.51,788.17 L208.07,788.14 L209.63,788.14 L211.19,788.00 L212.76,787.94 L214.32,788.12 L215.88,788.26 L217.44,788.04 L219.00,788.06 L220.56,787.96 L222.12,787.75 L223.68,787.89 L225.24,787.98 L226.80,787.93 L228.36,787.90 L229.92,788.23 L231.48,787.78 L233.04,787.84 L234.61,787.79 L236.17,787.83 L237.73,788.05 L239.29,788.05 L240.85,788.21 L242.41,787.92 L243.97,788.23 L245.53,788.23 L247.09,788.15 L248.65,788.17 L250.21,788.08 L251.77,788.23 L253.33,788.26 L254.90,788.18 L256.46,788.21 L258.02,788.07 L259.58,788.25 L261.14,787.79 L262.70,787.93 L264.26,788.18 L265.82,788.13 L267.38,788.07 L268.94,788.07 L270.50,788.20 L272.06,787.80 L273.62,787.73 L275.18,788.01 L276.75,788.00 L278.31,788.22 L279.87,788.21 L281.43,788.08 L282.99,788.12 L284.55,787.81 L286.11,788.18 L287.67,788.25 L289.23,787.75 L290.79,787.98 L292.35,788.18 L293.91,787.97 L295.47,788.25 L297.03,787.98 L298.60,787.73 L300.16,787.80 L301.72,787.89 L303.28,788.12 L304.84,788.06 L306.40,788.17 L307.96,787.99 L309.52,787.84 L311.09,787.97 L312.65,787.84 L314.21,788.08 L315.78,788.14 L317.34,787.82 L318.90,787.73 L320.47,787.80 L322.03,787.83 L323.59,787.82 L325.16,787.86 L326.72,788.14 L328.28,787.98 L329.85,788.07 L331.41,788.25 L332.97,788.25 L334.54,788.11 L336.10,788.12 L337.66,787.89 L339.23,787.75 L340.79,788.02 L342.35,787.76 L343.92,787.73 L345.48,787.75 L347.04,788.07 L348.61,788.14 L350.17,788.14 L351.73,788.16 L353.30,788.15 L354.86,787.92 L356.42,787.78 L357.99,787.81 L359.55,788.00 L361.11,787.91 L362.68,787.83 L364.24,788.22 L365.80,787.91 L367.37,787.77 L368.93,787.84 L370.49,787.86 L372.06,788.00 L373.62,788.17 L375.18,787.84 L376.75,788.08 L378.31,787.83 L379.87,787.74 L381.44,788.05 L383.00,788.05 L384.56,787.75 L386.13,787.87 L387.69,788.17 L389.25,788.19 L390.82,788.18 L392.38,787.77 L393.94,787.83 L395.51,788.18 L397.07,787.82 L398.63,787.73 L400.20,787.91 L401.76,788.07 L403.33,787.97 L404.89,788.19 L406.45,788.25 L408.02,787.74 L409.58,787.99 L411.13,787.46 L412.69,787.09 L415.28,785.29 L415.80,785.74 L415.80,792.50 L42.30,792.50 Z" fill="url(#bandg)"/>
<path d="M42.30,787.99 L43.87,788.09 L45.45,788.18 L47.02,787.91 L48.59,788.22 L50.17,787.97 L51.74,788.06 L53.31,788.23 L54.89,787.99 L56.46,788.24 L58.03,788.03 L59.60,788.22 L61.18,788.21 L62.75,788.03 L64.32,787.82 L65.90,788.20 L67.47,788.14 L69.04,787.92 L70.62,787.75 L72.19,787.95 L73.76,788.05 L75.34,787.73 L76.91,788.24 L78.48,787.80 L80.06,788.11 L81.63,788.18 L83.20,788.20 L84.78,788.10 L86.35,787.82 L87.92,788.16 L89.49,787.95 L91.07,787.92 L92.64,788.06 L94.21,787.97 L95.79,788.23 L97.36,788.23 L98.93,788.15 L100.51,787.89 L102.08,788.03 L103.65,788.09 L105.23,787.95 L106.80,788.02 L108.37,788.10 L109.95,787.83 L111.52,787.88 L113.09,788.13 L114.67,787.95 L116.24,787.98 L117.81,787.79 L119.38,787.87 L120.96,788.11 L122.53,787.73 L124.10,788.20 L125.68,788.04 L127.25,787.85 L128.82,788.18 L130.40,788.00 L131.97,788.24 L133.54,787.90 L135.12,787.85 L136.69,787.95 L138.26,787.79 L139.84,788.09 L141.41,787.89 L142.98,787.94 L144.56,787.95 L146.13,788.02 L147.70,787.81 L149.27,787.75 L150.85,788.01 L152.42,787.99 L154.50,788.44 L156.57,787.99 L158.13,787.90 L159.69,788.23 L161.25,787.88 L162.81,787.91 L164.37,787.73 L165.93,787.82 L167.49,788.11 L169.05,788.05 L170.62,787.90 L172.18,788.25 L173.74,788.01 L175.30,788.17 L176.86,788.20 L178.42,788.23 L179.98,787.85 L181.54,788.19 L183.10,788.13 L184.66,788.05 L186.22,787.79 L187.78,788.22 L189.34,788.02 L190.91,787.97 L192.47,787.78 L194.03,787.82 L195.59,787.80 L197.15,788.11 L198.71,788.04 L200.27,788.07 L201.83,787.78 L203.39,787.74 L204.95,788.18 L206.51,788.17 L208.07,788.14 L209.63,788.14 L211.19,788.00 L212.76,787.94 L214.32,788.12 L215.88,788.26 L217.44,788.04 L219.00,788.06 L220.56,787.96 L222.12,787.75 L223.68,787.89 L225.24,787.98 L226.80,787.93 L228.36,787.90 L229.92,788.23 L231.48,787.78 L233.04,787.84 L234.61,787.79 L236.17,787.83 L237.73,788.05 L239.29,788.05 L240.85,788.21 L242.41,787.92 L243.97,788.23 L245.53,788.23 L247.09,788.15 L248.65,788.17 L250.21,788.08 L251.77,788.23 L253.33,788.26 L254.90,788.18 L256.46,788.21 L258.02,788.07 L259.58,788.25 L261.14,787.79 L262.70,787.93 L264.26,788.18 L265.82,788.13 L267.38,788.07 L268.94,788.07 L270.50,788.20 L272.06,787.80 L273.62,787.73 L275.18,788.01 L276.75,788.00 L278.31,788.22 L279.87,788.21 L281.43,788.08 L282.99,788.12 L284.55,787.81 L286.11,788.18 L287.67,788.25 L289.23,787.75 L290.79,787.98 L292.35,788.18 L293.91,787.97 L295.47,788.25 L297.03,787.98 L298.60,787.73 L300.16,787.80 L301.72,787.89 L303.28,788.12 L304.84,788.06 L306.40,788.17 L307.96,787.99 L309.52,787.84 L311.09,787.97 L312.65,787.84 L314.21,788.08 L315.78,788.14 L317.34,787.82 L318.90,787.73 L320.47,787.80 L322.03,787.83 L323.59,787.82 L325.16,787.86 L326.72,788.14 L328.28,787.98 L329.85,788.07 L331.41,788.25 L332.97,788.25 L334.54,788.11 L336.10,788.12 L337.66,787.89 L339.23,787.75 L340.79,788.02 L342.35,787.76 L343.92,787.73 L345.48,787.75 L347.04,788.07 L348.61,788.14 L350.17,788.14 L351.73,788.16 L353.30,788.15 L354.86,787.92 L356.42,787.78 L357.99,787.81 L359.55,788.00 L361.11,787.91 L362.68,787.83 L364.24,788.22 L365.80,787.91 L367.37,787.77 L368.93,787.84 L370.49,787.86 L372.06,788.00 L373.62,788.17 L375.18,787.84 L376.75,788.08 L378.31,787.83 L379.87,787.74 L381.44,788.05 L383.00,788.05 L384.56,787.75 L386.13,787.87 L387.69,788.17 L389.25,788.19 L390.82,788.18 L392.38,787.77 L393.94,787.83 L395.51,788.18 L397.07,787.82 L398.63,787.73 L400.20,787.91 L401.76,788.07 L403.33,787.97 L404.89,788.19 L406.45,788.25 L408.02,787.74 L409.58,787.99 L411.13,787.46 L412.69,787.09 L415.28,785.29 L415.80,785.74" fill="none" stroke="#a39f8c" stroke-width="1.0" stroke-linejoin="round"/>
<path d="M42.30,712.26 L43.96,712.75 L45.62,713.16 L47.33,710.63 L49.04,708.20 L51.84,706.85 L53.81,705.79 L55.78,705.50 L57.44,705.62 L59.10,705.67 L60.76,705.69 L62.42,706.14 L64.08,705.95 L66.67,713.16 L68.24,713.15 L69.80,713.04 L71.37,712.90 L72.94,713.53 L74.51,713.34 L76.08,713.53 L77.65,712.88 L79.21,713.16 L80.87,709.15 L82.53,705.50 L84.45,705.80 L86.37,704.84 L88.29,704.74 L90.21,705.04 L91.93,704.76 L93.66,704.64 L95.39,704.59 L97.26,704.45 L99.12,704.13 L100.99,703.24 L102.65,703.22 L104.31,703.24 L106.07,714.51 L107.64,714.91 L109.21,714.79 L110.78,714.74 L112.36,714.94 L113.93,714.54 L115.50,714.57 L117.07,714.20 L118.64,714.49 L120.21,714.39 L121.78,714.51 L123.36,714.37 L124.93,714.55 L126.50,714.51 L128.08,714.71 L129.65,714.06 L131.23,714.06 L132.81,714.20 L134.39,714.32 L135.97,714.68 L137.54,714.76 L139.12,714.70 L140.70,714.90 L142.28,714.27 L143.86,714.60 L145.43,714.20 L147.01,714.61 L148.59,714.10 L150.17,714.20 L151.75,714.96 L153.32,714.77 L154.90,714.14 L156.48,714.54 L158.06,714.08 L159.63,714.60 L161.21,714.90 L162.79,714.51 L164.35,714.44 L165.90,714.35 L167.46,714.85 L169.01,715.06 L170.57,714.89 L172.12,714.36 L173.68,714.59 L175.23,715.22 L176.79,715.15 L178.34,715.32 L179.90,715.40 L181.46,714.78 L183.01,715.39 L184.57,715.09 L186.12,715.24 L187.68,715.51 L189.23,715.07 L190.79,715.66 L192.34,715.24 L193.90,715.41 L195.48,715.76 L197.06,715.48 L198.64,715.67 L200.22,715.62 L201.80,714.99 L203.38,715.14 L204.96,715.59 L206.54,715.07 L208.12,715.67 L209.70,715.51 L211.28,715.09 L212.86,715.29 L214.44,715.77 L216.02,714.97 L217.60,715.67 L219.18,715.63 L220.76,715.17 L222.34,715.57 L223.92,715.60 L225.50,715.80 L227.08,715.41 L228.64,715.75 L230.19,715.26 L231.75,715.53 L233.30,715.17 L234.86,715.34 L236.41,715.23 L237.97,714.74 L239.52,715.13 L241.08,715.01 L242.63,714.71 L244.19,715.29 L245.74,714.96 L247.34,715.24 L248.94,714.52 L250.53,714.57 L252.13,715.05 L253.72,715.07 L255.32,714.54 L256.91,714.32 L258.51,714.96 L260.10,714.24 L261.70,714.27 L263.29,714.49 L264.89,714.62 L266.48,714.51 L268.08,714.87 L269.67,714.93 L271.27,714.09 L272.86,714.75 L274.46,714.33 L276.05,714.73 L277.65,714.22 L279.25,714.42 L280.84,714.70 L282.44,714.80 L284.03,714.31 L285.63,714.90 L287.22,714.76 L288.82,714.46 L290.41,714.19 L292.01,714.41 L293.60,714.71 L295.20,714.14 L296.79,714.78 L298.39,714.95 L299.98,714.72 L301.58,714.56 L303.17,714.91 L304.77,714.80 L306.36,714.63 L307.96,714.51 L309.52,714.58 L311.07,715.11 L312.63,715.04 L314.18,714.70 L315.74,714.75 L317.29,715.18 L318.85,715.29 L320.40,715.52 L321.96,716.05 L323.51,715.86 L325.24,715.83 L326.97,715.40 L328.70,714.51 L330.43,714.37 L332.15,714.78 L333.88,714.77 L335.61,715.84 L337.34,715.52 L339.07,715.86 L340.80,715.88 L342.52,715.66 L344.25,716.03 L345.98,715.41 L347.71,716.25 L349.44,715.86 L351.25,716.05 L353.07,716.10 L354.88,716.18 L356.70,716.77 L359.29,714.06 L361.88,719.02 L363.54,716.78 L365.20,714.96 L366.96,714.78 L368.72,714.70 L370.49,714.59 L372.25,714.96 L373.80,714.19 L375.36,712.99 L376.92,712.26 L378.57,714.15 L380.23,716.77 L381.92,716.77 L383.60,717.52 L385.29,717.52 L386.97,718.12 L388.68,718.47 L390.40,719.47 L391.12,722.63 L393.61,719.02 L395.27,714.96 L396.95,714.90 L398.63,714.85 L400.31,715.07 L401.99,714.89 L403.67,714.96 L405.33,715.92 L406.99,717.44 L408.65,718.12 L410.30,716.64 L411.96,714.97 L413.62,713.72 L415.28,712.71 L415.80,712.26 L415.80,792.50 L42.30,792.50 Z" fill="#ef843c" fill-opacity="0.1"/>
<path d="M42.30,712.26 L43.96,712.75 L45.62,713.16 L47.33,710.63 L49.04,708.20 L51.84,706.85 L53.81,705.79 L55.78,705.50 L57.44,705.62 L59.10,705.67 L60.76,705.69 L62.42,706.14 L64.08,705.95 L66.67,713.16 L68.24,713.15 L69.80,713.04 L71.37,712.90 L72.94,713.53 L74.51,713.34 L76.08,713.53 L77.65,712.88 L79.21,713.16 L80.87,709.15 L82.53,705.50 L84.45,705.80 L86.37,704.84 L88.29,704.74 L90.21,705.04 L91.93,704.76 L93.66,704.64 L95.39,704.59 L97.26,704.45 L99.12,704.13 L100.99,703.24 L102.65,703.22 L104.31,703.24 L106.07,714.51 L107.64,714.91 L109.21,714.79 L110.78,714.74 L112.36,714.94 L113.93,714.54 L115.50,714.57 L117.07,714.20 L118.64,714.49 L120.21,714.39 L121.78,714.51 L123.36,714.37 L124.93,714.55 L126.50,714.51 L128.08,714.71 L129.65,714.06 L131.23,714.06 L132.81,714.20 L134.39,714.32 L135.97,714.68 L137.54,714.76 L139.12,714.70 L140.70,714.90 L142.28,714.27 L143.86,714.60 L145.43,714.20 L147.01,714.61 L148.59,714.10 L150.17,714.20 L151.75,714.96 L153.32,714.77 L154.90,714.14 L156.48,714.54 L158.06,714.08 L159.63,714.60 L161.21,714.90 L162.79,714.51 L164.35,714.44 L165.90,714.35 L167.46,714.85 L169.01,715.06 L170.57,714.89 L172.12,714.36 L173.68,714.59 L175.23,715.22 L176.79,715.15 L178.34,715.32 L179.90,715.40 L181.46,714.78 L183.01,715.39 L184.57,715.09 L186.12,715.24 L187.68,715.51 L189.23,715.07 L190.79,715.66 L192.34,715.24 L193.90,715.41 L195.48,715.76 L197.06,715.48 L198.64,715.67 L200.22,715.62 L201.80,714.99 L203.38,715.14 L204.96,715.59 L206.54,715.07 L208.12,715.67 L209.70,715.51 L211.28,715.09 L212.86,715.29 L214.44,715.77 L216.02,714.97 L217.60,715.67 L219.18,715.63 L220.76,715.17 L222.34,715.57 L223.92,715.60 L225.50,715.80 L227.08,715.41 L228.64,715.75 L230.19,715.26 L231.75,715.53 L233.30,715.17 L234.86,715.34 L236.41,715.23 L237.97,714.74 L239.52,715.13 L241.08,715.01 L242.63,714.71 L244.19,715.29 L245.74,714.96 L247.34,715.24 L248.94,714.52 L250.53,714.57 L252.13,715.05 L253.72,715.07 L255.32,714.54 L256.91,714.32 L258.51,714.96 L260.10,714.24 L261.70,714.27 L263.29,714.49 L264.89,714.62 L266.48,714.51 L268.08,714.87 L269.67,714.93 L271.27,714.09 L272.86,714.75 L274.46,714.33 L276.05,714.73 L277.65,714.22 L279.25,714.42 L280.84,714.70 L282.44,714.80 L284.03,714.31 L285.63,714.90 L287.22,714.76 L288.82,714.46 L290.41,714.19 L292.01,714.41 L293.60,714.71 L295.20,714.14 L296.79,714.78 L298.39,714.95 L299.98,714.72 L301.58,714.56 L303.17,714.91 L304.77,714.80 L306.36,714.63 L307.96,714.51 L309.52,714.58 L311.07,715.11 L312.63,715.04 L314.18,714.70 L315.74,714.75 L317.29,715.18 L318.85,715.29 L320.40,715.52 L321.96,716.05 L323.51,715.86 L325.24,715.83 L326.97,715.40 L328.70,714.51 L330.43,714.37 L332.15,714.78 L333.88,714.77 L335.61,715.84 L337.34,715.52 L339.07,715.86 L340.80,715.88 L342.52,715.66 L344.25,716.03 L345.98,715.41 L347.71,716.25 L349.44,715.86 L351.25,716.05 L353.07,716.10 L354.88,716.18 L356.70,716.77 L359.29,714.06 L361.88,719.02 L363.54,716.78 L365.20,714.96 L366.96,714.78 L368.72,714.70 L370.49,714.59 L372.25,714.96 L373.80,714.19 L375.36,712.99 L376.92,712.26 L378.57,714.15 L380.23,716.77 L381.92,716.77 L383.60,717.52 L385.29,717.52 L386.97,718.12 L388.68,718.47 L390.40,719.47 L391.12,722.63 L393.61,719.02 L395.27,714.96 L396.95,714.90 L398.63,714.85 L400.31,715.07 L401.99,714.89 L403.67,714.96 L405.33,715.92 L406.99,717.44 L408.65,718.12 L410.30,716.64 L411.96,714.97 L413.62,713.72 L415.28,712.71 L415.80,712.26" fill="none" stroke="#e48848" stroke-width="1.0" stroke-linejoin="round"/>
<path d="M42.30,715.86 L43.88,715.88 L45.46,715.78 L47.04,715.77 L48.63,716.06 L50.21,716.13 L51.79,715.93 L53.37,715.99 L54.95,715.86 L57.02,716.77 L59.10,715.70 L61.17,714.96 L62.90,715.16 L64.63,715.51 L66.36,715.86 L68.33,723.08 L69.93,721.69 L71.54,720.37 L73.10,720.28 L74.65,720.37 L76.73,724.88 L78.28,725.07 L79.84,724.88 L81.70,715.86 L83.98,714.96 L85.57,715.05 L87.16,715.26 L88.75,714.91 L90.34,715.43 L91.92,715.07 L93.51,715.53 L95.10,715.26 L96.69,715.50 L98.27,715.52 L99.86,715.34 L101.45,715.84 L103.04,715.88 L104.63,715.47 L106.21,715.75 L107.80,716.03 L109.39,715.86 L111.51,720.11 L113.64,724.88 L115.30,721.71 L116.96,719.02 L119.45,716.77 L121.11,717.73 L122.77,718.31 L124.42,719.02 L125.98,719.89 L127.54,720.37 L129.51,724.88 L131.14,724.98 L132.78,724.81 L134.42,725.06 L136.05,724.77 L137.69,725.12 L139.33,725.06 L140.96,724.71 L142.60,724.93 L144.24,724.92 L145.87,724.83 L147.51,724.89 L149.15,724.94 L150.78,725.13 L152.42,724.88 L154.15,724.46 L155.88,724.03 L157.61,723.98 L159.16,724.17 L160.72,724.88 L162.27,724.82 L163.83,725.02 L165.38,725.05 L166.94,724.91 L168.49,724.95 L170.05,725.28 L171.60,725.25 L173.16,725.21 L174.72,725.16 L176.27,725.03 L177.83,725.23 L179.38,725.52 L180.94,725.12 L182.49,725.37 L184.05,725.35 L185.60,725.55 L187.16,725.47 L188.71,725.52 L190.27,725.34 L191.82,725.74 L193.38,725.53 L194.94,725.76 L196.49,725.51 L198.05,725.90 L199.60,725.81 L201.16,725.80 L202.71,725.68 L204.27,725.78 L205.85,725.98 L207.43,725.72 L209.01,725.81 L210.59,725.73 L212.17,725.58 L213.75,725.28 L215.33,725.49 L216.91,725.19 L218.49,725.58 L220.07,725.12 L221.65,725.38 L223.23,725.43 L224.81,725.09 L226.39,724.96 L227.97,725.40 L229.55,725.22 L231.13,724.91 L232.71,725.09 L234.29,725.11 L235.87,725.19 L237.45,724.88 L239.00,725.58 L240.56,725.78 L242.18,725.72 L243.80,725.52 L245.42,725.51 L247.04,725.78 L248.66,726.04 L250.28,725.88 L251.90,725.63 L253.52,725.60 L255.14,725.71 L256.76,725.93 L258.38,725.77 L260.00,725.79 L261.62,725.71 L263.24,725.91 L264.86,725.54 L266.48,725.78 L268.04,725.57 L269.59,725.96 L271.15,725.89 L272.70,725.58 L274.26,725.90 L275.82,725.54 L277.37,725.77 L278.93,725.68 L280.48,725.67 L282.04,725.94 L283.59,725.90 L285.15,725.91 L286.70,725.68 L288.26,725.68 L289.81,725.98 L291.37,725.57 L292.92,725.82 L294.48,725.92 L296.04,725.82 L297.59,725.78 L299.15,724.62 L300.70,723.98 L302.26,724.85 L303.81,725.78 L305.39,725.69 L306.97,725.51 L308.55,725.47 L310.13,725.55 L311.71,725.72 L313.29,725.60 L314.87,725.41 L316.45,725.45 L318.03,725.55 L319.61,725.65 L321.19,725.62 L322.77,725.40 L324.35,725.47 L325.93,725.74 L327.51,725.35 L329.09,725.22 L330.67,725.26 L332.25,725.18 L333.83,725.15 L335.41,725.33 L336.99,725.33 L339.07,723.98 L341.14,725.33 L342.71,725.21 L344.29,725.46 L345.86,725.64 L347.43,725.53 L349.01,725.59 L350.58,725.28 L352.15,725.45 L353.73,725.56 L355.30,725.54 L356.87,725.84 L358.45,725.65 L360.02,725.60 L361.59,725.79 L363.17,725.90 L364.74,725.85 L366.31,725.92 L367.89,725.76 L369.46,726.08 L371.03,726.14 L372.61,726.05 L374.18,725.88 L375.75,725.87 L377.33,725.96 L378.90,725.84 L380.47,726.18 L382.05,726.39 L383.62,726.18 L385.19,726.23 L386.77,726.23 L388.44,726.36 L390.12,726.06 L391.80,726.20 L393.48,726.21 L395.16,726.12 L396.83,725.75 L398.51,726.21 L400.19,725.98 L401.87,725.98 L403.55,725.98 L405.22,725.78 L406.90,726.54 L408.58,727.38 L410.26,727.72 L411.94,728.67 L413.62,729.39 L415.80,727.13 L415.80,792.50 L42.30,792.50 Z" fill="#b877d9" fill-opacity="0.1"/>
<path d="M42.30,715.86 L43.88,715.88 L45.46,715.78 L47.04,715.77 L48.63,716.06 L50.21,716.13 L51.79,715.93 L53.37,715.99 L54.95,715.86 L57.02,716.77 L59.10,715.70 L61.17,714.96 L62.90,715.16 L64.63,715.51 L66.36,715.86 L68.33,723.08 L69.93,721.69 L71.54,720.37 L73.10,720.28 L74.65,720.37 L76.73,724.88 L78.28,725.07 L79.84,724.88 L81.70,715.86 L83.98,714.96 L85.57,715.05 L87.16,715.26 L88.75,714.91 L90.34,715.43 L91.92,715.07 L93.51,715.53 L95.10,715.26 L96.69,715.50 L98.27,715.52 L99.86,715.34 L101.45,715.84 L103.04,715.88 L104.63,715.47 L106.21,715.75 L107.80,716.03 L109.39,715.86 L111.51,720.11 L113.64,724.88 L115.30,721.71 L116.96,719.02 L119.45,716.77 L121.11,717.73 L122.77,718.31 L124.42,719.02 L125.98,719.89 L127.54,720.37 L129.51,724.88 L131.14,724.98 L132.78,724.81 L134.42,725.06 L136.05,724.77 L137.69,725.12 L139.33,725.06 L140.96,724.71 L142.60,724.93 L144.24,724.92 L145.87,724.83 L147.51,724.89 L149.15,724.94 L150.78,725.13 L152.42,724.88 L154.15,724.46 L155.88,724.03 L157.61,723.98 L159.16,724.17 L160.72,724.88 L162.27,724.82 L163.83,725.02 L165.38,725.05 L166.94,724.91 L168.49,724.95 L170.05,725.28 L171.60,725.25 L173.16,725.21 L174.72,725.16 L176.27,725.03 L177.83,725.23 L179.38,725.52 L180.94,725.12 L182.49,725.37 L184.05,725.35 L185.60,725.55 L187.16,725.47 L188.71,725.52 L190.27,725.34 L191.82,725.74 L193.38,725.53 L194.94,725.76 L196.49,725.51 L198.05,725.90 L199.60,725.81 L201.16,725.80 L202.71,725.68 L204.27,725.78 L205.85,725.98 L207.43,725.72 L209.01,725.81 L210.59,725.73 L212.17,725.58 L213.75,725.28 L215.33,725.49 L216.91,725.19 L218.49,725.58 L220.07,725.12 L221.65,725.38 L223.23,725.43 L224.81,725.09 L226.39,724.96 L227.97,725.40 L229.55,725.22 L231.13,724.91 L232.71,725.09 L234.29,725.11 L235.87,725.19 L237.45,724.88 L239.00,725.58 L240.56,725.78 L242.18,725.72 L243.80,725.52 L245.42,725.51 L247.04,725.78 L248.66,726.04 L250.28,725.88 L251.90,725.63 L253.52,725.60 L255.14,725.71 L256.76,725.93 L258.38,725.77 L260.00,725.79 L261.62,725.71 L263.24,725.91 L264.86,725.54 L266.48,725.78 L268.04,725.57 L269.59,725.96 L271.15,725.89 L272.70,725.58 L274.26,725.90 L275.82,725.54 L277.37,725.77 L278.93,725.68 L280.48,725.67 L282.04,725.94 L283.59,725.90 L285.15,725.91 L286.70,725.68 L288.26,725.68 L289.81,725.98 L291.37,725.57 L292.92,725.82 L294.48,725.92 L296.04,725.82 L297.59,725.78 L299.15,724.62 L300.70,723.98 L302.26,724.85 L303.81,725.78 L305.39,725.69 L306.97,725.51 L308.55,725.47 L310.13,725.55 L311.71,725.72 L313.29,725.60 L314.87,725.41 L316.45,725.45 L318.03,725.55 L319.61,725.65 L321.19,725.62 L322.77,725.40 L324.35,725.47 L325.93,725.74 L327.51,725.35 L329.09,725.22 L330.67,725.26 L332.25,725.18 L333.83,725.15 L335.41,725.33 L336.99,725.33 L339.07,723.98 L341.14,725.33 L342.71,725.21 L344.29,725.46 L345.86,725.64 L347.43,725.53 L349.01,725.59 L350.58,725.28 L352.15,725.45 L353.73,725.56 L355.30,725.54 L356.87,725.84 L358.45,725.65 L360.02,725.60 L361.59,725.79 L363.17,725.90 L364.74,725.85 L366.31,725.92 L367.89,725.76 L369.46,726.08 L371.03,726.14 L372.61,726.05 L374.18,725.88 L375.75,725.87 L377.33,725.96 L378.90,725.84 L380.47,726.18 L382.05,726.39 L383.62,726.18 L385.19,726.23 L386.77,726.23 L388.44,726.36 L390.12,726.06 L391.80,726.20 L393.48,726.21 L395.16,726.12 L396.83,725.75 L398.51,726.21 L400.19,725.98 L401.87,725.98 L403.55,725.98 L405.22,725.78 L406.90,726.54 L408.58,727.38 L410.26,727.72 L411.94,728.67 L413.62,729.39 L415.80,727.13" fill="none" stroke="#b088d0" stroke-width="1.0" stroke-linejoin="round"/>
<text x="38.90" y="795.10" font-size="7.3" fill="#c4c5c7" stroke="#c4c5c7" stroke-width="0.12" text-anchor="end" textLength="3.65" lengthAdjust="spacingAndGlyphs" >0</text>
<text x="38.90" y="772.56" font-size="7.3" fill="#c4c5c7" stroke="#c4c5c7" stroke-width="0.12" text-anchor="end" textLength="9.13" lengthAdjust="spacingAndGlyphs" >0.5</text>
<text x="38.90" y="750.02" font-size="7.3" fill="#c4c5c7" stroke="#c4c5c7" stroke-width="0.12" text-anchor="end" textLength="9.13" lengthAdjust="spacingAndGlyphs" >1.0</text>
<text x="38.90" y="727.48" font-size="7.3" fill="#c4c5c7" stroke="#c4c5c7" stroke-width="0.12" text-anchor="end" textLength="9.13" lengthAdjust="spacingAndGlyphs" >1.5</text>
<text x="38.90" y="704.94" font-size="7.3" fill="#c4c5c7" stroke="#c4c5c7" stroke-width="0.12" text-anchor="end" textLength="9.13" lengthAdjust="spacingAndGlyphs" >2.0</text>
<text x="38.90" y="682.40" font-size="7.3" fill="#c4c5c7" stroke="#c4c5c7" stroke-width="0.12" text-anchor="end" textLength="9.13" lengthAdjust="spacingAndGlyphs" >2.5</text>
<text x="59.10" y="804.60" font-size="7.5" fill="#c4c5c7" stroke="#c4c5c7" stroke-width="0.12" text-anchor="middle" textLength="18.21" lengthAdjust="spacingAndGlyphs" >13:00</text>
<text x="121.31" y="804.60" font-size="7.5" fill="#c4c5c7" stroke="#c4c5c7" stroke-width="0.12" text-anchor="middle" textLength="18.21" lengthAdjust="spacingAndGlyphs" >14:00</text>
<text x="183.53" y="804.60" font-size="7.5" fill="#c4c5c7" stroke="#c4c5c7" stroke-width="0.12" text-anchor="middle" textLength="18.21" lengthAdjust="spacingAndGlyphs" >15:00</text>
<text x="245.74" y="804.60" font-size="7.5" fill="#c4c5c7" stroke="#c4c5c7" stroke-width="0.12" text-anchor="middle" textLength="18.21" lengthAdjust="spacingAndGlyphs" >16:00</text>
<text x="307.96" y="804.60" font-size="7.5" fill="#c4c5c7" stroke="#c4c5c7" stroke-width="0.12" text-anchor="middle" textLength="18.21" lengthAdjust="spacingAndGlyphs" >17:00</text>
<text x="370.18" y="804.60" font-size="7.5" fill="#c4c5c7" stroke="#c4c5c7" stroke-width="0.12" text-anchor="middle" textLength="18.21" lengthAdjust="spacingAndGlyphs" >18:00</text>
<text x="0" y="0" font-size="7.4" fill="#c4c5c7" text-anchor="middle" textLength="36.00" lengthAdjust="spacingAndGlyphs" stroke="#c4c5c7" stroke-width="0.2" transform="translate(21.50,740.60) rotate(-90)" dy="2.66">Latency [s]</text>
<text x="578.00" y="686.40" font-size="7.9" fill="#33b5e5" stroke="#33b5e5" stroke-width="0.3" text-anchor="end" textLength="12.73" lengthAdjust="spacingAndGlyphs" >min</text>
<text x="612.50" y="686.40" font-size="7.9" fill="#33b5e5" stroke="#33b5e5" stroke-width="0.3" text-anchor="end" textLength="14.92" lengthAdjust="spacingAndGlyphs" >max</text>
<text x="647.00" y="686.40" font-size="7.9" fill="#33b5e5" stroke="#33b5e5" stroke-width="0.3" text-anchor="end" textLength="12.74" lengthAdjust="spacingAndGlyphs" >avg</text>
<text x="681.30" y="686.40" font-size="7.9" fill="#33b5e5" stroke="#33b5e5" stroke-width="0.3" text-anchor="end" textLength="24.59" lengthAdjust="spacingAndGlyphs" >current</text>
<rect x="430.00" y="690.00" width="256.30" height="16.25" fill="#27272a" />
<rect x="435.50" y="696.90" width="8" height="2.2" rx="1" fill="#7eb26d"/>
<text x="448.00" y="700.60" font-size="7.4" fill="#d8d9da" textLength="39.91" lengthAdjust="spacingAndGlyphs" >getMeetings</text>
<text x="578.00" y="700.60" font-size="7.7" fill="#d8d9da" text-anchor="end" textLength="19.27" lengthAdjust="spacingAndGlyphs" >0.049</text>
<text x="612.50" y="700.60" font-size="7.7" fill="#d8d9da" text-anchor="end" textLength="19.27" lengthAdjust="spacingAndGlyphs" >0.099</text>
<text x="647.00" y="700.60" font-size="7.7" fill="#d8d9da" text-anchor="end" textLength="19.27" lengthAdjust="spacingAndGlyphs" >0.071</text>
<text x="681.30" y="700.60" font-size="7.7" fill="#d8d9da" text-anchor="end" textLength="19.27" lengthAdjust="spacingAndGlyphs" >0.049</text>
<rect x="435.50" y="713.15" width="8" height="2.2" rx="1" fill="#eab839"/>
<text x="448.00" y="716.85" font-size="7.4" fill="#d8d9da" textLength="84.70" lengthAdjust="spacingAndGlyphs" >getRecordings processing</text>
<text x="578.00" y="716.85" font-size="7.7" fill="#d8d9da" text-anchor="end" textLength="19.27" lengthAdjust="spacingAndGlyphs" >0.049</text>
<text x="612.50" y="716.85" font-size="7.7" fill="#d8d9da" text-anchor="end" textLength="19.27" lengthAdjust="spacingAndGlyphs" >0.157</text>
<text x="647.00" y="716.85" font-size="7.7" fill="#d8d9da" text-anchor="end" textLength="19.27" lengthAdjust="spacingAndGlyphs" >0.079</text>
<text x="681.30" y="716.85" font-size="7.7" fill="#d8d9da" text-anchor="end" textLength="19.27" lengthAdjust="spacingAndGlyphs" >0.155</text>
<rect x="430.00" y="722.50" width="256.30" height="16.25" fill="#27272a" />
<rect x="435.50" y="729.40" width="8" height="2.2" rx="1" fill="#6ed0e0"/>
<text x="448.00" y="733.10" font-size="7.4" fill="#d8d9da" textLength="83.08" lengthAdjust="spacingAndGlyphs" >getRecordings processed</text>
<text x="578.00" y="733.10" font-size="7.7" fill="#d8d9da" text-anchor="end" textLength="19.27" lengthAdjust="spacingAndGlyphs" >0.049</text>
<text x="612.50" y="733.10" font-size="7.7" fill="#d8d9da" text-anchor="end" textLength="18.13" lengthAdjust="spacingAndGlyphs" >0.111</text>
<text x="647.00" y="733.10" font-size="7.7" fill="#d8d9da" text-anchor="end" textLength="19.27" lengthAdjust="spacingAndGlyphs" >0.080</text>
<text x="681.30" y="733.10" font-size="7.7" fill="#d8d9da" text-anchor="end" textLength="19.27" lengthAdjust="spacingAndGlyphs" >0.107</text>
<rect x="435.50" y="745.65" width="8" height="2.2" rx="1" fill="#ef843c"/>
<text x="448.00" y="749.35" font-size="7.4" fill="#d8d9da" textLength="80.64" lengthAdjust="spacingAndGlyphs" >getRecordings published</text>
<text x="578.00" y="749.35" font-size="7.7" fill="#d8d9da" text-anchor="end" textLength="19.27" lengthAdjust="spacingAndGlyphs" >1.519</text>
<text x="612.50" y="749.35" font-size="7.7" fill="#d8d9da" text-anchor="end" textLength="19.27" lengthAdjust="spacingAndGlyphs" >1.973</text>
<text x="647.00" y="749.35" font-size="7.7" fill="#d8d9da" text-anchor="end" textLength="19.27" lengthAdjust="spacingAndGlyphs" >1.738</text>
<text x="681.30" y="749.35" font-size="7.7" fill="#d8d9da" text-anchor="end" textLength="19.27" lengthAdjust="spacingAndGlyphs" >1.718</text>
<rect x="430.00" y="755.00" width="256.30" height="16.25" fill="#27272a" />
<rect x="435.50" y="761.90" width="8" height="2.2" rx="1" fill="#e24d42"/>
<text x="448.00" y="765.60" font-size="7.4" fill="#d8d9da" textLength="88.79" lengthAdjust="spacingAndGlyphs" >getRecordings unpublished</text>
<text x="578.00" y="765.60" font-size="7.7" fill="#d8d9da" text-anchor="end" textLength="19.27" lengthAdjust="spacingAndGlyphs" >0.024</text>
<text x="612.50" y="765.60" font-size="7.7" fill="#d8d9da" text-anchor="end" textLength="19.27" lengthAdjust="spacingAndGlyphs" >0.047</text>
<text x="647.00" y="765.60" font-size="7.7" fill="#d8d9da" text-anchor="end" textLength="19.27" lengthAdjust="spacingAndGlyphs" >0.041</text>
<text x="681.30" y="765.60" font-size="7.7" fill="#d8d9da" text-anchor="end" textLength="19.27" lengthAdjust="spacingAndGlyphs" >0.034</text>
<rect x="435.50" y="778.15" width="8" height="2.2" rx="1" fill="#b877d9"/>
<text x="448.00" y="781.85" font-size="7.4" fill="#d8d9da" textLength="73.31" lengthAdjust="spacingAndGlyphs" >getRecordings deleted</text>
<text x="578.00" y="781.85" font-size="7.7" fill="#d8d9da" text-anchor="end" textLength="19.27" lengthAdjust="spacingAndGlyphs" >1.384</text>
<text x="612.50" y="781.85" font-size="7.7" fill="#d8d9da" text-anchor="end" textLength="19.27" lengthAdjust="spacingAndGlyphs" >1.738</text>
<text x="647.00" y="781.85" font-size="7.7" fill="#d8d9da" text-anchor="end" textLength="19.27" lengthAdjust="spacingAndGlyphs" >1.524</text>
<text x="681.30" y="781.85" font-size="7.7" fill="#d8d9da" text-anchor="end" textLength="19.27" lengthAdjust="spacingAndGlyphs" >1.421</text>
</svg>
</body></html>
